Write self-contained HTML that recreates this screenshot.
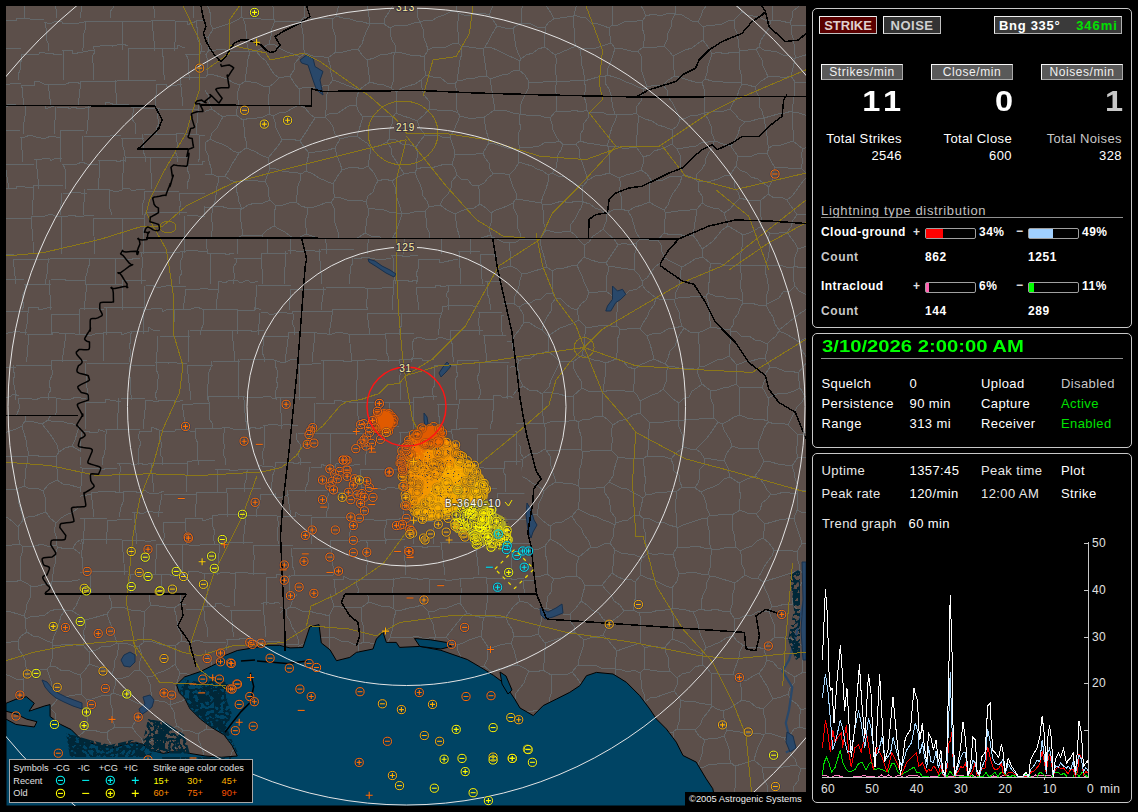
<!DOCTYPE html>
<html><head><meta charset="utf-8"><style>
html,body{margin:0;padding:0;background:#000;width:1138px;height:812px;overflow:hidden;position:relative;font-family:"Liberation Sans", sans-serif;}
.t{position:absolute;white-space:nowrap;line-height:1;font-family:"Liberation Sans", sans-serif;}
</style></head><body>
<div style="position:absolute;left:6px;top:6px;width:800px;height:800px;background:#5c4f4a;overflow:hidden"><svg width="800" height="800" viewBox="6 6 800 800" style="position:absolute;left:0;top:0"><rect x="6" y="6" width="800" height="800" fill="#5c4f4a"/><clipPath id="cRect"><polygon points="6.0,6.0 205.0,6.0 205.0,238.0 495.0,238.0 536.0,594.0 280.0,594.0 280.0,650.0 186.0,650.0 186.0,594.0 80.0,594.0 80.0,415.0 6.0,415.0"/></clipPath><clipPath id="cVor"><path d="M0 0H820V820H0Z M6.0,6.0 L205.0,6.0 L205.0,238.0 L495.0,238.0 L536.0,594.0 L280.0,594.0 L280.0,650.0 L186.0,650.0 L186.0,594.0 L80.0,594.0 L80.0,415.0 L6.0,415.0Z" clip-rule="evenodd"/></clipPath><g fill="none" stroke="#64686a" stroke-width="1" shape-rendering="crispEdges" clip-path="url(#cRect)"><path d="M-2 -4L3 -4L8 -6L14 -4L19 -4L24 -4M-4 -4L-4 1L-4 7L-5 12L-6 18M24 -9L29 -9L35 -10L40 -8L45 -8L50 -9L55 -9M23 -9L25 18M55 -8L67 -8L67 -12L85 -8M54 -8L57 18M85 -6L113 -6M84 -6L81 0L82 6L81 12L80 18M113 -8L118 -8L124 -7L130 -7L135 -8L141 -7L146 -8L152 -8M113 -8L113 -3L113 2L113 8L110 12L110 18M152 -5L157 -5L162 -5L168 -5L173 -4L178 -7L183 -4L189 -5L194 -5M151 -5L150 1L153 6L155 12L154 18M194 -3L224 -3M193 -3L193 18M224 -3L257 -3M226 -3L226 18M257 -11L263 -12L269 -11L275 -12L280 -11M257 -11L258 -5L258 1L258 6L259 12L261 18M280 -7L286 -6L292 -7L298 -7L305 -7M282 -7L281 -2L281 3L280 8L281 13L280 18M305 -4L337 -4M304 -4L302 1L302 7L301 12L300 18M337 -6L343 -6L348 -6L353 -6L353 -4L358 -6L364 -6M339 -6L340 -0L338 6L337 12L336 18M364 -8L400 -8M366 -8L365 18M400 -12L424 -12M398 -12L400 18M424 -11L436 -11L436 -13L447 -11M424 -11L426 -6L425 0L426 6L427 12L426 18M447 -11L473 -11M447 -11L447 -5L448 1L449 6L447 12L449 18M473 -11L492 -11L492 -14L511 -11M473 -11L476 18M511 -3L532 -3L532 -3L549 -3M509 -3L511 18M549 -7L554 -7L559 -8L564 -7L569 -8L574 -6L579 -7M551 -7L553 18M579 -4L584 -6L589 -4L595 -4L600 -3L605 -4L610 -4L615 -4M579 -4L580 1L580 7L581 12L580 18M615 -3L637 -3L637 -7L647 -3M615 -3L617 18M647 -3L660 -3L660 -2L672 -3M647 -3L648 2L646 7L648 12L648 18M672 -10L699 -10M673 -10L677 18M699 -6L717 -6L717 -6L733 -6M698 -6L695 18M733 -7L761 -7M735 -7L734 -2L736 3L737 8L736 13L738 18M761 -11L785 -11M761 -11L763 18M785 -9L791 -9L797 -9L803 -10L808 -8L814 -9L820 -9M783 -9L782 -4L784 2L786 7L786 12L785 18M3 20L16 20L16 18L44 20M2 20L-1 51M44 22L50 24L56 21L62 22L62 24L67 23L73 23L79 23L84 22M45 22L46 28L46 34L46 39L49 45L48 51M84 21L122 21M85 21L86 27L84 33L83 39L84 45L82 51M122 21L151 21M123 21L122 51M151 20L175 20M152 20L155 51M175 21L187 21L187 25L197 21M175 21L176 27L175 33L176 39L174 45L174 51M197 20L203 20L209 21L215 20L215 20L224 20M197 20L196 25L198 30L197 35L198 40L201 45L201 51M224 20L253 20M225 20L225 25L223 30L226 35L224 40L223 45L224 51M253 17L258 16L264 16L269 16L275 17L281 17M253 17L253 23L254 28L253 34L253 39L255 45L255 51M281 20L319 20M279 20L276 51M319 21L334 21L334 22L350 21M320 21L320 51M350 13L355 13L360 11L365 13L370 13L375 11L381 13L386 13M351 13L354 51M386 17L410 17M385 17L387 51M410 22L416 20L421 22L427 20L432 20L438 23L443 22L449 22M412 22L413 27L411 33L409 39L411 45L410 51M449 15L459 15L459 16L472 15M447 15L448 20L449 25L449 30L447 36L450 40L450 46L449 51M472 21L478 21L484 20L489 20L495 21M470 21L471 27L470 33L471 39L469 45L469 51M495 17L501 16L506 17L512 16L517 17L523 17M497 17L497 23L497 29L499 34L497 40L499 45L497 51M523 15L529 16L535 15L535 14L542 13L548 15M522 15L518 51M548 23L555 23L561 23L567 23L567 25L574 24L581 23M550 23L551 51M581 14L613 14M580 14L580 19L580 24L578 30L580 35L579 40L578 45L579 51M613 22L618 22L624 22L629 22L635 22L641 23L646 22M614 22L615 51M646 20L666 20L666 19L688 20M646 20L646 25L648 30L646 36L649 40L648 46L648 51M688 20L719 20M689 20L689 51M719 20L738 20L738 23L749 20M720 20L718 51M749 16L771 16L771 14L783 16M750 16L749 22L750 28L750 33L750 39L749 45L749 51M783 17L789 16L794 16L799 17L804 17L809 19L815 17L820 17M783 17L781 23L784 29L781 34L783 40L780 45L781 51M-8 48L21 48M-7 48L-6 53L-5 59L-4 64L-6 70L-5 75L-3 80M21 54L27 54L33 55L39 54L39 52L45 53L51 53L56 55L62 54M21 54L22 59L20 64L20 70L18 75L18 80M62 50L72 50L72 54L94 50M63 50L63 80M94 46L100 46L106 45L112 46L112 45L117 45L123 44L128 46M93 46L95 52L92 57L93 63L93 69L93 75L93 80M128 48L142 48L142 49L163 48M128 48L129 80M163 48L177 48L177 45L185 48M162 48L162 54L164 59L163 64L163 70L164 75L164 80M185 54L193 55L200 54L200 52L205 51L210 53L215 52L220 55L225 54M186 54L188 59L189 64L188 70L189 75L190 80M225 53L265 53M224 53L225 58L224 64L225 69L225 75L226 80M265 52L297 52M266 52L267 80M297 49L310 49L310 52L320 49M297 49L297 54L298 60L297 65L295 70L295 75L296 80M320 55L349 55M322 55L324 61L323 68L323 74L324 80M349 52L381 52M347 52L345 80M381 54L409 54M382 54L381 60L383 65L385 70L384 75L384 80M409 54L427 54L427 55L436 54M411 54L412 59L411 65L411 70L409 75L409 80M436 47L452 47L452 49L467 47M434 47L433 53L433 58L435 64L434 69L434 75L436 80M467 51L472 50L478 50L483 53L489 53L494 50L500 50L505 51M468 51L469 57L471 63L470 69L472 74L471 80M505 53L511 52L517 53L523 52L528 53M507 53L505 58L506 64L507 69L505 75L504 80M528 50L561 50M529 50L526 80M561 49L566 50L571 48L576 50L582 48L587 49L592 49L597 49L602 49M561 49L562 54L564 59L563 65L564 70L565 75L565 80M602 49L613 49L613 45L628 49M602 49L600 80M628 47L634 46L640 47L647 47L647 46L652 47L658 46L663 47M628 47L629 53L627 58L628 64L628 69L629 75L628 80M663 55L691 55L691 57L704 55M662 55L663 60L664 65L666 70L664 75L666 80M704 56L727 56L727 57L738 56M704 56L705 62L706 68L704 74L706 80M738 48L775 48M736 48L736 53L736 59L735 64L734 69L736 75L734 80M775 49L790 49L790 48L798 49M774 49L773 54L773 60L775 65L774 70L777 75L776 80M798 49L803 47L808 49L813 49L818 49L824 47L829 50L834 49L839 49M799 49L800 54L796 59L796 64L798 70L794 75L795 80M-1 84L5 84L10 84L16 83L21 84M1 84L-1 106M21 85L28 85L34 85L34 81L40 82L46 85M21 85L23 90L22 95L24 101L23 106M46 84L51 85L56 84L61 85L66 84L71 82L76 82L81 84M48 84L51 106M81 81L117 81M81 81L78 106M117 80L123 80L128 80L134 81L139 80L145 80L150 80L156 80M115 80L117 106M156 84L166 84L166 87L182 84M157 84L155 106M182 77L209 77M180 77L183 106M209 77L215 76L221 76L226 77L226 77L232 78L238 77M209 77L209 83L207 88L209 94L207 100L206 106M238 80L244 79L249 79L255 80L261 80M239 80L238 106M261 81L267 80L273 83L279 80L286 81M261 81L261 88L261 94L262 100L261 106M286 78L301 78L301 77L317 78M285 78L287 106M317 84L332 84L332 81L342 84M318 84L317 90L319 95L321 100L320 106M342 82L348 82L353 83L359 83L365 83L371 82M340 82L340 106M371 84L402 84M369 84L367 106M402 81L407 81L413 82L418 81L423 81L428 82L433 81M403 81L402 106M433 84L455 84M432 84L433 106M455 77L492 77M455 77L455 83L455 89L456 95L456 100L456 106M492 76L498 75L504 77L510 76L510 75L516 75L523 76L529 76M491 76L492 81L489 86L490 91L489 96L490 101L488 106M529 76L535 77L540 77L546 76L552 76L557 76L557 78L564 76L571 76M530 76L528 106M571 80L576 80L581 79L586 80L591 79L597 80L602 79L607 80M572 80L574 85L575 90L573 96L575 101L575 106M607 85L612 86L617 85L622 84L627 85L627 85L637 85M608 85L608 90L609 96L605 101L606 106M637 77L674 77M638 77L638 106M674 79L679 79L685 79L690 79L695 79L701 80L706 79L711 79M673 79L672 84L671 90L672 95L672 101L670 106M711 83L717 84L722 84L727 83L733 82L738 83L743 82L749 83M711 83L710 106M749 80L754 80L760 80L760 77L766 79L772 80M749 80L749 106M772 83L805 83M773 83L774 106M805 77L815 77L815 80L836 77M806 77L806 106M-7 106L7 106L7 104L24 106M-8 106L-9 112L-7 117L-9 123L-7 128L-7 134M24 105L29 105L34 106L40 105L45 105L45 109L51 107L57 105M25 105L26 111L25 116L24 122L23 128L24 134M57 107L63 107L68 107L68 109L74 107L79 109L85 108L90 107M56 107L54 134M90 106L97 106L105 106L105 102L110 103L115 105L120 104L126 104L131 106M89 106L88 111L89 117L87 123L88 128L86 134M131 108L137 107L143 108L149 108L154 109L160 108M133 108L133 113L132 119L135 123L136 129L135 134M160 109L198 109M159 109L157 114L158 119L159 124L156 129L156 134M198 102L203 103L209 102L214 102L220 103L225 101L231 102M199 102L196 134M231 103L272 103M229 103L228 108L229 114L227 119L225 124L226 129L225 134M272 110L277 110L283 110L289 110L294 110M271 110L271 116L273 122L274 128L273 134M294 110L301 109L307 110L307 107L313 108L318 110L323 109L329 110M293 110L290 134M329 106L354 106L354 106L366 106M329 106L327 134M366 107L381 107L381 108L397 107M368 107L368 112L368 118L368 123L366 129L365 134M397 111L408 111L408 113L432 111M398 111L397 117L398 122L399 128L399 134M432 104L437 103L443 103L449 104L455 104L461 104M430 104L432 134M461 101L470 101L470 105L489 101M463 101L463 134M489 103L494 104L499 104L504 103L510 104L515 102L520 102L526 103M490 103L493 134M526 106L531 107L536 106L541 105L546 106L552 105L557 106L562 107L567 106M525 106L523 111L525 117L524 123L522 128L522 134M567 104L573 106L579 104L585 104L590 104L590 103L597 103L603 104M567 104L567 110L568 116L569 122L569 128L569 134M603 103L627 103M605 103L601 134M627 105L658 105M626 105L625 134M658 111L664 111L669 111L669 111L675 112L680 112L686 111M659 111L660 117L658 122L658 128L657 134M686 102L693 103L701 102L701 106L706 105L711 102M687 102L687 134M711 103L716 103L722 104L728 103L733 103L739 103M713 103L715 134M739 105L771 105M741 105L740 110L738 116L740 122L740 128L738 134M771 109L803 109M773 109L774 134M803 104L808 104L813 104L818 103L823 104L829 104L834 104L839 104M802 104L802 110L800 116L799 122L800 128L800 134M-13 130L4 130L4 130L20 130M-11 130L-13 135L-12 141L-13 146L-13 151L-14 157L-14 162M20 137L25 137L30 135L36 137L36 137L41 138L46 138L51 136L56 137L61 137M21 137L23 162M61 130L84 130M60 130L61 162M84 136L90 136L95 137L100 136L105 137L110 136L116 135L121 136M83 136L82 162M121 138L144 138M123 138L122 144L124 150L125 156L126 162M144 134L176 134M142 134L143 140L143 145L143 151L145 156L145 162M176 134L181 133L187 135L193 134L199 134M177 134L176 139L178 145L175 151L177 156L177 162M199 135L214 135L214 131L229 135M200 135L199 140L199 146L199 151L200 157L198 162M229 139L258 139M227 139L228 162M258 129L264 128L270 129L275 129L281 129M258 129L258 162M281 136L299 136L299 139L323 136M282 136L280 141L280 146L281 152L282 157L280 162M323 137L328 137L334 136L340 138L345 137L351 137L357 137M323 137L324 142L322 147L322 152L321 157L321 162M357 136L372 136L372 135L390 136M355 136L357 141L355 146L355 152L355 157L355 162M390 139L423 139M392 139L390 145L390 150L393 156L391 162M423 131L449 131M425 131L423 162M449 136L455 137L461 136L461 139L466 139L470 137L475 136M449 136L451 141L448 146L450 152L448 157L450 162M475 138L480 138L485 138L490 138L490 140L498 138M476 138L475 144L476 150L475 156L475 162M498 135L505 135L511 135L518 135L518 135L525 134L532 135M497 135L497 140L497 146L497 151L498 157L497 162M532 138L537 139L542 139L547 139L552 138L557 138L562 138L567 138M532 138L533 144L535 150L534 156L534 162M567 129L572 129L578 130L583 129L588 129L593 130L598 129L603 130L608 129M567 129L568 135L568 140L570 145L568 151L570 156L570 162M608 132L614 132L619 132L624 133L630 133L635 132L641 132L646 132M609 132L610 162M646 132L677 132M648 132L648 138L647 144L649 150L648 156L648 162M677 132L693 132L693 132L708 132M676 132L677 137L674 142L675 147L676 152L673 157L674 162M708 135L744 135M707 135L710 162M744 139L749 138L754 139L759 139L764 139L769 138L775 139M744 139L743 145L743 150L743 156L743 162M775 130L792 130L792 127L808 130M775 130L774 136L775 141L773 146L774 152L774 157L772 162M808 135L841 135M806 135L804 162M4 164L34 164M5 164L9 189M34 159L39 160L45 158L50 159L50 161L56 158L62 159M36 159L39 189M62 164L67 165L72 164L77 164L82 162L87 164L93 164L98 164M63 164L65 169L65 174L66 179L65 184L65 189M98 160L116 160L116 162L125 160M99 160L99 166L99 172L99 178L98 184L98 189M125 157L131 157L137 157L143 157L149 157M124 157L122 189M149 157L188 157M150 157L152 189M188 164L195 164L202 164L202 161L209 161L215 164L222 164M187 164L187 169L189 174L189 179L187 184L187 189M222 166L227 168L232 165L237 165L243 166L248 168L253 165L258 166L263 166M223 166L222 172L223 178L224 184L223 189M263 163L304 163M262 163L260 189M304 166L339 166M305 166L302 189M339 163L374 163M340 163L341 168L340 174L339 179L340 184L341 189M374 157L379 157L384 156L389 157L395 157L400 156L405 157L410 158L415 157M375 157L374 162L374 168L373 173L373 179L376 184L374 189M415 165L420 166L426 165L431 166L436 166L441 164L446 165M413 165L414 171L414 177L417 183L416 189M446 159L461 159L461 157L474 159M448 159L449 164L449 169L449 174L447 179L446 184L447 189M474 164L479 164L485 164L490 164L495 164L500 164M475 164L475 169L475 174L475 179L475 184L475 189M500 161L507 160L514 161L514 165L520 163L526 161M498 161L498 189M526 160L559 160M527 160L528 166L528 172L528 178L529 183L529 189M559 163L571 163L571 165L586 163M561 163L560 189M586 160L622 160M588 160L589 189M622 161L627 161L632 161L637 159L642 159L647 162L652 161M622 161L625 189M652 157L673 157L673 160L684 157M650 157L649 163L649 168L647 173L648 179L647 184L646 189M684 164L718 164M682 164L680 189M718 161L757 161M719 161L718 167L716 172L717 178L717 184L716 189M757 165L775 165L775 169L787 165M758 165L754 189M787 162L793 161L798 162L803 161L808 162L814 163L819 162L824 162L829 162M786 162L785 167L786 173L783 178L782 184L783 189M6 188L16 188L16 186L34 188M6 188L5 215M34 185L63 185M34 185L32 215M63 193L69 193L75 192L81 193L87 193M62 193L60 215M87 189L110 189M85 189L83 215M110 190L116 192L122 190L122 189L128 188L133 191L139 189L145 190M109 190L110 197L109 203L110 209L112 215M145 191L179 191M144 191L145 197L143 203L142 209L143 215M179 193L208 193M179 193L179 198L181 204L179 209L180 215M208 187L213 186L218 186L224 187L229 189L234 187L239 187M207 187L204 215M239 189L268 189M239 189L241 194L240 199L240 205L242 210L242 215M268 187L293 187M269 187L270 193L268 198L270 204L269 209L269 215M293 187L315 187M293 187L294 215M315 192L345 192M314 192L310 215M345 194L365 194L365 191L375 194M344 194L342 215M375 189L407 189M374 189L377 215M407 191L445 191M408 191L406 215M445 190L471 190M445 190L446 195L445 200L444 205L443 210L443 215M471 189L477 189L483 189L483 187L489 188L495 188L502 189M470 189L468 215M502 189L537 189M501 189L500 215M537 189L543 189L548 189L554 189L554 191L560 191L566 189M536 189L534 215M566 190L602 190M566 190L565 195L565 200L565 205L562 210L563 215M602 188L627 188M601 188L598 215M627 194L665 194M628 194L629 199L627 205L627 210L627 215M665 192L676 192L676 190L698 192M666 192L668 198L667 204L667 209L667 215M698 190L726 190M699 190L702 215M726 189L731 189L736 190L742 189L747 187L752 189M725 189L728 215M752 186L791 186M753 186L755 191L754 197L754 203L754 209L755 215M791 192L830 192M792 192L790 198L789 204L789 209L789 215M-9 218L15 218L15 218L31 218M-10 218L-10 223L-10 229L-10 234L-11 239L-9 244L-8 249L-9 254M31 216L38 216L45 216L45 216L51 214L57 217L62 216M31 216L34 254M62 216L68 216L73 215L78 217L84 216L89 215L94 216M61 216L61 254M94 218L109 218L109 219L121 218M93 218L95 254M121 218L145 218M123 218L122 254M145 212L187 212M146 212L144 217L145 223L144 228L143 233L144 239L143 244L144 249L143 254M187 216L192 215L198 216L204 216L210 216M185 216L184 254M210 217L215 216L220 217L225 217L225 219L230 217L236 217M208 217L208 222L208 228L206 233L206 238L206 244L207 249L207 254M236 218L242 218L248 218L254 218L260 218L266 218M236 218L236 223L238 228L238 234L237 239L237 244L237 249L238 254M266 211L291 211M266 211L268 254M291 213L296 214L302 213L308 214L314 213L320 213L326 213M292 213L290 254M326 220L366 220M326 220L326 225L324 231L325 237L326 243L327 249L326 254M366 216L371 215L377 216L382 216L388 216L394 216L399 217L405 216M364 216L366 221L364 227L367 232L368 238L368 243L367 249L368 254M405 215L411 215L416 215L416 212L422 214L428 213L434 215L440 215M404 215L404 221L404 227L404 232L404 238L405 243L404 249L403 254M440 216L458 216L458 218L471 216M440 216L442 254M471 215L476 215L481 217L486 215L491 217L496 215L501 215L507 217L512 215M472 215L470 254M512 216L529 216L529 215L548 216M512 216L511 254M548 216L572 216M548 216L547 221L547 227L548 232L545 238L547 243L545 249L544 254M572 220L577 220L583 221L588 220L588 221L598 220M571 220L574 254M598 216L619 216L619 212L636 216M598 216L594 254M636 219L676 219M634 219L634 254M676 218L703 218M675 218L676 223L676 228L677 234L677 239L679 244L678 249L679 254M703 214L709 215L714 214L719 212L725 215L730 214M702 214L702 254M730 211L735 211L741 211L746 211L751 210L757 212L762 211M730 211L730 216L732 222L731 227L731 233L732 238L731 243L732 249L732 254M762 219L790 219M763 219L762 254M790 220L806 220L806 216L816 220M790 220L788 254M-17 254L14 254M-16 254L-16 259L-16 264L-18 269L-17 274L-17 279L-17 284M14 259L50 259M13 259L16 284M50 258L91 258M49 258L48 263L47 268L47 274L46 279L45 284M91 258L97 258L104 259L110 258L116 258M89 258L90 263L88 268L87 273L85 279L86 284M116 259L121 258L127 259L132 259L132 258L140 259M115 259L115 284M140 252L180 252M141 252L142 257L142 263L142 268L141 273L141 279L142 284M180 251L186 251L192 250L198 251L198 251L208 251M182 251L183 256L180 262L180 267L182 273L179 278L180 284M208 253L225 253L225 255L234 253M210 253L210 258L210 263L210 268L210 274L210 279L210 284M234 258L261 258M236 258L236 263L233 268L234 273L234 279L233 284M261 253L288 253M261 253L263 284M288 251L293 250L299 252L304 251L310 250L315 251L321 251M286 251L284 284M321 249L354 249M320 249L319 255L320 261L320 267L321 273L321 278L321 284M354 258L359 259L364 257L370 258L375 259L380 259L386 259L391 258M352 258L353 263L350 268L350 274L349 279L349 284M391 255L402 255L402 257L418 255M392 255L394 261L393 267L394 273L394 278L396 284M418 259L439 259L439 263L458 259M418 259L418 264L418 269L416 274L418 279L416 284M458 251L480 251M459 251L461 284M480 254L494 254L494 257L511 254M480 254L480 259L481 264L482 269L481 274L482 279L482 284M511 253L539 253M510 253L509 258L508 263L510 268L509 274L510 279L509 284M539 251L580 251M537 251L535 284M580 257L616 257M579 257L577 284M616 258L630 258L630 257L649 258M616 258L617 284M649 251L657 251L657 254L672 251M649 251L649 257L650 262L649 268L647 273L650 279L649 284M672 254L686 254L686 252L701 254M670 254L670 259L669 264L672 269L671 274L671 279L672 284M701 258L740 258M702 258L704 263L701 268L702 273L704 279L702 284M740 256L745 256L750 256L755 255L760 256L765 256L770 256L775 256L780 256M738 256L739 262L738 268L738 273L736 279L738 284M780 257L808 257M780 257L781 262L780 268L782 273L780 279L780 284M808 251L813 251L818 251L823 251L828 252L833 252L839 251M810 251L811 256L809 262L809 267L807 273L809 279L808 284M-12 279L24 279M-13 279L-14 285L-13 290L-14 295L-13 300L-13 305L-11 310M24 284L51 284M25 284L26 289L23 294L22 300L24 305L22 310M51 280L57 279L63 279L68 281L74 280L80 280L85 280M49 280L51 310M85 284L123 284M87 284L84 310M123 280L146 280M122 280L122 310M146 286L151 285L156 287L161 287L166 286L166 285L171 286L176 287L181 286L186 286M145 286L144 310M186 289L192 289L197 290L203 288L208 289L214 289L219 289M186 289L183 310M219 281L225 283L230 280L236 280L241 283L247 280L252 283L258 281M218 281L219 287L218 293L217 299L216 305L217 310M258 285L277 285L277 285L291 285M257 285L255 310M291 289L326 289M291 289L289 310M326 287L365 287M324 287L321 310M365 288L371 288L376 289L382 288L387 287L393 288M367 288L367 294L367 299L366 305L368 310M393 280L408 280L408 282L417 280M394 280L392 310M417 287L435 287L435 285L446 287M416 287L419 310M446 285L485 285M448 285L449 290L446 295L449 300L448 305L448 310M485 281L525 281M487 281L488 287L487 293L489 298L490 304L490 310M525 285L542 285L542 281L556 285M526 285L527 291L525 295L524 300L525 306L523 310M556 283L591 283M555 283L552 310M591 282L613 282M592 282L593 310M613 283L630 283L630 283L649 283M615 283L613 310M649 285L673 285L673 289L686 285M651 285L650 310M686 288L727 288M687 288L686 294L685 299L683 305L684 310M727 287L732 287L737 287L742 287L748 287L753 287L758 287L763 287M726 287L728 293L726 299L726 305L726 310M763 285L783 285L783 287L799 285M763 285L763 290L762 295L760 300L761 305L761 310M799 284L804 284L810 285L815 283L820 285L826 284L831 284L837 284M799 284L801 289L799 295L801 300L802 305L802 310M3 311L9 311L15 311L21 312L28 311M4 311L3 317L5 323L4 329L4 335M28 307L38 307L38 310L52 307M28 307L28 313L27 318L27 324L26 329L25 335M52 314L80 314M52 314L51 335M80 309L86 308L92 308L98 309L104 309M79 309L80 335M104 307L145 307M106 307L107 335M145 309L151 309L157 308L162 309L162 312L168 309L175 309M144 309L143 335M175 309L180 309L186 310L191 309L197 307L202 309M175 309L173 335M202 309L238 309M204 309L203 314L204 320L203 325L201 330L200 335M238 310L254 310L254 307L261 310M238 310L237 335M261 313L266 312L271 315L277 313L282 312L287 313L292 313M259 313L259 319L259 324L258 329L259 335M292 311L332 311M292 311L294 317L292 323L295 329L294 335M332 309L368 309M333 309L329 335M368 313L403 313M367 313L370 335M403 313L442 313M402 313L401 318L402 324L400 329L399 335M442 306L447 306L452 305L457 305L462 306L467 305L473 306L478 306M442 306L442 312L440 318L439 323L439 329L438 335M478 312L502 312M479 312L479 318L478 323L480 329L479 335M502 315L543 315M502 315L501 322L501 328L503 335M543 315L579 315M544 315L542 335M579 315L584 316L590 315L595 316L600 314L605 314L610 316L615 315M581 315L580 335M615 309L623 309L623 307L628 309L633 310L639 309M613 309L613 314L612 319L610 324L612 330L610 335M639 314L645 313L651 314L657 315L663 314M640 314L636 335M663 313L668 313L673 313L678 314L683 313L688 312L693 313M664 313L664 319L666 324L667 329L668 335M693 307L721 307M692 307L692 335M721 311L738 311L738 309L752 311M722 311L719 335M752 306L758 307L763 305L769 307L775 306L780 306M753 306L752 335M780 306L806 306M780 306L777 335M806 309L832 309M807 309L807 314L807 319L806 324L808 329L807 335M-13 332L-8 332L-3 331L3 333L8 333L13 332L13 331L20 332L27 332M-12 332L-9 362M27 334L52 334L52 332L65 334M29 334L28 340L28 345L27 351L27 357L26 362M65 334L70 333L75 334L80 334L85 334L85 335L92 335L98 333L104 334M66 334L62 362M104 332L121 332L121 335L130 332M104 332L103 362M130 331L136 331L142 331L148 331L148 327L153 330L160 331M132 331L130 336L131 341L129 346L131 352L130 357L129 362M160 336L190 336M158 336L157 341L158 347L157 352L156 357L157 362M190 330L231 330M188 330L188 362M231 330L251 330L251 332L264 330M232 330L235 362M264 336L273 336L273 337L289 336M262 336L264 341L263 346L262 352L264 357L264 362M289 332L295 333L300 332L306 332L311 332L317 332M289 332L285 362M317 333L322 333L327 334L332 334L338 332L343 333L348 333M315 333L312 362M348 334L385 334M349 334L352 362M385 333L414 333M385 333L386 339L387 345L386 351L388 356L388 362M414 339L419 337L425 339L430 339L435 340L440 337L446 339L451 339M414 339L412 344L413 350L413 357L411 362M451 330L483 330M450 330L450 336L451 341L453 346L452 352L453 357L453 362M483 335L516 335M484 335L487 362M516 332L531 332L531 333L553 332M517 332L517 337L517 342L516 347L517 352L515 357L516 362M553 332L592 332M554 332L554 337L552 342L555 347L553 352L554 357L553 362M592 338L621 338M592 338L592 362M621 330L646 330M620 330L620 336L619 341L621 346L618 352L619 357L619 362M646 334L658 334L658 337L678 334M645 334L645 362M678 330L713 330M677 330L677 335L675 341L676 346L675 352L676 357L674 362M713 334L747 334M712 334L712 340L710 345L711 351L709 357L709 362M747 336L765 336L765 333L787 336M747 336L747 341L748 346L749 352L751 357L750 362M787 336L827 336M788 336L788 341L788 346L788 352L784 357L785 362M-15 367L-10 368L-5 367L0 366L5 367L11 368L16 367M-15 367L-17 372L-14 378L-17 384L-16 389L-17 395L-17 400M16 365L52 365M14 365L13 370L15 375L13 380L14 385L15 390L16 395L15 400M52 360L87 360M51 360L51 365L52 370L52 375L50 380L49 385L51 390L48 395L49 400M87 363L129 363M85 363L88 400M129 365L155 365M129 365L129 370L129 375L131 380L130 385L130 390L131 395L131 400M155 363L162 362L168 363L168 362L174 362L180 364L187 363M156 363L156 369L158 374L158 379L157 385L157 390L155 395L157 400M187 365L192 365L197 365L202 366L207 365L213 365M187 365L191 400M213 361L240 361M211 361L211 367L209 372L208 378L208 384L207 389L208 395L207 400M240 359L274 359M239 359L238 400M274 360L280 362L286 362L292 359L298 360M276 360L275 365L277 370L278 375L276 380L278 385L276 390L275 395L277 400M298 364L303 364L309 365L315 363L321 364M299 364L300 400M321 360L343 360L343 362L360 360M323 360L323 400M360 360L365 360L371 359L377 360L382 360L388 360L394 361L400 360M358 360L356 400M400 359L405 359L411 359L417 358L422 359L422 360L428 361L434 359M400 359L399 364L401 369L400 375L399 380L401 385L400 390L400 395L400 400M434 365L457 365M434 365L434 370L435 375L434 380L435 385L432 390L433 395L433 400M457 360L479 360M457 360L457 365L456 370L458 375L455 380L455 385L456 390L457 395L456 400M479 362L510 362M479 362L479 367L479 373L477 378L479 384L480 389L480 395L478 400M510 365L536 365M508 365L507 400M536 364L575 364M536 364L535 369L536 374L535 379L534 385L534 390L534 395L534 400M575 362L614 362M575 362L573 368L573 373L574 379L575 384L574 390L573 395L574 400M614 367L635 367L635 368L653 367M615 367L616 373L616 378L614 384L615 389L613 395L614 400M653 367L658 368L664 366L669 366L674 367L679 367L684 367M652 367L650 400M684 360L712 360M684 360L687 400M712 367L746 367M710 367L711 373L711 378L711 384L713 389L712 395L712 400M746 367L770 367M747 367L747 372L746 378L747 384L747 389L748 395L747 400M770 360L775 360L780 360L785 360L785 357L791 360L798 360M771 360L770 400M798 363L805 363L811 362L818 363L818 367L823 364L829 366L834 365L840 363M798 363L796 400M-6 396L-1 396L4 397L9 397L14 394L19 396M-6 396L-5 429M19 398L24 398L29 398L35 400L40 398L45 397L51 397L56 398M18 398L19 404L19 409L17 414L15 419L16 424L16 429M56 398L61 399L66 399L71 399L76 397L81 398L86 398M57 398L55 429M86 402L105 402L105 399L121 402M85 402L85 429M121 398L127 398L133 398L139 398L145 398M119 398L117 429M145 400L150 400L156 402L161 400L167 400L172 400L177 402L183 400M146 400L143 429M183 404L188 404L193 404L198 403L203 403L209 404M182 404L186 429M209 396L245 396M208 396L209 402L209 407L210 413L209 419L213 424L212 429M245 397L251 397L257 397L263 397L269 396L274 399L280 397M243 397L245 403L244 408L245 413L245 419L247 424L246 429M280 397L316 397M280 397L282 429M316 403L334 403L334 400L357 403M314 403L314 429M357 402L379 402L379 404L390 402M357 402L359 429M390 402L413 402M390 402L389 408L392 413L389 419L391 424L391 429M413 397L423 397L423 396L437 397M414 397L413 429M437 404L459 404M438 404L439 409L438 414L440 419L439 424L439 429M459 399L493 399M459 399L459 404L458 409L457 414L457 419L456 424L456 429M493 396L499 395L504 398L509 396L514 398L520 396L525 396M494 396L493 402L494 408L492 413L493 419L491 424L490 429M525 403L531 403L537 404L542 403L548 403L554 403M526 403L523 429M554 396L562 396L569 396L569 394L575 394L581 396L587 396M555 396L557 402L555 407L556 413L556 418L557 424L556 429M587 402L619 402M588 402L588 408L588 413L592 418L592 424L592 429M619 399L639 399L639 398L657 399M620 399L619 429M657 395L674 395L674 392L698 395M659 395L658 401L656 407L657 412L655 418L655 424L655 429M698 400L708 400L708 403L722 400M697 400L697 406L697 412L695 418L697 424L696 429M722 404L748 404M724 404L725 429M748 401L760 401L760 403L784 401M749 401L749 407L749 412L750 418L748 424L748 429M784 396L812 396M784 396L782 429M-6 430L25 430M-7 430L-7 465M25 430L36 430L36 427L49 430M26 430L23 465M49 429L82 429M49 429L51 465M82 432L87 431L92 433L98 432L98 429L105 432M81 432L81 438L80 443L81 449L79 454L81 460L80 465M105 429L140 429M106 429L106 434L105 439L105 444L105 450L104 455L102 460L103 465M140 431L151 431L151 427L162 431M140 431L138 437L141 443L139 448L138 454L139 460L138 465M162 431L168 432L175 431L175 429L180 430L185 429L190 431L196 431M160 431L159 437L161 442L161 448L160 454L163 459L162 465M196 428L222 428M195 428L195 433L196 439L198 444L197 449L197 455L198 460L198 465M222 427L227 427L233 429L238 429L243 429L248 429L253 427L258 429L263 427M224 427L224 433L223 438L224 444L224 449L223 454L226 460L225 465M263 425L268 425L273 424L278 425L283 425L288 424L293 426L298 425M265 425L264 431L264 437L264 442L264 448L262 454L263 459L263 465M298 433L303 433L308 435L313 433L318 433L324 433L329 433M297 433L296 439L300 444L300 449L298 455L301 460L300 465M329 433L334 433L339 433L344 433L350 433L355 433L360 433L366 433M330 433L331 465M366 427L372 425L378 427L385 427L385 426L392 425L399 427M366 427L368 432L367 438L366 443L366 449L366 454L365 460L365 465M399 432L408 432L408 431L415 432L422 432M400 432L401 438L400 443L397 448L399 454L397 460L396 465M422 432L427 433L432 431L437 432L442 432L447 431L452 432M421 432L422 438L424 443L423 449L425 454L424 460L424 465M452 429L457 430L462 428L468 429L473 428L478 429M451 429L452 434L453 439L454 444L453 450L454 455L454 460L455 465M478 434L515 434M478 434L477 465M515 431L521 431L526 431L532 431L532 429L538 430L543 431L549 431M516 431L517 465M549 432L554 432L560 430L565 430L570 432L575 432L580 433L585 432M549 432L551 465M585 426L625 426M585 426L587 465M625 426L638 426L638 427L659 426M625 426L625 431L627 437L626 442L626 448L628 454L628 459L627 465M659 425L689 425M659 425L660 431L660 437L660 442L660 448L660 454L659 459L660 465M689 433L695 434L701 434L707 433L712 433M688 433L687 465M712 430L748 430M713 430L711 465M748 434L762 434L762 433L781 434M746 434L745 439L747 444L746 449L746 455L744 460L745 465M781 428L792 428L792 425L810 428M783 428L783 465M810 430L815 429L820 432L825 432L831 432L836 430L841 429L846 430M810 430L811 465M-12 470L-1 470L-1 471L24 470M-11 470L-9 475L-10 481L-10 487L-8 492M24 468L40 468L40 470L53 468M22 468L22 474L21 480L20 486L21 492M53 467L82 467M52 467L50 492M82 469L87 468L92 469L97 468L102 470L107 468L112 468L117 469M83 469L81 475L82 481L81 486L80 492M117 463L123 463L128 463L134 465L140 463L145 465L151 463M119 463L121 469L119 475L120 481L119 486L120 492M151 463L168 463L168 463L187 463M151 463L154 492M187 461L192 461L198 460L204 461L209 460L215 461M188 461L186 492M215 469L229 469L229 471L247 469M217 469L217 475L217 480L218 486L217 492M247 469L253 469L259 469L259 465L265 467L271 466L276 469M248 469L246 474L246 480L244 486L245 492M276 462L283 462L291 462L291 462L296 464L301 462L306 462L311 462M275 462L275 467L274 472L272 477L272 482L271 487L271 492M311 467L321 467L321 464L326 466L331 465L336 467M309 467L309 472L308 477L308 482L306 487L305 492M336 464L342 463L348 465L354 465L360 464M335 464L335 470L336 475L334 481L333 486L333 492M360 469L398 469M360 469L362 492M398 462L403 464L409 461L414 462L419 464L425 462M399 462L402 492M425 465L447 465M423 465L424 470L424 476L426 481L425 487L425 492M447 467L476 467M447 467L447 472L448 477L448 482L446 487L446 492M476 468L481 467L487 469L493 468L499 468L504 468M476 468L477 474L475 480L475 486L473 492M504 461L533 461M504 461L505 466L503 471L506 476L505 482L505 487L505 492M533 461L538 461L543 461L549 461L554 460L559 461M533 461L533 467L533 472L531 477L531 482L531 487L532 492M559 469L564 469L569 469L574 468L579 469L585 471L590 469L595 471L600 469M561 469L565 492M600 470L613 470L613 466L633 470M600 470L602 475L602 481L602 486L601 492M633 467L666 467M632 467L633 472L632 477L634 482L635 487L636 492M666 467L673 467L680 467L680 468L688 467M664 467L665 492M688 468L719 468M687 468L688 474L688 480L685 486L687 492M719 464L726 466L732 464L732 466L739 464L746 464M721 464L721 492M746 465L768 465M747 465L746 470L747 476L745 481L745 487L744 492M768 466L774 468L779 466L785 468L790 466L795 466M768 466L768 492M795 464L801 465L806 464L811 464L816 465L821 465L827 464L832 464M796 464L795 470L796 475L795 481L798 486L796 492M-9 490L7 490L7 493L30 490M-11 490L-11 495L-10 501L-14 506L-13 512L-13 517M30 494L35 494L41 495L46 494L52 494L57 494M30 494L32 500L33 505L32 511L33 517M57 494L76 494L76 497L92 494M56 494L59 517M92 492L98 492L103 491L108 491L113 491L118 493L124 492M91 492L94 517M124 491L129 491L134 491L139 493L144 490L149 493L154 493L159 493L164 491M123 491L123 497L123 502L121 507L120 512L119 517M164 494L197 494M162 494L158 517M197 492L227 492M197 492L195 517M227 488L232 488L238 488L244 488L250 488L255 488L261 488M226 488L227 493L227 499L228 505L227 511L228 517M261 494L268 495L275 494L275 498L282 497L289 494M260 494L260 500L259 506L256 511L256 517M289 490L331 490M287 490L291 517M331 493L336 493L341 492L346 493L346 493L354 494L361 493M329 493L327 499L329 506L327 511L326 517M361 488L367 487L372 490L378 488L384 490L389 487L395 488L401 488M361 488L364 517M401 495L406 495L411 495L416 494L421 494L426 495L431 495M401 495L404 517M431 491L437 491L442 492L447 492L452 491L457 490L462 492L467 491M432 491L429 517M467 489L473 490L479 488L485 489L491 488L497 489M468 489L465 517M497 493L533 493M497 493L498 499L496 505L496 511L495 517M533 490L562 490M532 490L532 496L533 501L533 506L533 512L533 517M562 492L586 492L586 493L599 492M563 492L560 497L561 502L562 507L559 512L559 517M599 488L637 488M599 488L600 517M637 490L643 489L648 492L653 490L658 490L663 490M637 490L640 517M663 489L673 489L673 491L686 489M663 489L660 517M686 488L692 487L698 488L703 488L709 487L714 488L720 488M684 488L682 517M720 496L725 495L730 496L735 496L740 496L745 497L750 495L755 496M720 496L720 501L721 507L724 512L723 517M755 488L789 488M755 488L755 517M789 497L794 497L800 496L805 497L810 498L815 497L821 497L826 497L831 497M790 497L792 502L792 507L792 512L792 517M-22 516L-12 516L-12 517L-6 515L1 516M-24 516L-23 521L-23 527L-22 533L-21 538L-22 544M1 513L17 513L17 514L34 513M2 513L6 544M34 515L39 515L45 515L45 512L52 512L58 515M34 515L30 544M58 518L70 518L70 518L84 518M57 518L55 544M84 518L92 518L92 518L107 518M85 518L83 544M107 520L112 520L117 520L122 519L127 519L132 520M108 520L106 544M132 512L137 512L142 514L148 511L153 512L158 512L163 512M134 512L137 544M163 522L186 522M163 522L163 528L164 533L164 538L162 544M186 518L202 518L202 521L213 518M185 518L187 544M213 515L218 515L223 514L229 514L234 515L239 514L245 515M212 515L212 521L213 527L215 532L213 538L215 544M245 515L250 515L255 515L261 516L266 515L272 516L277 515M246 515L243 544M277 516L283 516L289 516L295 516L295 512L300 515L306 515L312 516M277 516L278 521L278 527L277 533L277 538L279 544M312 517L352 517M311 517L311 523L312 528L310 533L312 539L311 544M352 520L357 520L363 520L369 519L374 520L380 520L386 520M351 520L350 526L350 532L349 538L349 544M386 519L391 519L397 520L402 518L408 519L413 519M386 519L386 525L384 531L385 538L385 544M413 521L429 521L429 522L437 521M413 521L414 544M437 519L471 519M436 519L435 525L433 531L434 538L433 544M471 522L502 522M470 522L470 544M502 519L508 519L513 519L519 519L525 519L530 519L530 522L536 521L543 519M504 519L505 544M543 514L549 516L554 514L560 516L566 513L572 514M543 514L540 544M572 516L613 516M572 516L571 544M613 522L634 522L634 522L649 522M614 522L615 527L618 533L616 539L618 544M649 520L685 520M650 520L648 544M685 517L698 517L698 518L724 517M684 517L687 544M724 518L730 518L735 516L741 518L746 518M724 518L724 523L723 528L726 533L725 539L725 544M746 517L783 517M746 517L744 544M783 514L788 513L794 513L799 516L805 514L810 513L816 514M784 514L783 520L783 526L783 532L782 538L783 544M-20 539L-15 539L-10 539L-4 538L1 541L6 538L11 539L16 538L22 539M-19 539L-17 575M22 543L47 543M23 543L26 575M47 543L57 543L57 542L63 541L69 543L75 544L81 543M47 543L47 549L47 554L47 559L46 565L48 570L47 575M81 539L122 539M81 539L83 545L82 550L81 555L83 560L82 565L83 570L84 575M122 540L128 541L134 540L139 540L145 541L151 541L156 540M122 540L125 575M156 544L184 544M157 544L155 575M184 544L189 545L195 545L200 545L205 544L210 545L216 544L221 544M182 544L182 575M221 542L253 542M220 542L217 575M253 545L293 545M253 545L253 550L254 555L254 560L253 565L253 570L253 575M293 548L331 548M292 548L291 554L293 559L292 565L294 570L295 575M331 540L352 540L352 542L368 540M330 540L334 575M368 540L386 540L386 539L405 540M366 540L368 545L366 550L365 555L367 560L367 565L366 570L367 575M405 546L410 546L415 546L420 546L425 548L430 546L435 546L440 546M404 546L406 575M440 542L446 542L452 542L457 542L463 542L468 542L474 542M441 542L445 575M474 539L479 538L485 540L490 539L495 538L501 539L506 539L511 539M475 539L479 575M511 543L543 543M511 543L511 575M543 542L573 542M543 542L543 575M573 546L609 546M572 546L576 575M609 548L615 549L621 548L626 548L632 547L637 548L643 547L649 548M609 548L610 575M649 543L673 543M650 543L654 575M673 542L679 542L684 542L689 541L694 541L699 543L705 543L710 541L715 542M673 542L674 548L672 553L674 559L675 564L674 570L674 575M715 544L720 544L726 543L731 544L731 540L739 544M716 544L719 575M739 540L775 540M738 540L739 545L738 550L737 555L740 560L740 565L738 570L740 575M775 547L808 547M776 547L777 553L779 558L780 564L778 570L780 575M808 543L815 543L822 543L822 545L828 543L834 543L841 544L847 543M807 543L808 549L808 554L808 559L806 565L806 570L806 575M-9 577L-4 578L2 577L7 577L12 577L17 577L22 578L27 578L33 577M-8 577L-9 582L-6 588L-7 594L-6 600L-7 606M33 574L38 574L44 574L50 575L56 574L61 574M34 574L31 606M61 571L75 571L75 574L90 571M63 571L63 576L61 581L64 586L63 591L60 596L61 601L61 606M90 571L128 571M90 571L92 606M128 574L163 574M130 574L130 579L129 585L130 590L131 595L130 600L132 606M163 574L168 574L173 576L178 576L183 574L188 574L188 571L194 571L199 572L205 574M162 574L161 580L161 585L164 590L162 595L164 600L164 606M205 573L210 573L215 573L220 573L225 572L230 573L235 573M205 573L204 578L207 584L207 589L207 595L206 600L208 606M235 573L240 572L245 572L251 574L256 573L261 573L266 573M236 573L234 606M266 577L276 577L276 574L291 577M267 577L266 606M291 575L333 575M290 575L289 580L289 585L289 590L289 595L287 601L287 606M333 579L343 579L343 576L349 579L356 579M334 579L337 606M356 579L377 579L377 579L395 579M357 579L356 584L359 590L357 595L357 600L358 606M395 578L400 578L406 577L411 578L417 578L417 580L423 579L429 578M394 578L391 606M429 579L445 579L445 581L459 579M429 579L429 606M459 578L473 578L473 577L487 578M460 578L463 606M487 578L511 578L511 580L524 578M486 578L487 584L487 589L488 595L489 600L487 606M524 580L529 581L535 580L540 580L546 580M523 580L526 606M546 574L551 574L556 575L561 574L566 572L571 572L577 574M547 574L550 606M577 580L588 580L588 578L607 580M576 580L575 585L578 590L577 595L578 600L578 606M607 572L613 572L619 571L624 572L630 573L636 573L642 572M607 572L604 606M642 578L678 578M642 578L643 584L643 589L642 595L640 600L641 606M678 576L689 576L689 573L704 576M678 576L677 582L677 588L677 594L677 600L677 606M704 580L727 580L727 578L744 580M703 580L701 606M744 580L749 579L755 579L761 580L761 579L767 580L773 580M743 580L741 585L740 590L742 595L742 601L740 606M773 579L779 580L785 579L792 578L798 579M772 579L774 606M798 573L839 573M798 573L799 606M-20 605L-1 605L-1 604L21 605M-22 605L-21 637M21 605L26 605L32 605L37 607L42 604L47 607L52 604L57 607L62 605M20 605L23 637M62 602L88 602M62 602L63 608L61 614L59 620L60 626L58 631L59 637M88 602L93 603L99 601L105 603L110 602M89 602L88 607L87 612L90 617L88 622L87 627L89 632L87 637M110 602L116 601L121 602L126 602L132 602L137 602L142 602L148 602M109 602L109 637M148 602L179 602M147 602L149 607L150 612L149 617L150 622L150 627L150 632L151 637M179 609L188 609L188 609L203 609M181 609L181 615L181 620L182 626L181 632L181 637M203 606L209 606L215 606L215 604L220 603L225 606L230 606M203 606L204 611L204 616L205 621L207 627L208 632L207 637M230 610L261 610M232 610L231 616L232 621L232 626L233 632L233 637M261 604L266 602L272 604L277 602L283 605L288 604L294 604L299 604M263 604L266 637M299 602L338 602M300 602L301 637M338 605L370 605M339 605L337 610L338 616L339 621L338 627L338 632L336 637M370 606L375 608L380 606L386 605L391 605L396 606L401 606M368 606L367 637M401 608L415 608L415 609L428 608M401 608L402 613L399 619L400 625L400 631L400 637M428 604L445 604L445 604L464 604M430 604L431 609L430 615L431 620L428 626L428 632L430 637M464 601L491 601M464 601L462 637M491 602L520 602M491 602L490 607L490 612L491 617L491 622L491 627L491 632L491 637M520 607L557 607M521 607L517 637M557 605L563 604L568 607L573 607L578 604L583 605M559 605L555 637M583 609L609 609M581 609L581 637M609 609L636 609M607 609L609 637M636 602L641 601L646 601L651 601L656 602L661 601L666 602M636 602L637 607L635 612L634 617L634 622L634 627L635 632L633 637M666 609L708 609M666 609L664 637M708 607L713 605L718 607L723 607L729 607L734 605L739 607M708 607L708 637M739 610L758 610L758 611L774 610M739 610L740 615L737 620L739 626L737 632L736 637M774 607L780 605L785 607L790 608L796 605L801 605L806 607M776 607L777 612L776 617L776 622L775 627L777 632L777 637M806 602L826 602L826 599L842 602M808 602L807 637M5 636L30 636L30 639L45 636M4 636L4 641L3 646L5 651L2 657L3 662M45 640L50 641L56 640L61 640L66 640L71 639L76 639L82 640L87 640M47 640L48 646L48 651L49 656L49 662M87 633L93 632L98 633L98 635L105 634L112 633M86 633L85 639L85 645L86 651L86 656L84 662M112 632L150 632M111 632L109 662M150 636L186 636M151 636L151 641L152 647L152 652L152 657L151 662M186 642L192 642L197 640L203 642L209 642L215 642L220 642L226 642M185 642L186 647L185 652L186 657L185 662M226 639L231 639L237 640L242 638L247 638L252 640L258 640L263 639M228 639L224 662M263 641L296 641M262 641L263 646L261 652L264 657L262 662M296 641L302 641L309 642L315 641L315 640L321 640L327 641L333 641M296 641L294 662M333 632L368 632M332 632L335 662M368 637L373 638L378 638L383 637L388 637L393 637L398 637M368 637L368 662M398 635L427 635M399 635L400 640L399 646L400 651L401 657L403 662M427 640L462 640M427 640L429 662M462 634L495 634M461 634L460 662M495 636L504 636L504 633L509 633L514 634L519 636M496 636L498 641L498 647L498 652L497 657L497 662M519 633L544 633M519 633L522 662M544 637L549 638L554 637L559 636L565 637L570 637M542 637L543 662M570 636L595 636M570 636L572 662M595 633L600 633L606 633L612 631L617 633L623 633L629 633M595 633L592 662M629 635L660 635M628 635L629 641L629 646L631 651L632 656L631 662M660 634L696 634M661 634L662 662M696 636L718 636L718 635L736 636M694 636L691 662M736 640L755 640L755 641L770 640M737 640L738 645L739 651L738 656L738 662M770 642L778 642L778 644L795 642M771 642L774 662M795 638L833 638M796 638L792 662M-20 660L-10 660L-10 657L9 660M-21 660L-24 693M9 659L39 659M7 659L3 693M39 661L51 661L51 664L67 661M38 661L39 666L39 671L39 677L38 682L39 687L40 693M67 662L76 662L76 664L82 663L89 664L95 662M67 662L68 693M95 663L102 663L109 663L115 663L115 663L121 664L127 663L133 663M97 663L97 693M133 661L152 661L152 664L173 661M135 661L135 667L132 672L131 677L133 682L130 687L131 693M173 659L212 659M172 659L172 693M212 664L218 665L224 663L230 664L236 664M212 664L216 693M236 660L257 660L257 660L271 660M238 660L236 693M271 657L277 657L283 656L288 657L294 657L300 657L305 657M271 657L273 662L272 667L272 672L273 677L274 682L274 688L274 693M305 665L334 665M304 665L304 671L305 676L307 681L304 687L306 693M334 661L341 663L347 661L347 660L352 660L358 660L364 662L369 661L375 661M333 661L333 693M375 666L403 666M374 666L376 693M403 663L442 663M403 663L403 669L403 675L404 681L404 687L404 693M442 666L448 667L454 666L460 666L467 666M444 666L443 672L446 677L445 682L447 687L446 693M467 666L472 668L478 666L484 665L490 666L490 666L496 665L501 666M466 666L466 672L467 677L466 682L469 687L468 693M501 660L534 660M503 660L503 666L505 671L504 676L505 682L505 687L505 693M534 660L559 660M534 660L533 666L533 671L535 676L536 682L537 687L536 693M559 660L565 659L571 660L571 663L576 662L581 660L586 660M560 660L556 693M586 660L609 660M585 660L588 693M609 663L625 663L625 664L637 663M608 663L608 669L607 675L608 681L607 687L605 693M637 661L668 661M637 661L639 693M668 663L678 663L678 665L700 663M669 663L673 693M700 660L706 660L711 660L717 660L722 660L727 660L733 660M699 660L698 666L698 671L699 677L699 682L701 687L700 693M733 660L761 660M733 660L734 693M761 665L793 665M760 665L759 671L757 676L758 682L759 687L757 693M793 667L829 667M793 667L795 672L793 677L795 682L796 687L797 693M-18 690L-9 690L-9 688L-2 689L5 690M-18 690L-16 695L-17 701L-15 707L-16 712L-16 718L-16 724M5 688L15 688L15 687L34 688M6 688L8 724M34 690L49 690L49 691L57 690M35 690L32 724M57 697L63 697L68 698L74 697L79 697L79 696L85 697L90 695L96 697M56 697L58 702L57 708L57 713L58 718L58 724M96 689L116 689L116 690L136 689M96 689L96 695L95 701L96 706L95 712L97 718L97 724M136 696L141 694L147 696L153 696L159 696M137 696L137 701L139 707L137 713L140 718L139 724M159 689L191 689M159 689L162 724M191 694L197 694L202 694L208 694L213 693L219 694L225 694M191 694L190 700L189 706L188 712L189 718L189 724M225 688L249 688M225 688L226 693L226 699L226 704L226 709L226 714L223 719L225 724M249 691L287 691M248 691L249 724M287 696L293 697L299 696L305 696L311 696M286 696L284 702L285 707L284 713L284 718L285 724M311 696L339 696M312 696L311 702L313 707L313 713L314 718L316 724M339 695L378 695M339 695L341 724M378 695L385 694L392 695L392 693L398 694L404 693L410 695M378 695L377 701L378 707L380 712L379 718L378 724M410 692L436 692M410 692L410 697L410 703L407 708L407 713L408 719L407 724M436 694L441 696L446 696L451 694L456 694L461 694L466 694M435 694L438 724M466 694L472 692L478 694L484 692L489 694L495 692L501 694M465 694L466 699L463 704L464 709L463 714L462 719L462 724M501 689L506 689L511 689L516 689L521 689L526 688L531 691L536 689M500 689L501 695L499 701L498 707L499 712L498 718L498 724M536 697L542 697L548 695L554 695L559 697L565 697M536 697L539 724M565 691L571 691L576 692L582 691L587 689L593 692L599 691L604 691M563 691L560 724M604 696L610 694L616 694L622 694L628 696L634 696M605 696L606 701L603 707L603 712L605 718L604 724M634 696L641 694L648 696L648 699L653 697L658 697L663 696L669 696M634 696L638 724M669 690L708 690M670 690L671 696L672 701L672 707L671 713L670 718L672 724M708 689L732 689M708 689L709 694L707 699L707 704L708 709L708 714L705 719L706 724M732 696L768 696M730 696L733 724M768 692L775 692L781 691L788 692L788 690L793 692L800 692L805 692M767 692L763 724M805 693L833 693M807 693L808 724M-1 726L6 726L13 726L13 728L22 726M-1 726L-2 754M22 727L28 728L33 727L39 727L44 727M21 727L19 732L20 737L20 743L20 748L20 754M44 720L49 720L55 720L60 719L65 720L70 721L75 721L80 720L85 720M45 720L48 754M85 721L92 721L99 721L99 717L105 717L110 720L116 721M85 721L83 726L84 732L84 737L83 743L84 748L82 754M116 725L144 725M116 725L117 731L116 736L119 742L118 748L120 754M144 726L149 726L154 727L160 726L165 727L170 725L175 726L180 727L186 726M142 726L145 754M186 726L191 726L196 726L202 726L207 726L213 727L218 726M185 726L184 754M218 720L241 720M217 720L219 754M241 729L247 729L252 730L257 730L262 729L268 728L273 730L278 729M242 729L241 735L241 741L241 747L240 754M278 728L311 728M279 728L280 733L278 738L280 743L281 748L280 754M311 719L317 719L322 719L328 719L334 719L340 719L345 719M309 719L310 725L310 731L310 737L311 742L311 748L310 754M345 726L356 726L356 724L374 726M345 726L346 754M374 720L411 720M372 720L373 725L372 731L373 737L372 742L373 748L372 754M411 720L442 720M411 720L412 754M442 722L457 722L457 722L471 722M443 722L442 727L442 732L440 738L442 743L442 748L440 754M471 728L512 728M471 728L473 733L472 738L472 743L474 748L472 754M512 720L517 722L522 719L527 722L532 720L537 719L542 719L547 720L553 720M511 720L510 726L510 731L508 737L510 743L508 748L507 754M553 725L558 725L563 725L569 725L574 724L580 725M552 725L552 731L554 736L553 742L554 748L553 754M580 722L585 721L590 723L596 721L601 722L607 722M578 722L578 727L577 732L578 738L580 743L577 748L579 754M607 721L629 721M608 721L607 754M629 723L639 723L639 720L657 723M629 723L628 728L628 733L627 738L627 743L626 748L626 754M657 721L662 720L667 721L673 721L678 721L684 722L689 721L695 721M656 721L654 754M695 724L728 724M693 724L695 754M728 729L734 730L740 728L746 729L746 725L751 725L756 729L762 729M729 729L727 735L727 741L728 747L728 754M762 725L803 725M762 725L760 754M803 726L808 726L813 726L819 726L824 727L829 726L834 726M802 726L804 731L804 737L803 742L803 748L803 754M-23 749L16 749M-21 749L-23 793M16 753L50 753M15 753L16 758L17 763L15 768L17 773L17 778L18 783L18 788L19 793M50 749L55 748L60 749L66 748L71 749L76 748L82 749M50 749L48 793M82 755L99 755L99 757L119 755M83 755L84 761L83 766L86 771L85 777L86 782L87 788L87 793M119 755L125 755L131 757L137 754L142 755M120 755L122 761L121 766L121 772L120 777L122 783L121 788L122 793M142 749L148 749L154 751L160 749L166 749M144 749L144 755L144 761L145 766L146 771L147 777L148 782L146 788L148 793M166 757L204 757M167 757L168 793M204 757L218 757L218 755L226 757M204 757L202 793M226 757L263 757M225 757L224 762L226 767L225 773L226 778L224 783L226 788L225 793M263 757L270 757L276 757L276 759L286 757M264 757L263 762L264 767L263 773L260 778L261 783L261 788L260 793M286 752L291 751L297 751L302 752L308 753L313 753L319 752M287 752L288 757L286 762L286 767L284 773L285 778L284 783L286 788L284 793M319 754L354 754M321 754L320 760L320 765L318 771L319 777L319 782L320 788L318 793M354 753L359 753L364 754L369 752L375 753L380 753L385 753L390 754L395 753M354 753L356 758L355 763L356 768L356 773L357 778L359 783L359 788L358 793M395 755L401 755L406 753L412 755L412 757L417 754L423 755M394 755L395 793M423 749L429 749L435 749L441 748L447 749M422 749L422 755L424 760L424 766L424 771L422 777L424 782L424 788L424 793M447 756L476 756M447 756L449 793M476 756L514 756M477 756L477 762L477 767L477 772L478 778L478 783L478 788L478 793M514 757L526 757L526 754L547 757M515 757L517 793M547 754L589 754M547 754L551 793M589 758L595 757L600 758L606 757L611 759L617 758M589 758L593 793M617 751L638 751L638 749L650 751M616 751L617 756L616 761L616 767L618 772L619 777L618 783L617 788L619 793M650 755L656 755L663 755L663 759L670 757L677 755M648 755L648 761L647 766L649 771L650 777L649 782L648 788L650 793M677 753L700 753L700 750L719 753M675 753L676 793M719 752L733 752L733 755L754 752M717 752L718 757L717 762L717 768L716 773L715 778L717 783L716 788L716 793M754 756L786 756M754 756L757 793M786 752L811 752L811 756L827 752M787 752L789 793M6 790L20 790L20 792L38 790M7 790L7 796L9 802L10 807L10 813L10 819M38 792L69 792M40 792L40 797L39 803L40 808L39 814L40 819M69 791L79 791L79 793L84 793L89 792L94 792L99 791M70 791L70 819M99 798L138 798M100 798L100 803L101 809L100 814L100 819M138 797L144 799L150 797L156 797L161 796L167 797L173 797M139 797L140 803L141 808L141 814L142 819M173 790L202 790M173 790L171 796L172 802L171 808L169 813L170 819M202 791L219 791L219 792L230 791M201 791L202 797L204 802L205 808L204 814L205 819M230 795L236 795L243 795L243 791L249 791L253 794L259 795M228 795L228 819M259 797L265 797L270 797L275 799L281 797L286 796L292 797M259 797L257 819M292 796L304 796L304 799L317 796M291 796L291 819M317 790L324 790L330 790L330 789L335 790L341 790L346 789L351 791L357 790M316 790L316 819M357 790L362 788L367 788L372 790L377 790L382 790L387 790L392 790M355 790L354 819M392 789L428 789M393 789L389 819M428 789L434 789L439 789L445 790L450 789L456 789M430 789L434 819M456 790L461 790L467 790L472 790L478 790L483 790L489 790L494 790M455 790L454 819M494 789L510 789L510 788L519 789M495 789L499 819M519 789L550 789M518 789L519 794L517 799L516 804L517 809L517 814L516 819M550 789L572 789M549 789L553 819M572 798L598 798M571 798L570 803L568 808L567 814L567 819M598 792L635 792M598 792L599 819M635 797L653 797L653 794L665 797M637 797L638 819M665 798L671 798L677 798L683 798L683 796L689 797L695 797L701 798M663 798L664 819M701 797L706 798L712 796L718 797L723 796L729 797L735 796L740 797M700 797L701 803L702 808L702 814L704 819M740 790L747 788L753 788L759 790L759 792L765 791L771 790L776 790M740 790L741 796L741 802L739 807L740 813L740 819M776 790L784 789L791 790L791 793L797 793L802 790M775 790L775 796L775 802L774 808L774 813L773 819M802 791L807 792L813 791L818 792L824 791L829 791L835 791M804 791L802 819"/></g><g fill="none" stroke="#64686a" stroke-width="1" shape-rendering="crispEdges" clip-path="url(#cVor)"><path d="M833 702L827 703L820 705L814 707L807 708L801 710M800 727L799 718L801 710M800 727L806 729L812 730L817 734L822 736M814 765L820 769L827 771M814 765L814 759L817 754L819 748L821 742L822 736M458 341L457 347L460 354L460 360M458 341L452 339L445 340L439 339L433 339L427 338M427 338L424 346L421 355M421 355L427 357L433 361L439 363L445 366L450 370M450 370L456 366L460 360M609 482L615 485L621 488L627 489L632 492L638 495L643 498M609 482L613 476L614 470L616 463L618 457M618 457L625 458L631 458L637 458L643 459M643 498L646 495M643 459L644 466L644 473L646 480L644 488L646 495M111 427L104 427L97 426L91 423L84 422M111 427L113 420L115 413L116 406L117 399M117 399L115 396M115 396L108 398L101 397L94 398L86 398L79 398M84 422L81 415L81 407L78 400M78 400L79 398M105 362L110 367M105 362L97 363L89 364L82 365M110 367L110 374L111 382L115 389L115 396M79 398L80 391L80 385L80 378L81 372L82 365M823 835L817 832L811 828L806 823L802 818L795 815M795 815L790 825M795 803L795 815M795 803L801 803L807 802L813 802L819 803L825 803M805 396L802 402L797 407L794 413L791 419L788 425M805 396L800 388M800 388L794 391L788 393L780 393L774 395L768 398M788 425L782 423L775 424L768 422M768 398L768 406L767 413L768 421M768 422L768 421M762 387L765 392L768 398M762 387L765 380L766 373L770 367M798 373L791 371L784 371L777 368L770 367M798 373L799 381L800 388M762 387L755 387L747 387L740 388M740 388L739 394L739 401L739 408L740 415M740 415L747 418L753 419L761 419L768 421M770 367L765 358M740 388L736 384M736 384L737 378L736 371L737 365M765 358L758 359L751 361L744 362L737 365M649 422L656 422L664 422L670 421L678 420M649 422L649 429L648 436L649 443L648 450L647 456M647 456L653 457L659 456L665 457L671 459M684 447L677 452L671 459M684 447L682 441L682 434L679 427L678 420M678 420L678 420M718 422L722 424M718 422L714 428L710 434L706 439L701 444L696 449M722 424L724 430L727 435L730 440L732 446M732 446L727 453L724 460M724 460L717 460L711 459L704 458M696 449L701 453L704 458M736 384L729 387L723 388L717 390L710 390M740 415L734 417L728 421L722 424M710 390L710 397L713 404L713 411L714 418M714 418L718 422M684 447L690 449L696 449M714 418L708 419L702 418L696 420L690 419L684 420L678 420M758 448L751 448L745 448L738 448L732 446M758 448L759 441L762 434L764 428L768 422M758 448L761 455L764 461M764 461L760 469L755 476M755 476L747 479L739 483M724 460L728 468L730 477M739 483L730 477M755 476L760 479L764 484L767 490L771 494M739 483L739 489L741 496L739 503L740 510M740 510L747 513L756 514M771 494L767 499L762 503L760 510L756 514M797 493L790 493L784 492L777 494L771 494M797 493L797 502L797 510M756 514L760 519L765 524M765 524L772 522L779 520L786 519L794 518M797 510L794 518M78 400L69 400L60 400M51 364L52 370L54 377L55 384L54 390L57 397M51 364L58 363L64 364L71 361L77 362M82 365L77 362M60 400L57 397M59 452L57 445L54 440L50 434L46 429L42 424M59 452L65 448L72 446M72 446L75 440L77 433L79 427M79 427L73 424L67 423L61 421L54 422L48 420M48 420L42 424M22 426L24 433L26 440L27 447L29 455M22 426L25 421M56 457L49 456L42 457L35 455L29 455M56 457L59 452M25 421L34 422L42 424M84 422L79 427M60 400L56 407L52 413L48 420M22 426L16 429L10 431L4 433L-2 435M-2 435L-5 442L-4 449L-6 456M27 457L29 455M27 457L21 456L14 456L8 456L2 459L-5 458M-5 458L-6 456M-3 364L-3 370L-4 377L-4 384L-6 390M-3 364L3 360L9 359L16 358L21 354M35 366L34 372L32 377L29 382L27 388L25 394M35 366L28 361L21 354M-6 390L0 392L7 394L14 396L20 398M20 398L25 394M-13 355L-8 359L-3 364M-14 394L-6 390M20 339L19 347L21 354M20 339L12 337L5 333L-1 328M-1 328L-7 331L-12 335M50 363L51 364M50 363L43 364L35 366M57 397L50 395L44 394L38 394L31 395L25 394M-2 435L-11 428M25 421L25 413L22 406L20 398M367 60L368 67L369 75L370 82M367 60L374 58L380 55L388 54L395 52M370 82L377 84L384 85L391 88M391 88L393 82L394 76L393 70L393 64L393 58L395 52M395 52L395 52M549 -22L545 -16L542 -11L540 -4M540 -4L532 -3L523 -2M523 -2L517 -7L511 -12M523 -2L523 5L521 11L522 17L521 23M521 23L513 28M513 28L505 28L497 26M489 15L493 20L497 26M489 15L492 8L493 1L496 -5M511 -12L504 -9L496 -5M479 -21L473 -16L470 -10L466 -4L459 0L456 6M456 6L452 1L449 -4L445 -9L442 -15M496 -5L491 -12L485 -16L479 -21M763 538L769 543L774 550M763 538L764 531L765 524M774 550L782 551L789 550L797 552M794 518L796 525L798 531L800 537L802 543M797 552L802 543M762 767L763 773L764 779L767 785L767 791L770 797M762 767L769 768L776 767L783 767L790 766L797 765M770 797L777 797L784 797L791 798M791 798L793 793L794 786L798 781L799 775L801 769M797 765L801 769M795 803L791 798M759 833L758 827L760 821L759 814L761 808L760 802M760 802L770 797M814 765L808 768L801 769M784 738L790 735L794 729L800 727M784 738L787 743L790 748L791 755L795 759L797 765M523 386L529 390L536 390L542 394M523 386L520 380L519 373L517 366M517 366L519 361M560 362L554 356L548 351M560 362L557 368L554 374L551 380L549 387L544 392M544 392L542 394M548 351L542 353L536 354L531 358L524 358L519 361M488 337L487 343L485 349L486 356L484 362L484 368M488 337L493 340L500 340L506 341L512 342M517 366L511 367L504 369L498 367L492 369L485 370M485 370L484 368M512 342L513 349L515 355L519 361M424 329L417 329L411 331L404 332L397 332L390 334M424 329L425 322L425 314L424 307M390 334L392 329L393 322L395 317L398 311L400 305L402 299M402 299L409 302L417 304L424 307M451 302L455 299L460 295M451 302L452 309L457 315L459 322L461 329L463 335M460 295L467 297L474 296L480 298L487 298M463 335L470 334L477 333L484 332M484 332L486 326L486 320L488 314L490 308L491 302M491 302L487 298M455 264L448 266L442 268L437 271L430 272M455 264L457 270L456 276L459 282L460 288L460 295M430 272L431 279L429 285L427 292L428 299L426 305M426 305L432 306L438 303L445 304L451 302M458 341L463 335M427 338L424 329M426 305L424 307M488 337L484 332M484 368L478 365L472 365L466 362L460 360M825 208L823 202L823 196L822 190L819 185L818 179M818 179L825 174L831 170M693 235L685 236L678 234L671 235L664 233M693 235L694 229L695 222L696 216L697 209M697 209L690 210L684 210L678 211L671 212L665 212M664 233L664 226L665 219L665 212M821 213L813 215L805 214L797 215M797 215L794 210L790 205L787 200M818 179L809 176M787 200L792 196L796 191L800 185L804 180L809 176M787 200L781 197L774 198L768 194M775 168L782 167L788 168L795 169L801 168M775 168L772 174L772 181L769 187M809 176L801 168M769 187L768 194M724 213L730 209L735 203L740 198M724 213L719 209L713 208L707 206L702 203M702 203L702 196L698 190L698 182M740 198L738 192L734 187L734 180L730 175M698 182L705 181L711 181L718 179L724 176L730 175M760 201L768 194M760 201L754 200L747 200L740 198M769 187L763 183L758 179L751 177L747 173L740 170L736 166M730 175L736 166M797 215L793 220L791 227L787 232M822 241L815 242L810 245L804 247L798 249M787 232L791 238L795 243L798 249M831 268L825 269L819 269L813 267L807 267L801 268L794 266M798 249L795 257L794 266M658 240L664 233M658 240L661 245L662 252L665 258M682 267L676 264L670 261L665 258M682 267L689 263L695 259L703 257M693 235L698 242L702 249M703 257L702 249M724 213L726 219L728 226M702 203L697 209M702 249L708 245L713 241L718 235L722 230L728 226M649 202L656 206L664 210M649 202L649 194L649 187L651 180M664 210L668 205L670 199L673 193L677 188L680 183L682 176M651 180L657 180L663 180L669 177L676 176L682 176M684 175L682 176M684 175L691 177L696 180M665 212L664 210M696 180L698 182M484 117L489 114L494 110M484 117L485 124L486 130L488 137L489 143M494 110L501 110L507 111L513 113L519 114M519 114L519 121L521 128L518 134L518 141L520 148M489 143L495 144L501 146L507 148L513 149L519 149M520 148L519 149M404 174L400 167L396 161L392 155L391 148L387 142M404 174L415 172M415 172L417 169M417 169L416 162L418 154L416 147M416 147L410 145L402 144L396 140L389 139M389 139L387 142M368 166L374 173L378 181M368 166L369 160L370 154L371 148M404 174L398 177L392 181M387 142L379 146L371 148M392 181L385 179L378 181M429 207L427 201L423 196L422 190L420 184L417 178L415 172M429 207L425 211M392 181L395 187L396 194L398 201L400 207L402 214M425 211L418 211L410 213L402 214M523 386L517 390L513 395L507 400M485 370L483 377L482 384L481 392M481 392L487 395L494 396L501 398L507 400M799 342L804 339L809 336L813 331L818 327L822 323L828 320M799 342L801 349L805 355L808 361M819 360L822 355L827 351L830 346L833 340L836 335M819 360L808 361M798 373L803 367L808 361M765 358L767 351L767 344M767 344L771 340L776 336L779 331M779 331L786 334L793 338L799 342M833 371L826 366L819 360M820 400L826 395L833 390M820 400L812 398L805 396M821 304L814 303M779 331L779 330M814 303L809 307L804 311L799 314L794 318L789 322L784 326L779 330M679 403L683 399L689 397L692 391L697 388L702 384M679 403L673 399L668 394L663 389M663 389L666 382L666 374L668 366M668 366L675 367L682 369L690 368L697 370M697 370L699 377L702 384M710 390L702 384M678 420L678 412L679 403M640 413L641 407L640 401M640 413L645 418L649 422M640 401L646 398L652 395L658 393L663 389M695 488L701 492M695 488L688 487L682 487M701 492L704 497L706 503L707 509L710 515M676 492L682 487M676 492L676 499L675 506L676 513L676 520L676 527M676 527L677 528M677 528L683 525L689 523L695 521L701 519L707 518M707 518L710 515M704 458L704 465L699 470L700 477L698 483L695 488M730 477L724 479L719 484L713 487L707 489L701 492M671 459L673 464L674 471L679 475L680 482L682 487M740 510L732 515M732 515L725 514L718 515L710 515M643 459L647 456M646 495L652 494L658 492L664 493L670 491L676 492M711 548L709 541L710 533L708 526L707 518M711 548L704 548L697 546L690 547L684 547L677 547M677 547L678 541L677 534L677 528M825 587L817 579M817 579L811 576L804 575M792 604L793 598L797 592L799 587L803 581L804 575M792 604L797 609L803 613M823 614L816 613L809 613L803 613M792 604L785 604L778 606L772 607M800 570L804 575M800 570L794 572L788 574L782 576L776 578L769 580L763 582M772 607L770 601L768 595L765 589L763 582M774 550L772 556L768 561L764 567L761 573L758 578M797 552L797 558L799 564L800 570M758 578L763 582M711 548L712 549M732 515L733 522L732 528L734 534L735 541L736 547M712 549L720 549L728 547L736 547M763 538L757 541L752 546L746 548L740 551M758 578L751 578L745 575M745 575L744 569L741 563L742 557L740 551M736 547L740 551M817 579L821 573L825 568L829 562L834 557L838 552M802 543L809 543L816 543L822 540L829 540M797 510L803 513L810 512L817 514L823 518L829 519L836 520M820 400L822 406L823 413L825 419L828 425M31 586L38 586L45 584L51 583M31 586L30 592L30 598L27 604L26 610L24 616M24 616L26 619M26 619L32 616L39 616L45 615L50 611L57 609L63 609M63 609L60 602L57 596L53 590L51 583M27 632L33 636L39 637L45 640L52 643M27 632L25 625L26 619M52 643L54 636L57 630L59 623L61 616L65 610M65 610L63 609M20 580L20 573L21 566L20 559L22 553L22 546M20 580L15 582L8 581L3 584L-4 584M-4 584L-9 581L-13 576M-13 576L-11 569L-10 563L-11 555L-10 549M-10 549L-3 547L5 545L12 545L20 544M22 546L20 544M-3 608L3 611L11 612L18 614L24 616M-3 608L-3 600L-2 592L-4 584M31 586L26 583L20 580M-10 549L-15 543M-9 637L-10 631L-7 625L-9 619L-8 613M-9 637L-16 637L-22 640L-29 638L-35 640L-42 640M-8 613L-14 612L-20 611L-26 611L-33 612L-39 610M-2 644L-9 637M-2 644L4 643L11 642L18 641M-3 608L-8 613M18 641L21 636L27 632M-8 670L-12 672M-8 670L-7 664L-5 657L-4 650L-2 644M-6 456L-12 457L-19 457L-25 459L-32 459L-38 462M23 520L22 514L20 507L18 501L19 495L17 489M23 520L18 527M18 527L13 522L8 518L1 517L-4 513L-9 508M17 489L10 489L4 489M4 489L-0 493L-6 496M-9 508L-6 503L-6 496M20 544L18 536L18 527M-12 512L-9 508M27 457L27 464L25 472L25 479L24 486M24 486L17 489M-5 458L-2 464L-1 470L1 476L1 483L4 489M-39 480L-34 483L-28 486L-23 489L-17 491L-11 494L-6 496M110 367L117 366L124 368L131 368L138 368L145 367M117 399L124 397L132 399L139 397L146 396M145 367L147 370M147 370L151 376L151 384L154 391M146 396L154 391M105 362L107 355L109 348L112 340M112 340L106 337L100 333L94 330L89 325L83 323M77 362L77 355L77 349L77 342L77 335L76 329M76 329L83 323M112 340L112 340M145 367L144 360L144 353L143 346L143 340L143 333M143 333L137 335L130 335L124 336L118 340L112 340M83 323L85 317L87 311L89 305L91 299M91 299L98 299L104 299L111 301M112 340L112 334L112 327L111 321L111 314L111 308L111 301M208 677L209 684L210 691M208 677L212 669M212 669L219 666L226 666L233 664L240 664M240 664L243 671M232 699L234 691L239 685L239 677L243 671M232 699L226 697L219 696L213 695M213 695L210 691M237 731L236 723L237 716L236 709L235 701M237 731L231 729L225 729L219 729L213 729L206 729M232 699L235 701M213 695L212 701L210 708L208 715L208 722L206 729M180 673L178 679L176 686L175 693L171 698L170 705M180 673L187 674L194 674L201 675L208 677M210 691L204 693L199 695L193 696L187 698L182 701L176 703L170 705M24 486L30 489L37 488L43 491M23 520L28 517L35 516L40 514L46 512M46 512L45 505L45 497L43 491M56 457L56 465L58 472L57 480M57 480L49 484L43 491M111 427L115 432M146 396L145 402L144 409L142 415L140 422L138 428M115 432L123 431L130 428L138 428M417 121L424 115L429 109M417 121L410 118L403 116L396 113M429 109L429 101L424 95L422 88L421 80M396 113L396 106L396 99L396 92M396 92L402 88L408 86L415 84L421 80M460 116L458 113M460 116L457 123L454 130L450 137M450 137L444 138L438 135L431 135L425 135M425 135L420 128L417 121M458 113L451 110L444 111L437 110L429 109M425 135L420 141L416 147M393 117L392 124L389 131L389 139M393 117L396 113M487 76L486 70L485 63L484 56L483 49M487 76L490 79M490 79L496 77L502 75L508 74L513 71L519 70M483 49L485 47M485 47L492 48L497 50L503 53L509 56L514 58L520 61M519 70L520 61M494 110L494 104L493 98L492 91L491 85L490 79M529 82L525 75L519 70M529 82L528 89L525 95L522 101L520 107L520 114M520 114L519 114M513 28L514 34L515 41L516 47L518 53L521 59M521 59L520 61M497 26L494 31L491 36L488 42L485 47M489 15L483 13L477 13L471 15L464 15L458 13M456 6L456 11M456 11L458 13M393 117L386 116L378 116L371 116L363 117M371 148L367 143L362 140L357 136M357 136L359 130L361 123L363 117M803 672L802 666L802 659L802 653L802 646M803 672L795 677M795 677L790 674L784 670L778 668L773 662L767 660M802 646L798 642L792 639M792 639L784 638L775 637M775 637L769 642L764 649M764 649L767 660M825 677L818 675L811 674L803 672M829 633L824 637L818 638L813 642L807 644L802 646M801 710L797 704L791 700L788 694M788 694L790 688L794 683L795 677M803 613L800 619L798 626L796 633L792 639M769 611L772 607M769 611L771 617L774 624L774 630L775 637M319 362L309 358M319 362L324 357L329 352L334 347L338 341L344 337M309 358L307 356M307 356L306 349L303 343L303 336L300 330M300 330L307 328L315 326L321 322M321 322L327 326L332 330L338 334L344 337M319 362L325 368L330 376M360 360L354 363L348 366L341 368L336 373L330 376M360 360L358 354L356 348L353 342L353 335M353 335L344 337M387 338L380 334L375 329L369 326L362 323M387 338L390 334M402 299L398 296M362 323L361 317L362 311L362 305M398 296L391 297L386 298L380 301L374 302L368 304L362 305M321 322L325 315L328 309L332 302L335 296M335 296L342 297L349 300L355 302L362 304M362 323L357 329L353 335M362 305L362 304M334 294L335 296M334 294L333 286L332 279M358 261L354 266L349 269L343 272L338 276L332 279M358 261L365 267M362 304L364 298L364 292L365 286L364 280L363 273L365 267M682 267L680 273L680 280L679 286L676 292L675 299M665 258L660 263L655 267L651 272L647 278L642 281M656 298L662 300L668 299L674 299M656 298L651 294L646 290L642 285M642 285L642 281M675 299L674 299M699 367L700 360L699 353L700 347L698 340L698 333M699 367L705 366L711 363L717 360L723 359L729 356M729 356L729 350L730 344L730 337L731 331M698 333L705 330L711 327M711 327L717 328L724 329L730 330M731 331L730 330M737 365L729 356M697 370L699 367M767 344L761 341L755 340L749 336L742 337L737 332L731 331M743 303L740 308L738 314L734 319L733 325L730 330M743 303L751 303L758 305L766 305M766 305L769 311L773 317L775 324L779 330M668 366L665 364M698 333L690 332L684 328M665 364L668 358L670 351L675 346L677 340L680 334L684 328M706 296L708 302L709 308L709 315L710 321L711 327M706 296L700 296L693 296L687 298L681 297L675 299M674 299L676 306L679 312L680 319L682 326M684 328L682 326M606 291L611 295L617 298M606 291L606 285L606 278L608 272L608 266M617 298L624 296L629 291L637 289L642 285M642 281L639 275L634 270M634 270L628 269L621 268L615 267L608 266M455 248L449 245L442 244L435 242L429 240M455 248L460 242M429 207L440 205M440 205L447 210L455 214M429 240L429 232L426 226L426 218L425 211M455 214L456 221L457 228L459 235L460 242M491 235L489 228L492 221L491 213M491 235L484 237L479 239L472 239L467 242L460 242M455 214L461 211L467 209L474 208L480 204M480 204L486 208L491 213M775 168L771 161L767 153M736 166L738 156M767 153L759 153L752 156L745 156L738 156M760 201L760 208L760 214L762 220L760 227M787 232L779 233L770 233M760 227L770 233M728 226L735 230L743 235M760 227L755 230L749 233L743 235M742 301L736 298L728 299L722 296L715 296L708 293M742 301L743 294L740 287L741 280L741 273L740 265M740 265L740 265M740 265L733 265L726 266L718 263L711 264M708 293L708 286L710 279L709 271L711 264M743 303L742 301M706 296L708 293M703 257L711 264M743 235L742 241L742 247L741 253L740 259L740 265M821 24L813 23L806 25L798 25L791 25M828 -5L823 -8L816 -8L810 -10L804 -11M791 25L790 23M804 -11L802 -5L800 1L798 7L793 11L792 18L790 23M583 186L582 193L583 201M583 186L577 185L571 181L565 177L558 176L552 173M583 201L576 201L569 203L562 201L555 203L549 205L542 204M548 175L552 173M548 175L548 182L546 189L543 196L541 203M541 203L542 204M570 231L562 232L554 232L546 230M570 231L571 224L575 219L578 213L581 208L583 202M583 202L583 201M546 230L544 224L543 217L543 210L542 204M519 162L525 164L532 166L537 169L543 171L548 175M519 162L515 169L509 175M509 175L511 181L513 187L516 193L516 199M516 199L523 200L529 201L535 202L541 203M546 230L540 239M540 239L533 239L527 239L521 239M521 239L520 233L517 227L517 221L517 215L514 209L513 203M516 199L513 203M455 155L452 164M455 155L462 154L469 154L476 154L483 153M452 164L455 169L457 175M457 175L461 179L468 180L472 185L478 186M483 153L485 158L489 163L490 169L493 174M478 186L484 183L488 178L493 174M450 137L452 143L454 149L455 155M417 169L424 167L431 168L438 166L445 164L452 164M484 117L476 118L468 118L460 116M489 143L483 153M440 205L443 199L448 194L451 188L452 181L457 175M480 204L479 198L480 192L478 186M519 162L518 155L519 149M509 175L501 173L493 174M491 213L496 210L502 208L507 206L513 203M378 181L375 186L373 192L368 196L366 202M402 214L402 214M402 214L396 213L389 212L382 209L375 209L368 208M366 202L368 208M418 262L411 265L404 268L397 271M418 262L420 257L421 251L422 245M422 245L415 244L408 240L401 239L393 237M391 264L397 271M391 264L392 258L392 252L390 246L390 240M390 240L393 237M430 272L424 267L418 262M398 296L396 290L397 283L397 277L397 271M455 248L456 255L456 261M455 264L456 261M429 240L422 245M402 214L400 220L398 226L396 232L393 237M365 267L371 265L378 266L384 264L391 264M358 261L356 254L353 248L353 241M365 233L359 237L353 241M365 233L371 236L378 236L383 239L390 240M365 233L366 226L366 220L369 214L368 208M83 645L85 639L83 632L86 626L85 620M83 645L76 645L68 644L61 645L53 646M53 646L52 643M65 610L72 611M72 611L79 615L85 620M51 583L52 581M52 581L59 581L65 581L72 581L78 580L85 579L91 580M72 611L76 606L78 601L81 595L86 591L87 585L91 580M212 669L211 661L207 655L204 648L202 641M248 643L242 642L235 641L228 639L221 638L215 635L208 635M248 643L245 650L243 657L240 664M202 641L208 635M609 482L604 487M643 498L641 507L639 515M604 487L605 493L609 499L610 505L611 512L615 517L616 523M616 523L622 521L628 520L633 516L639 515M676 527L669 525L663 522L656 522L650 519L643 518M639 515L643 518M644 669L640 673M644 669L650 670L657 671L663 672L670 671M640 673L641 680L641 687L644 694L644 701M674 691L668 693L662 695L657 697L650 698L645 702M674 691L677 685L677 678M644 701L645 702M677 678L670 671M665 647L666 653L669 659L668 665L670 671M665 647L658 647L651 646L645 648M645 648L644 655L644 662L644 669M742 700L750 702L756 707L763 709M742 700L741 694L741 687L740 681M740 681L747 680L753 676L759 673M759 673L763 680L767 686L770 693L773 699M773 699L768 704L763 709M788 694L781 697L773 699M767 660L764 667L759 673M784 738L778 736L772 734L766 733M766 733L765 727L766 721L764 715L763 709M762 767L754 760M766 733L764 735M754 760L756 753L758 747L761 741L764 735M545 643L551 641L557 639L563 637L568 633L575 632M545 643L538 634M538 634L539 628L541 622L541 616L542 610M570 614L570 621L574 626L575 632M570 614L563 614L558 611L552 610L546 608M546 608L542 610M455 542L461 541L467 542L474 541L480 542M455 542L455 549L456 556L457 563L456 570L456 577M482 575L485 570L488 564L490 558L492 552M482 575L475 577L468 579L460 579M492 552L486 547L480 542M460 579L456 577M427 579L424 585L423 592L423 599L422 605M427 579L434 578L442 579L449 577L456 577M460 603L454 605L447 608L441 608L435 611L428 611M460 603L461 597L459 591L460 585L460 579M428 611L422 605M356 673L359 676M356 673L350 672L343 674L337 673L330 673M330 673L330 673M330 673L331 680L330 686L328 692L329 699L329 705M359 676L359 683L360 690L359 698M329 705L335 705L341 702L347 699L353 699L359 698M390 702L384 703L378 703L371 701L365 703M390 702L389 694L389 687L391 680L391 673M391 673L385 672L378 673L372 675L366 676L359 676M365 703L359 698M394 609L393 603L393 597L394 591L392 585L392 579L393 573M394 609L388 606L381 606L375 604L369 602M369 602L368 596L367 590L368 583L366 577M393 573L386 575L379 575L372 575L366 577M361 608L354 607L347 607L341 607L334 606M361 608L361 615L362 622L364 628L363 635L364 642M329 616L329 623L329 630L329 637M329 616L334 606M329 637L329 637M329 637L335 638L341 641L347 641L353 644L359 644M359 644L364 642M330 586L337 584L343 581L351 581L357 577L364 576M330 586L330 593L332 600L334 606M364 576L366 577M369 602L361 608M290 607L293 600L297 594L297 587L301 581M290 607L296 608L302 611L309 611L316 613L322 614L329 616M302 581L301 581M302 581L309 582L317 579L325 580M325 580L330 586M299 646L298 652L300 659L298 666M299 646L305 643L311 643L316 639L322 637L329 637M330 673L329 667L331 661L328 655L329 649L330 643L329 637M330 673L324 673L317 672L311 673L305 673M305 673L298 666M356 673L357 666L358 658L358 651L359 644M644 739L641 745L640 753L639 760M644 739L637 736L631 732L624 730L617 729L611 725M639 760L633 760L626 760L619 760L613 759L606 759M606 759L606 752L606 744L605 737L606 729M611 725L606 729M651 732L644 739M651 732L649 726L649 719L647 714L647 707L645 702M613 702L611 709L611 717L611 725M613 702L619 702L625 703L631 701L638 701L644 701M615 669L615 677L613 684L612 692L610 699M615 669L609 668L603 669L597 666L591 665L585 666L578 665M610 699L603 697L596 697L589 696M589 696L586 690L581 684L577 678L572 672M572 672L578 665M613 702L610 699M616 669L622 670L628 672L634 670L640 673M616 669L615 669M575 715L577 722L579 729M575 715L579 709L584 703L589 696M579 729L586 729L592 729L599 729L606 729M551 675L558 674L566 675L572 672M551 675L551 682L551 688L551 694L549 700L549 706M549 706L556 707L562 709L568 713L575 715M551 675L543 670M543 670L544 663L544 657L545 650L545 643M584 640L575 632M584 640L583 647L581 653L579 659L578 665M599 765L591 765L583 763M599 765L606 759M579 729L574 739M583 763L580 758L578 751L575 745L574 739M795 286L790 291L783 292L779 298L773 301L767 304M795 286L793 277L793 268M767 304L766 297L768 291L768 284L767 278L765 271L766 265M793 268L786 267L780 265L773 266L766 265M766 265L766 265M814 303L810 299L805 294L799 291L795 286M766 305L767 304M794 266L793 268M740 265L747 265L753 265L759 265L766 265M770 233L768 239L770 246L769 252L768 258L766 265M710 576L716 577L722 579L729 581L735 583M710 576L707 582L706 589L703 595L701 602L701 609M735 583L734 590L732 597L732 605L730 612M701 609L708 611L715 609L722 611L730 612M712 549L711 555L710 561L710 568L708 574M745 575L740 579L735 583M708 574L710 576M734 618L730 612M734 618L740 618L746 615L752 615L757 612L763 611L769 611M788 425L793 430L797 434M797 434L803 434L809 430L815 429L821 430L827 427M-12 824L-10 818L-7 812L-7 806L-5 800M-16 789L-10 793L-5 800M154 391L164 395M138 428L144 431M164 395L167 401L169 407L173 413L176 418M176 418L169 421L163 422L157 426L151 429L144 431M246 327L252 325L258 324L264 322M246 327L245 333L245 339L245 345L243 351L241 356L242 363M264 322L269 325L274 329M274 329L272 336L270 343L267 349L266 356L265 363M242 363L249 362L257 364L265 363M307 356L301 358L295 359L289 361L284 366L278 367L272 369M274 329L280 331L286 329L292 330L298 329M298 329L300 330M265 363L272 369M309 358L307 363L305 370L302 375L298 380L296 386L293 392L292 398M292 398L283 395L276 391M272 369L274 376L276 383L276 391M242 363L241 363M241 363L241 370L243 376L244 382L245 389L246 395M276 391L271 396L265 399M265 399L258 397L252 396L246 395M50 363L49 356L50 348L51 341L50 334M76 329L68 327L61 325M50 334L55 330L61 325M20 339L25 334L30 328M50 334L43 332L36 331L30 328M120 266L120 273L117 279L117 286L115 293L115 300M120 266L115 261M91 299L83 290M83 290L83 283L85 275L85 267M111 301L115 300M85 267L91 266L97 265L103 264L109 263L115 261M142 269L134 268L127 266L120 266M142 269L145 266M145 266L144 259L145 253L147 247L146 241M146 241L139 240L132 242L125 241L118 243M115 261L116 255L119 250L118 243M171 834L171 827L169 820L171 813L168 807L169 800M134 829L139 824L141 818L144 813L147 807L151 802L155 797M155 797L162 797L169 800M83 645L89 652M85 620L93 618L100 616L107 614M107 614L109 620L111 625L113 631L115 637L117 643M89 652L96 650L103 646L111 646L117 643M18 764L25 765L32 768L38 769L45 768L52 770M18 764L18 757L21 750L21 743M21 743L28 738M28 738L34 740L39 742L46 743M52 770L50 763L49 757L47 750L46 743M-8 670L-2 673L4 674L10 676L16 679L23 679M-12 700L-8 706L-3 710M-3 710L4 707L10 705L16 702L22 701M23 679L23 687L24 694L22 701M18 641L18 648L22 654L25 660L26 667L28 674M23 679L28 674M175 664L180 673M175 664L170 668L164 671L158 673L153 676L147 677M170 705L170 705M147 677L150 684L151 692L152 700M170 705L165 702L159 701L152 700M22 546L29 546L35 546L42 544L49 547L56 545M46 512L50 518L56 523M56 523L54 531L57 538L56 545M52 581L53 574L54 567L56 561L55 554L58 547M56 545L58 547M72 446L80 451L87 456M115 432L114 439L114 447M87 456L93 453L100 451L107 449L114 447M178 420L176 418M178 420L178 427L180 433L180 440L181 447M152 451L148 445L147 438L144 431M152 451L158 452L165 450L171 451L177 452M181 447L177 452M145 330L144 323L141 317L138 311L136 304M145 330L151 329L158 330L165 330M165 330L168 325L170 319L173 313L175 307L178 301M145 295L142 300L136 304M145 295L152 296L158 294L165 293L171 293M171 293L178 301M143 333L145 330M115 300L122 301L129 304L136 304M176 353L170 356L164 360L159 363L153 366L147 370M176 353L174 346L175 338M175 338L170 334L165 330M142 269L142 276L145 282L143 289L145 295M334 294L327 293L320 294L312 294L305 295L298 295M298 329L298 322L298 316L298 309L297 303L297 296M298 295L297 296M332 279L326 272L322 265M322 265L315 267L308 267L301 268M298 295L299 288L300 281L300 274L301 268M146 241L151 235M151 235L150 229L150 222L146 216L146 210M112 215L113 224L112 233M112 215L117 211M146 210L145 208M118 243L115 238L112 233M117 211L123 209L131 209L137 208L145 208M424 57L428 50M424 57L424 66L426 75M428 50L434 47L440 47L446 47L452 44L458 43M426 75L433 77L441 78L447 83L455 84M457 81L458 74L459 67L460 60L462 53L461 46M457 81L455 84M461 46L458 43M391 88L396 92M395 52L402 53L410 55L417 55L424 57M421 80L426 75M420 22L423 29L423 36L426 43L428 50M420 22L426 20L433 20L438 17L444 15L450 12L456 11M458 13L458 21L457 28L459 36L458 43M458 113L456 106L456 98L457 91L455 84M487 76L481 76L475 78L469 78L463 80L457 81M483 49L476 48L469 47L461 46M390 28L396 25L402 25L408 25L414 23L420 22M390 28L384 24M384 24L385 18L389 12L392 7L394 0L396 -6M420 22L417 16L417 9L416 3L415 -3M415 -3L409 -4L402 -5L396 -6M395 52L395 45L392 40L390 34L390 28M420 22L420 22M364 -13L365 -7L366 -1L367 5L368 11L369 17L370 23M370 23L377 23L384 24M387 -15L391 -9L396 -6M423 -14L419 -9L415 -3M367 60L362 55L358 49M370 23L370 24M358 49L362 44L364 37L367 30L370 24M368 166L362 169L355 167L348 168L342 170M342 170L340 163L337 156L335 148M357 136L348 137L340 139M335 148L340 139M112 215L105 214L98 213L91 212L84 210M84 210L84 203L88 197L89 190L89 183L90 176M117 211L115 205L114 198L111 192L112 185L110 179M110 179L103 179L97 177L90 176M82 126L83 119L84 113L83 106L84 100L87 93L88 87M82 126L76 124L70 122L64 119L58 118M58 118L54 110M54 110L55 102L59 95L62 88M62 88L70 86L78 85L85 84M88 87L85 84M-9 51L-17 51L-25 50L-33 49M-9 51L-11 45L-11 39L-9 33L-11 27L-11 21L-12 15M23 89L27 84M23 89L24 97L28 105M28 105L34 106L41 106L47 108L54 110M62 88L58 83M27 84L33 83L39 84L45 83L51 82L58 83M733 674L735 668L737 663L739 657L740 651L743 645M733 674L726 675L718 674L711 673M733 636L726 638L720 642L713 645L706 648M733 636L737 641L743 645M702 665L702 654M702 665L707 668L711 673M702 654L706 648M764 649L757 647L749 648L743 645M740 681L733 674M693 612L696 618L698 624L699 630L701 636L704 642L706 648M693 612L701 609M734 618L735 627L733 636M672 639L678 641L685 644L690 649L696 651L702 654M672 639L665 647M677 678L682 674L690 672L695 667L702 665M681 700L687 702L693 701L699 703L705 704L711 705M681 700L674 691M711 705L711 699L711 692L712 686L711 680L711 673M672 639L673 631L673 624L673 616L671 609M693 612L686 610L679 609L672 608M671 609L672 608M578 422L584 419L590 419L596 416L603 416M578 422L579 429L581 436L582 443L581 450M611 450L612 443L612 437L611 431L613 425M611 450L604 450L597 450L590 451L583 452M613 425L608 420L603 416M583 452L581 450M618 457L611 450M640 413L633 415L627 419L619 421L613 425M548 351L548 343L548 336M512 342L515 335L520 329L524 322M524 322L530 323L536 327L542 330M548 336L542 330M491 302L499 303L506 303L514 304M524 322L523 314L519 307M514 304L519 307M573 362L582 355M573 362L574 369L577 375L581 381L582 388M582 355L588 358L594 360L600 361L606 363M606 363L605 370L605 377L604 384L603 392M582 388L588 391L595 391L602 392M603 392L602 392M560 362L567 361L573 362M586 327L585 334L584 341L584 348L582 355M586 327L579 320M548 336L554 332L560 328L566 326L573 323L579 320M544 392L552 393L559 394L566 396L573 396M573 396L582 388M575 420L573 412L574 404L573 396M575 420L578 422M603 416L602 408L602 400L602 392M633 391L637 395L640 401M633 391L625 391L618 390L610 390L603 392M387 338L387 345L390 352M360 360L364 362M390 352L383 354L377 357L371 361L364 362M450 370L451 378L448 385L449 393M481 392L477 395M477 395L471 396L465 396L459 396L453 397M449 393L453 397M330 376L331 384M364 362L366 369L369 375L371 381L371 388L374 394M374 394L368 399M331 384L337 386L344 388L349 393L356 393L362 396L368 399M392 391L386 392L380 393L374 394M392 391L394 398L396 405L401 411L403 418M403 418L396 422L390 427L384 432M384 432L379 428L374 425L368 422L364 418M364 418L364 411L367 406L368 399M635 369L640 365L647 362L654 359M635 369L628 367L623 361L616 359M654 359L652 351L650 344L647 336M616 359L617 353L618 347L617 340L619 335L620 329M620 329L627 329L633 328L640 329M640 329L647 336M633 391L634 384L634 376L635 369M665 364L654 359M606 363L616 359M682 326L675 328L668 329L661 333L654 333L647 336M586 327L592 327L598 326L604 325L611 326L617 326M617 326L620 329M617 298L617 305L617 312L616 319L617 326M656 298L654 305L650 310L647 317L643 323L640 329M618 245L624 243L630 245L636 243M618 245L614 239L608 234L603 229M640 239L636 232L634 225L632 218L628 211M640 239L636 243M628 211L621 209M621 209L613 210L606 214M603 229L606 222L606 214M634 270L635 263L634 256L636 250L636 243M608 266L606 263M606 263L610 257L614 251L618 245M584 257L584 245M584 257L591 260L598 262L606 263M584 245L589 242L593 236L598 233L603 229M658 240L649 240L640 239M649 202L642 205L635 207L628 211M584 245L579 240L575 235L570 231M583 202L590 204L595 208L601 210L606 214M492 237L497 239L503 242L509 243M492 237L490 243L489 249L488 255L486 261L485 268M509 243L510 251L510 258L511 266M511 266L503 268L497 271L491 276M491 276L485 268M491 235L492 237M521 239L516 242L509 243M456 261L463 261L471 263L478 266L485 268M540 239L541 246L543 253L545 260L547 267M547 267L541 269L534 271L528 273L522 274M522 274L517 269L511 266M487 298L488 290L491 283L491 276M522 274L520 280L519 286L517 292L514 298L514 304M801 168L803 161L801 155L803 149M828 145L820 139M803 149L808 146L814 142L820 139M520 148L526 147L533 147L539 146L546 142L553 143L559 141M552 173L556 168L557 162L558 155L561 150L563 144M559 141L563 144M520 114L526 115L532 116L538 115L544 117L550 118M559 141L556 136L553 130L552 124L550 118M583 186L588 180M563 144L569 144L576 144M588 180L586 174L584 168L582 162L579 156L579 149L576 144M696 180L697 174L702 169L705 164L706 158L709 152L713 147L714 141M738 156L734 151L731 146M731 146L723 144L715 141M714 141L715 141M684 175L681 169L680 162L680 155L677 149M714 141L708 142L701 143L696 146L689 147L683 148L677 149M265 181L268 187L268 194L270 200M265 181L258 181L251 180L243 181L236 182M270 200L263 203L255 203L248 205L242 209M236 182L236 189L238 196L239 202L242 209M265 181L268 174L270 168M270 168L276 169L282 171L289 172L295 172L301 174M270 200L276 206M276 206L283 205L289 203L296 202M296 202L297 195L297 188L300 181L301 174M342 170L337 177L333 184M335 148L328 150L322 151L315 152L309 153M309 153L307 162L306 171M333 184L326 181L319 178L313 174L306 171M366 202L360 200L353 201L347 200L341 198L335 197M333 184L333 191L335 197M508 423L508 424M508 423L516 424L523 423L530 423L537 423L544 424M508 424L512 429L512 436L516 441L520 446L520 453L524 458M544 424L544 424M544 424L546 430L545 436L545 443L545 449M545 449L538 453L530 454L524 458M507 400L508 407L507 415L508 423M477 395L479 401L480 408L482 415L483 422M483 422L487 427L492 432M492 432L500 429L508 424M542 394L542 401L542 409L543 416L544 424M575 420L569 421L563 422L556 421L550 422L544 424M546 450L553 450L560 450L567 449L574 449L581 450M546 450L545 449M492 432L490 438L489 444L485 450M485 450L487 453M524 458L523 459M487 453L493 454L499 455L505 456L511 458L517 459L523 459M482 514L481 506L484 499L484 491L484 484M482 514L476 515L469 513L463 515L457 515L451 516M450 484L457 484L464 485L470 484L477 483L484 483M450 484L447 486M484 484L484 483M447 486L448 494L450 501L450 508L451 516M396 611L394 609M396 611L402 610L409 608L415 607L422 605M427 579L421 572M393 573L393 572M421 572L414 572L407 572L400 573L393 572M182 553L180 547L177 542L176 535L174 530L171 524L169 518M182 553L180 555M154 521L162 519L169 518M154 521L152 523M152 523L149 529L149 536L147 543M180 555L173 554L167 549L160 547L153 546L147 543M89 559L91 566L92 572L96 578M89 559L94 556L100 553L104 548L110 546L114 541M96 578L102 581L109 584M114 541L123 549M123 549L123 555L123 562L122 568L123 575M109 584L116 580L123 575M91 580L96 578M73 548L65 549L58 547M73 548L78 552L84 556L89 559M107 614L112 607M112 607L111 601L109 596L109 590L109 584M175 664L175 658L176 652L175 646M202 641L195 641L188 641L181 641M175 646L181 641M-3 710L-5 716L-7 722L-7 729M-32 733L-26 733L-19 732L-13 731L-7 729M-10 773L-4 771L3 770L9 769L15 768M15 768L18 764M21 743L15 740L8 739L2 736L-4 733M-12 769L-11 763L-11 757L-9 751L-7 745L-5 739L-4 733M28 738L30 731L31 724L30 716L31 709M22 701L31 709M-4 733L-7 729M641 575L647 578L654 580L660 583L666 586L672 588M641 575L640 566L642 558M642 558L649 553M649 553L655 555L661 553L667 555L673 554M673 554L675 561L676 567L679 573M679 573L677 581L672 588M635 582L641 575M635 582L630 579L623 579L618 577L612 573M612 573L613 566L613 558L615 550M615 550L621 553L628 554L635 555L642 558M677 547L673 554M643 518L643 526L645 532L645 540L647 547L649 553M708 574L701 574L693 572L686 573L679 573M672 608L673 601L672 595L672 588M671 609L665 610L659 610L652 612L646 612L639 613M635 582L635 589L636 596L634 603L633 610M639 613L633 610M645 648L640 643M639 613L641 619L640 625L641 631L640 637L640 643M616 669L615 663L616 657L617 651M640 643L634 645L628 647L622 649L617 651M584 640L590 638L597 637L603 635M603 635L608 640L612 645L617 651M602 585L593 585L585 586M602 585L606 590L611 595L614 601L620 605L624 611M624 611L620 615L615 619L609 623M609 623L603 619L599 613L592 610L587 605L581 601M581 601L583 593L585 586M612 573L607 579L602 585M633 610L624 611M603 635L606 629L609 623M570 614L576 608L581 601M742 700L736 704L730 708L723 711M764 735L758 733L752 733L746 734L740 732L733 731L727 730M723 711L724 718L725 724L727 730M711 705L712 706M723 711L717 709L712 706M760 802L752 800L744 799L736 797M736 797L733 803L731 810L728 816L726 822M302 581L300 575L299 569L299 563L297 557L297 551M301 581L296 578L289 577L283 575L277 575L271 570L265 570M297 551L290 550L283 552L276 553L268 553M265 570L268 562L268 553M297 551L302 546L306 540M277 515L276 515M277 515L284 516L291 517L298 518M306 540L303 533L302 525L298 518M276 515L274 521L272 527L269 532L265 537L264 543M268 553L264 543M286 610L284 609M286 610L287 616L290 621L292 627L296 633L298 639L299 645M284 609L279 614L276 619L272 624L268 628L266 634L260 638L257 643M299 645L292 644L286 645L280 646L274 645L268 644L262 645M262 645L257 643M299 646L299 645M290 607L286 610M275 677L281 674L286 671L292 667L298 666M275 677L272 671L271 664L267 658L263 652L262 645M248 643L249 642M243 671L248 674L254 677L259 680L265 683L269 687M269 687L275 677M249 642L257 643M484 666L487 660L487 654L488 647M484 666L492 672M492 672L498 669L505 668L511 666L518 665M518 665L516 658L514 650L511 643M488 647L494 647L500 645L505 644L511 643M488 582L495 585L503 585L510 588L517 589M488 582L489 589L487 596L487 603L486 610L485 617M520 601L518 595L517 589M520 601L514 606L510 611L506 617M485 617L492 616L499 618L506 617M538 634L532 636L526 636L520 636L514 636M542 610L534 608L528 603L520 601M506 617L508 623L512 629L514 636M543 670L536 672L529 671M529 671L524 668L518 665M514 636L511 643M546 608L547 602L548 596L552 591L551 585L554 579M585 586L582 580L577 576M577 576L569 576L561 578L554 579M455 704L457 712L458 719L460 727M455 704L448 706L441 707L434 708L427 710L421 711M456 733L460 727M456 733L448 732L441 733L433 731L426 731M426 731L423 724L421 718L421 711M458 696L455 704M458 696L457 689L454 682M426 672L433 676L440 676L447 679L454 682M426 672L423 679L422 686L420 693L417 700L415 706M415 706L421 711M549 706L544 711M574 739L567 738L560 739L553 741L546 741M544 711L546 717L544 723L545 729L545 735L546 741M446 637L451 642L457 645M446 637L450 632L454 627L458 622L462 617L467 613M457 645L463 643L469 640L475 638L481 636M481 636L482 630L482 624L484 618M467 613L475 616L484 618M460 603L467 613M428 611L430 618L433 624L434 630L436 637M436 637L446 637M484 666L478 666L471 667L465 670M465 670L464 663L461 657L458 651L457 645M488 647L484 641L481 636M485 617L484 618M488 582L482 575M425 671L427 664L430 658L431 651L434 645L435 637M425 671L418 669L411 667L404 666L397 665M435 637L429 638L422 638L416 636L410 638L403 637L397 637L390 638M397 665L394 660L393 653L390 647L388 641M390 638L388 641M436 637L435 637M426 672L425 671M454 682L459 675L465 670M390 702L398 708M391 673L397 665M398 708L406 707L415 706M396 611L394 618L393 625L392 631L390 638M364 642L370 643L376 643L382 641L388 641M599 765L602 772L603 779L606 786L607 793M602 801L596 803L589 802L582 803L576 803M602 801L607 793M583 763L576 769M576 769L575 776L576 783L576 790L577 796L576 803M614 828L612 821L608 814L605 808L602 801M571 825L574 818L574 811L575 804M576 803L575 804M826 457L819 456L812 457L805 458L798 457M829 487L823 487L817 488L811 488L805 491L798 490M798 490L797 484L795 478L794 472L792 466M792 466L798 457M797 434L798 442L796 450L798 457M797 493L798 490M764 461L771 462L778 464L785 465L792 466M-5 800L1 802L8 803L13 808L20 809M15 768L17 774L22 780L22 787L25 793L28 799M28 799L25 805L20 809M52 770L53 772M53 772L52 779L51 786L52 793M28 799L34 797L40 795L46 794L52 793M20 809L20 816L21 824M197 795L204 801M197 795L188 794L179 795M204 801L202 808L204 815M169 800L179 795M204 815L200 820L196 825L194 831M212 367L213 373L213 379L211 385L212 391M212 367L204 367L197 366L189 367M189 367L185 371L182 377L179 382L174 386L170 391M170 391L177 392L184 392L190 393L197 395L204 394L210 395M212 391L210 395M216 363L222 365L228 363L235 364L241 363M216 363L212 367M246 395L239 401M239 401L232 399L225 397L219 394L212 391M176 353L180 358L185 363L189 367M164 395L170 391M178 420L185 418L192 416L199 415L206 412M206 412L209 404L210 395M83 290L77 291L71 292L65 294L59 296L53 296M61 325L59 318L55 312L52 305L49 299M53 296L49 299M85 267L81 263M81 263L75 263L69 264L63 263L58 266L51 266M53 296L52 290L51 284L51 278L50 272L51 266M79 213L73 211L67 211L61 208L55 206M79 213L81 219L81 226L81 232L80 239L80 245M80 245L80 246M80 246L72 245L66 242L59 240L52 237L45 236M45 236L48 229L48 221L50 213M50 213L55 206M112 233L106 237L99 237L92 239L87 244L80 245M84 210L79 213M81 263L80 254L80 246M139 646L133 646L126 643L119 644M139 646L141 652L141 658L139 664L140 670M119 644L118 650L117 656L114 662L114 668L112 674M140 670L134 671L129 676L123 678L116 679M116 679L112 674M112 607L118 607L125 608L131 610L138 610L144 612M117 643L119 644M144 612L145 620L144 627L143 634L144 642M144 642L139 646M147 677L140 670M144 642L150 641L156 643L163 645L169 645L175 646M89 652L89 664M89 664L95 666L101 668L107 670L112 674M53 646L52 652L52 659L50 666M28 674L34 671L40 670L47 669M50 666L47 669M89 664L85 670L80 675M50 666L56 667L62 671L68 670L74 673L80 675M237 731L241 734M241 734L237 739L236 746L232 752L230 758L227 764M206 729L198 734M227 764L220 763L213 762L206 762M198 734L199 741L202 748L204 755L206 762M197 795L198 788L198 781L200 775L201 768M204 801L210 800L216 799L223 798L229 795L236 794M227 764L230 769L235 773L239 777M236 794L239 789M239 789L239 777M206 762L201 768M144 745L149 742L155 739L161 736L166 733L172 729L177 726M144 745L142 753L142 762M142 762L145 765M145 765L151 763L157 763L164 765L170 765M170 765L172 764M172 764L173 757L175 750L177 743L180 737L183 730M177 726L183 730M155 797L150 791M179 795L178 788L177 782L174 777L172 771L170 765M150 791L149 784L148 778L145 771L145 765M201 768L195 767L190 766L184 765L177 766L172 764M198 734L190 731L183 730M170 705L174 712L175 719L177 726M115 727L123 727L132 727M115 727L113 721L112 714L112 708L110 702L110 695M132 727L135 722L137 716L140 710L143 705M143 705L137 703L131 700L126 697L119 695L113 693M110 695L113 693M107 732L107 738L111 744L111 750L113 756L115 762L116 768M107 732L115 727M116 768L122 765L129 765L135 763L142 762M144 745L141 738L136 733L132 727M152 700L143 705M116 679L115 686L113 693M56 523L61 518L66 515L73 512L78 508L84 505M73 548L76 543L81 539L85 534L89 529L93 525L98 520M98 520L94 514L88 510L84 505M114 541L113 535L113 529L110 523M98 520L104 522L110 523M152 523L146 522L140 521L135 519L129 519L122 520L117 518M147 543L147 543M147 543L140 543L135 546L129 547L123 549M110 523L117 518M57 480L63 484L70 485L77 487L83 489M84 505L85 497L83 489M87 456L87 463L88 470L88 477L89 484M83 489L89 484M142 482L139 487M142 482L138 474L136 465M139 487L134 491L127 493L121 496M136 465L128 461L120 457M120 457L116 462L114 468L109 472L105 477L102 482M121 496L114 492L108 487L102 482M152 451L146 456L141 459L136 465M177 452L179 458L178 464L178 470L179 476L180 482M180 482L174 482L167 481L161 482L154 482L148 483L142 482M154 521L152 515L149 510L146 504L144 498L143 492L139 487M117 518L117 510L121 504L121 496M114 447L117 452L120 457M89 484L96 483L102 482M169 518L177 512M180 482L182 485M177 512L179 505L180 498L181 492L182 485M181 447L187 448L194 447L201 447L207 447M198 484L190 485L182 485M198 484L204 481L209 478M207 447L209 453L207 460L208 466L209 472L209 478M338 238L338 232L336 226L334 220L335 214L334 208L331 202M338 238L330 243M330 243L324 240L318 238L312 236L306 234M306 234L306 228L305 221L307 215L308 208M308 208L314 207L320 205L325 203L331 202M353 241L346 238L338 238M335 197L331 202M322 265L323 257L326 250L330 243M296 239L295 246L293 253L292 260M296 239L306 234M301 268L292 260M296 239L290 236L285 232L279 229L274 226M274 226L275 219L274 213L276 206M296 202L301 206L308 208M306 171L301 174M185 234L192 235L198 238L204 240M185 234L178 238L170 241M204 240L201 247L202 254L200 261L198 267M170 241L169 248L170 254L169 260L170 266M198 267L191 270L183 271L175 273M175 273L170 266M151 235L158 236L163 240L170 241M146 210L153 209L159 209L166 210L173 209L179 209M179 209L180 215L181 222L183 228L185 234M145 266L151 266L158 265L164 266L170 266M171 293L174 286L174 280L175 273M325 580L325 574L327 568L330 562L330 555L332 549M364 576L361 569L360 563L360 555L357 549M332 549L338 549L344 549L351 550L357 549M306 540L312 542L318 542L324 545L330 547M332 549L330 547M364 -13L358 -11L351 -11L345 -8L339 -7M370 24L363 22L356 21L350 19L343 18L336 16M339 -7L338 1L338 8L336 16M358 49L351 50L343 52L336 52M336 52L335 45L336 38L334 32L332 26L333 19M336 16L333 19M88 87L93 90L99 91L105 93M85 84L87 77L90 70L90 62M117 60L110 62L104 61L97 63L90 62M117 60L117 67L117 73L118 79L118 86M118 86L111 89L105 93M240 -4L233 -6L226 -6L220 -3L213 -4L206 -4M240 -4L242 3L241 10L242 17M242 17L237 20L231 23L225 25L219 27L213 29M206 -4L206 3L209 9L211 16L210 23L213 29M42 143L35 146L27 145M42 143L48 149L55 153M55 153L57 160L57 166L57 173L59 179M27 145L24 148M24 148L24 154L25 160L26 166L25 172L25 178M25 178L32 182L39 183L46 184L52 188M52 188L59 179M28 105L23 111M23 111L25 118L26 125L25 132L26 139L27 145M58 118L54 124L49 130L46 137L42 143M86 145L88 152L86 159L88 166L88 174M86 145L80 145L74 147L68 150L61 152L55 153M88 174L80 174L73 177L66 178L59 179M23 111L16 112L9 112L2 114L-5 113L-12 115M-10 143L-4 144L3 145L10 146L17 147L24 148M9 208L8 207M9 208L16 208L22 210L29 212L36 211L43 213L50 213M8 207L10 201L15 197L17 191L21 186L22 180M22 180L25 178M55 206L54 200L53 194L52 188M90 176L88 174M82 126L84 128M105 93L106 101L109 108M84 128L88 123L94 120L100 117L105 113L109 108M86 145L89 140M84 128L85 135L89 140M-9 -13L-10 -8M-12 15L-6 8M-10 -8L-8 0L-6 8M-39 86L-32 84L-25 83L-19 79L-12 77L-5 76M-12 115L-10 109L-7 103L-5 97L-1 92L-0 85M-0 85L-5 76M-9 51L-3 54M-3 54L-4 61L-3 69L-5 76M23 89L15 89L8 87L-0 85M22 180L17 178L10 178L5 174L-2 175L-7 171L-13 170M8 207L2 207L-4 208L-10 208M19 22L26 15M19 22L19 30L19 38L19 45M26 15L32 16L38 16L44 16L50 16M19 45L27 50M27 50L35 52L43 50L50 51M50 16L54 24L60 31M60 31L56 37L55 45L50 51M50 51L50 51M-3 54L2 52L8 50L14 48L19 45M-6 8L0 12L7 15L13 19L19 22M27 84L27 77L26 70L28 64L27 57L27 50M58 83L56 76L55 70L53 64L50 58L50 51M88 59L88 51L91 44L90 36L91 29M88 59L82 57L75 57L69 55L63 54L57 51L50 51M85 22L91 29M85 22L79 25L72 26L66 28L60 31M90 62L88 59M589 293L586 300L581 304L577 310M589 293L587 288L584 282L582 276L579 270L577 265M577 310L571 308L566 304L561 299L556 298M577 265L571 266L564 268L558 268L552 271M552 271L552 278L553 286L552 293M556 298L552 293M606 291L598 292L589 293M579 320L577 310M584 257L577 265M542 330L544 323L547 317L551 311L552 303L556 298M547 267L552 271M519 307L524 304L530 303L535 300L541 299L546 294L552 293M396 388L396 381L400 375L400 368L402 362M396 388L401 390L408 389L414 390L419 394L425 394M429 392L425 394M429 392L427 386L425 380L426 373L422 368L421 361L421 355M421 355L414 356L408 360L402 362M390 352L396 356L402 362M392 391L396 388M403 418L411 420L419 424M419 424L421 418L420 412L423 406L425 400L425 394M421 355L421 355M449 393L442 394L436 393L429 392M421 445L423 438L424 432M421 445L427 447L433 449L440 452L446 454L452 457M424 432L431 429L437 427L444 424L450 422M462 447L457 452L452 457M462 447L461 441L459 435L455 430L453 424M453 424L450 422M453 397L452 403L452 409L452 416L450 422M419 424L424 432M450 484L452 477L452 470L450 463L452 457M485 450L478 449L470 449L462 447M487 453L486 459L484 465L486 471L484 477L484 483M483 422L477 424L471 424L465 423L459 425L453 424M292 398L295 401M331 384L327 390L324 396M324 396L316 396L310 400L302 400L295 401M265 432L271 429L277 428L282 424L289 424L294 421M265 432L263 430M263 430L263 424L264 417L264 411L264 405L265 399M295 401L295 408L295 414L294 421M265 432L267 440L269 449M269 449L273 454L277 459M289 461L283 460L277 459M289 461L294 456L296 449L298 442L302 437L305 431M294 421L300 426L305 431M767 153L769 148M731 146L735 140L738 134L740 127L745 122M745 122L751 121L758 119L764 118M769 148L767 142L767 136L766 130L765 124L764 118M803 149L798 145L793 141M769 148L774 145L781 145L787 143L793 141M621 209L622 202L621 196L619 190L621 184L619 178M588 180L595 176L602 175L609 173M619 178L609 173M651 180L647 174L641 170M619 178L626 175L634 173L641 170M745 122L739 119L735 114L730 109M755 87L748 85L742 84M755 87L757 93L760 99L759 106L762 111L764 118M764 118L764 118M742 84L739 90L737 97L733 103L730 109M704 113L708 119L711 126L712 134L715 141M704 113L705 112M705 112L711 112L718 111L724 111L730 109M790 23L781 21L772 20M772 20L772 13L772 6L771 -1L771 -8L772 -15M740 51L738 45L738 39L737 33L734 27L734 20M740 51L748 50L756 49M756 49L759 47M759 47L761 40L765 34L769 28L771 20M771 20L765 20L759 17L753 16L747 15L742 12M742 12L734 20M677 149L672 144M641 170L643 164L643 157M672 144L666 147L661 149L654 151L650 155L643 157M632 -10L635 -4L639 3L643 9L646 16M646 16L653 14L661 16L668 13L675 14M675 14L676 14M676 14L675 7L675 1L675 -5M675 -5L669 -12M236 182L230 180L225 176M218 177L225 176M218 177L218 183L216 189L216 195L215 201L213 207M242 209L241 209M241 209L234 208L227 208L220 206L213 207M179 209L184 202M184 202L191 205L198 203L205 207L213 207M204 240L211 237M211 237L212 231L213 225L211 219L212 213L213 207M239 153L236 158L232 164L229 170L225 176M239 153L233 151L228 147L222 144L216 142L210 139M218 177L212 174M210 139L205 143M205 143L205 149L208 155L209 161L211 168L212 174M184 202L184 196L183 190L183 184L182 178M213 207L213 207M212 174L206 175L200 174L194 175L188 176L182 178M145 208L147 201L145 193L149 187L149 179M149 179L154 176L160 174L166 173L172 170M172 170L177 174L182 178M205 143L199 140L192 141L185 139L178 138M172 170L174 164L173 157L174 150L174 143M174 143L178 138M450 538L450 531L450 525L450 518M450 538L444 541L437 543L430 545L423 547M450 518L443 516L435 518L428 515L421 516M421 516L420 523L420 531L421 538L421 545M423 547L421 545M482 514L483 515M483 515L481 521L482 528L482 535L480 542M455 542L450 538M451 516L450 518M421 572L423 566L423 559L422 553L423 547M147 543L146 550L149 556L151 562L151 568L152 574M123 575L129 576L135 577L141 578L147 580M147 580L152 574M144 612L151 605M147 580L148 586L149 592L149 599L151 605M180 555L178 562L175 569M152 574L158 574L164 572L170 571L175 569M181 641L181 634L178 628L177 621L176 615L174 608M151 605L159 606L166 607L174 608M52 793L60 799M60 821L60 814L60 807L60 799M712 706L708 712L703 718L700 725L695 730M724 736L727 730M724 736L718 738L711 738L705 740M705 740L699 736L695 730M681 700L680 708L679 715L679 722L677 729M695 730L689 729L683 729L677 729M651 732L658 731L666 732L673 732M673 732L677 729M607 793L613 791L620 792L627 791L633 787L640 787M639 760L644 769M644 769L643 775L643 781L640 787M683 766L681 759L679 753L676 746L674 740L673 732M683 766L677 769M644 769L651 770L657 769L664 770L670 768L677 769M699 790L697 783L697 776L694 769M699 790L701 792M701 792L708 794L714 793L721 794L728 793L734 795M697 767L694 769M697 767L704 767L710 764L717 764L724 763L731 763M734 795L735 788L736 781L735 773L735 766M735 766L731 763M736 797L734 795M703 824L702 817L702 811L700 805L700 799L701 792M683 766L694 769M705 740L703 746L702 754L700 760L697 767M724 736L727 743L729 749L729 756L731 763M754 760L748 762L742 764L735 766M277 515L276 507L272 500M240 484L239 490L237 496L236 502L233 507M240 484L247 485L253 485L260 486M276 515L270 514L263 514L257 514L250 516L244 515L238 515M260 486L264 491L268 495L272 500M233 507L238 515M240 484L235 477M198 484L202 489L207 494L210 500L212 505L217 510M209 478L216 478L222 478L229 479L235 477M233 507L225 507L217 510M264 543L257 542L251 542L244 540L238 538M238 515L238 523L238 530L238 538M177 512L184 515L190 518L197 521L204 524M217 510L213 514L208 519L204 524M182 553L189 551L195 548L203 548L209 546M204 524L206 532L208 539L209 546M265 570L257 578M284 609L276 605L268 601M257 578L260 584L262 590L265 595L268 601M249 642L248 636L248 630L246 624L245 618M268 601L263 606L257 611L251 614L245 618M212 613L210 620L208 628L208 635M212 613L219 611L227 613L234 610M234 610L239 615L245 618M616 523L615 525M615 550L610 543M615 525L613 531L613 537L610 543M604 487L596 488L588 488L580 488M615 525L609 522L603 520L597 517L590 515L584 512L578 509M578 509L579 502L579 495L580 488M546 450L550 456L550 463L552 469L554 476L556 482M583 452L582 459L581 465L579 472L579 479L578 486M556 482L563 483L571 483L578 486M580 488L578 486M517 589L521 584L522 578M554 579L547 574M522 578L529 577L535 576L541 576L547 574M360 772L366 773L372 773L378 772L384 772L390 772M360 772L357 778L355 785L353 792M390 772L390 780L394 787L394 795M353 792L358 797L364 800L370 804M394 795L388 796L382 798L376 802L370 804M420 741L414 742L408 740L402 738L395 740L389 738M420 741L423 747L423 754L425 760M425 760L419 762L413 763L407 765L402 768L396 769L390 770M390 770L390 764L388 758L387 753L387 747L386 741M386 741L389 738M426 731L423 736L420 741M398 708L396 714L394 720L393 726L390 731L389 738M456 756L450 761M456 756L457 748L456 740L456 733M450 761L443 760L436 762L429 763M429 763L425 760M366 736L366 743L363 750L361 756L360 763L358 769M366 736L373 738L379 738L386 741M358 769L360 772M390 772L390 770M366 736L362 734M362 734L364 728L363 721L364 715L363 709L365 703M494 701L492 706L490 712L486 717L484 722L481 728M494 701L495 700M495 700L503 702L510 704M510 704L516 711M516 711L515 717L514 724L514 730L512 736M481 728L488 733L492 740M492 740L499 738L505 737L512 737M512 737L512 736M458 696L464 697L470 699L476 698L482 699L488 700L494 701M460 727L467 727L474 727L481 728M492 672L491 679L493 686L495 693L495 700M529 671L526 677L524 683L520 688L516 693L515 699L510 704M544 711L537 710L530 712L523 711L516 711M545 742L546 741M545 742L539 740L532 738L525 739L519 739L512 736M456 756L463 757L469 760L476 762L483 765M483 765L484 758L487 752L490 746L492 740M483 765L483 766M518 769L511 769L504 768L497 767L490 767L483 766M518 769L518 763L515 756L513 750L513 743L512 737M518 769L519 771M483 766L484 773L481 779L481 786L480 792M480 792L483 795M483 795L491 794L498 795L505 796L512 797M512 797L514 791L514 784L517 777L519 771M545 742L546 749L544 755L542 762L543 768M519 771L527 770L535 769L543 768M576 769L570 771L564 770L558 770L552 771L545 771M543 768L545 771M51 266L44 260M45 236L44 238M44 238L45 245L42 252L44 260M9 208L11 214L14 219L17 225L18 231L20 237M44 238L36 238L28 239L20 237M-13 233L-7 237L1 237L7 240L14 244M20 237L14 244M86 699L81 694M86 699L87 705L86 711L87 717L87 724L86 730M81 694L75 695L69 696L63 697L57 700M65 732L72 735L79 736M65 732L61 726L56 721L55 713L50 708M50 708L57 700M86 730L79 736M80 675L82 681L81 688L81 694M110 695L104 695L98 697L92 699L86 699M107 732L100 732L93 730L86 730M47 669L49 675L51 681L52 688L55 694L57 700M46 743L52 739L59 736L65 732M53 772L60 768L67 767L72 761L80 759M80 759L79 751L78 744L79 736M31 709L37 710L44 710L50 708M235 701L242 700L249 699L257 698L264 698M269 687L269 690M264 698L269 690M300 823L300 817L302 811L302 805L303 799L304 793M300 823L306 823L313 823L319 821L326 822L332 820M304 793L310 794L316 793L322 795L329 796L335 797M332 820L333 812L335 805L335 797M335 797L335 797M353 792L347 795L341 795L335 797M338 827L332 820M370 804L368 811L365 817L365 824L362 831M239 462L239 455L240 448L240 441L242 435L241 427M239 462L236 465M236 465L232 461L226 458L224 452L217 449L214 444M214 444L218 436L221 428M221 428L229 428L236 425M241 427L236 425M269 449L263 453L256 453L250 456L245 461L239 462M263 430L255 429L248 427L241 427M277 459L273 464L270 470L267 475L263 480L260 486M235 477L236 471L236 465M207 447L214 444M206 412L210 418L216 423L221 428M239 401L239 407L239 413L237 419L236 425M199 305L201 311L204 317L206 323L208 328M199 305L206 296M206 296L213 298L221 297L228 299L235 299M209 329L215 327L222 325L228 322L235 321M209 329L208 328M235 321L235 314L235 306L235 299M175 338L182 338L188 334L195 332L202 330L208 328M178 301L185 303L192 304L199 305M208 279L208 288L206 296M208 279L202 274L198 267M216 363L214 356L213 350L212 343L209 336L209 329M246 327L241 324L235 321M264 322L264 316L265 309L265 302M235 299L239 294L243 289M243 289L248 293L254 296L259 300L265 302M297 296L290 295L283 295L277 293M265 302L270 297L277 293M393 572L393 565L390 558L389 551M357 549L358 548M358 548L364 550L370 548L377 549L383 550L389 551M421 545L415 543L409 543L403 540L397 538M389 551L392 544L397 538M298 518L306 510M272 500L276 495L281 490L286 486L291 482L296 478L300 473M306 510L307 503L306 496L309 490L308 483M308 483L303 479L300 473M289 461L294 466L299 471M299 471L300 473M330 547L330 539L332 532L333 525L335 518M358 548L361 542L362 536L365 530L366 524M335 518L341 519L347 520L353 523L359 523L366 524M306 510L313 510L319 510L325 511L331 511M335 518L331 511M336 52L328 58M333 19L326 18L318 18L311 18L304 17M328 58L320 56L313 56L305 53M305 53L303 47L304 40L303 34L302 28L301 21M301 21L304 17M242 17L243 18M213 29L208 38M243 18L245 24L246 31L246 38L247 44L249 51M249 51L242 52L235 51L229 51L222 49L216 50L209 50M209 50L208 38M145 26L138 26L131 27L125 31L118 31M145 26L145 32L147 38L147 44L147 50L149 56M118 31L118 38L119 45L118 51L120 58M120 58L128 59L135 60L143 61M143 61L149 56M117 60L120 58M116 30L118 31M116 30L109 31L103 31L97 30L91 29M136 91L130 89L123 89L118 86M136 91L140 85L144 79M144 79L143 70L143 61M182 -1L183 7L182 14L182 22M182 -1L175 -3L168 -1L162 -3L155 -3M146 25L145 18L147 11L147 4M146 25L153 25L159 28L165 28L172 29M172 29L176 25L182 22M155 -3L147 4M116 30L117 23L115 15L116 8L116 1L118 -6M146 25L145 26M147 4L141 2L135 -1L129 -1L123 -4L118 -6M85 -6L85 1L84 8L84 15L85 22M85 -6L91 -9L98 -10L104 -11L111 -13M111 -13L118 -6M239 153L246 148M270 168L268 158M246 148L254 151L261 155L268 158M309 153L304 147L300 141M300 141L291 139L282 140M282 140L278 146L273 152L268 158M210 139L212 133L217 128L220 122L223 117M177 120L178 129L178 138M177 120L183 119L188 115L195 116L200 113L206 111L212 109M223 117L217 113L212 109M243 120L244 127L244 134L246 141L246 148M243 120L236 115M223 117L229 115L236 115M370 82L364 86L359 90M328 58L330 65L331 73L333 80M333 80L339 82L346 85L352 87L359 90M363 117L359 112L356 105M359 90L357 97L356 105M245 81L251 82L257 83L263 86L269 87M245 81L240 85M243 120L250 118L257 118L263 117L269 114M236 115L237 109L239 103L237 97L238 91L240 85M269 87L269 94L268 101L270 108L269 114M282 140L279 134L276 128L275 122L273 116M273 116L269 114M110 179L116 174M89 140L95 140L102 142L109 141L115 141M115 141L117 148L115 154L115 161L117 167L116 174M149 179L142 175M142 175L136 175L129 174L123 174L116 174M214 -39L210 -33L208 -27L206 -21L204 -15L200 -9M174 -40L178 -34L181 -27L184 -21L189 -15L192 -9M192 -9L200 -9M246 -14L240 -4M206 -4L200 -9M182 -1L188 -4L192 -9M152 -30L153 -23L155 -17L155 -10L155 -3M208 38L203 35L198 31L192 29L186 26L182 22M-9 -13L-2 -14L5 -10L12 -11L19 -11L26 -9M26 15L27 8L28 1L29 -7M26 -9L29 -7M26 -9L23 -16L21 -23L19 -29L17 -36L15 -43M820 139L820 132L818 125L817 119M833 109L827 111L823 115L817 119M793 141L794 133L792 126L792 119L793 112M817 119L811 118L805 115L799 113L793 112M764 118L771 116L778 114L785 113L792 111M792 111L793 112M576 144L580 141M580 141L587 143L594 144L600 145L607 146M609 173L609 166L610 160L609 154L608 147M607 146L608 147M580 141L580 135L583 130L584 123L588 118L588 112M588 112L595 113L602 112L608 115L615 114M615 114L617 115M607 146L609 140L610 134L612 127L615 121L617 115M643 157L640 152L636 147M608 147L615 146L622 148L629 148L636 147M712 54L718 52L725 54L732 52L739 52M712 54L710 60L708 66L707 73L705 79M705 79L712 81L720 81L726 83L734 82L741 83M739 52L740 58L739 64L740 70L742 77L741 83M703 40L703 34L703 27M703 40L708 47L712 54M703 27L709 25L715 25L722 24L728 21L734 20M740 51L739 52M702 82L704 89L705 97L704 104L705 112M702 82L705 79M742 84L741 83M768 77L761 81L755 87M768 77L766 72L763 66L762 60L759 55L756 49M703 40L697 44L692 48L685 50L679 53L673 56M702 82L695 82L688 80L682 78L675 76M675 76L674 70L673 63L673 56M703 27L698 22M675 14L672 20L671 27L668 33L667 40L664 46M676 14L682 15L687 18L692 21L698 22M673 56L669 51L664 46M675 -5L680 -9L686 -13L692 -15L698 -19M698 22L701 16L703 10L707 5L710 -1L713 -7M698 -19L702 -14L708 -11L713 -7M704 113L698 115L692 115L686 118L680 120M672 144L672 137L672 130M680 120L677 126L672 130M675 76L668 80L663 85M680 120L678 114L675 108L672 102L668 97L667 90L663 85M636 147L636 141L637 135L637 129L638 123L639 116M672 130L665 127L658 125L652 121L645 119L639 116M617 115L623 114L630 115L636 113M636 113L639 116M549 -22L555 -19L560 -13L567 -10L572 -6L578 -2M578 -39L579 -33L581 -27L583 -21L584 -16L586 -10M578 -2L586 -10M586 -10L593 -10L600 -13L608 -13L615 -13M529 82L536 82L543 82L550 81L557 81M550 118L556 111M557 81L555 89L557 96L556 104L556 111M588 112L587 110M556 111L562 111L568 112L574 110L581 112L587 110M140 109L132 113L124 118M140 109L144 110M144 110L145 116L146 123L145 129L146 135L148 141M124 118L124 125L122 132L120 139M120 139L126 141L132 144L138 146M148 141L138 146M136 91L137 97L137 103L140 109M109 108L113 112L119 115L124 118M171 110L164 111L157 109L151 110L144 110M171 110L174 115L177 120M174 143L168 142L161 143L155 141L148 141M115 141L120 139M142 175L140 168L140 160L139 153L138 146M447 486L439 485L431 485M421 516L415 510M431 485L427 491L423 497L419 504L415 510M421 445L415 452M415 452L419 457L420 464L422 469L425 475L427 481M431 485L427 481M175 569L179 574M174 608L180 604M179 574L178 582L179 589L181 596L180 604M212 613L210 608L205 603M180 604L186 604L192 603L199 603L205 603M80 759L83 763M60 799L66 798L73 796L79 797M79 797L79 790L79 783L80 776L81 769L83 763M116 768L113 771M83 763L89 764L95 766L100 769L106 771L113 771M671 806L667 804M671 806L673 812L676 818M667 804L661 802L654 802L647 801M676 818L671 823L668 830M647 801L644 808L640 814L638 821L635 828M677 769L674 774L675 781L673 787L672 793L668 798L667 804M699 790L693 794L688 798L682 800L676 803L671 806M699 827L694 824L688 822L682 820L676 818M640 787L643 795L647 801M239 585L244 582L249 578M239 585L232 586L224 585L217 583L210 582M249 578L245 573L240 569L236 564L232 559L229 553L225 548M210 581L210 582M210 581L211 575L212 568L214 562L212 556L214 550M214 550L225 548M257 578L249 578M234 610L235 604L237 598L239 592L239 585M205 603L207 596L209 589L210 582M238 538L230 542L225 548M179 574L186 574L191 577L197 580L204 581L210 581M209 546L214 550M610 543L604 544L598 547L591 547M578 509L572 516M572 516L576 523L581 528L584 535L588 540L591 547M577 576L576 569L577 563L579 557M579 557L585 552L591 547M492 552L499 550L506 549M522 578L520 570L518 563L516 555M506 549L516 555M483 515L489 516L495 516L501 517L508 519L514 520M506 549L508 542L510 534L512 527L514 520M547 574L548 567L547 560L545 553L545 546M516 555L522 554L528 553L533 550L539 549L545 546M572 516L567 519L562 522L555 523L550 526M579 557L573 554L567 551L562 546L556 542L550 539M550 526L550 532L550 539M545 546L550 539M480 792L473 794L466 795L459 796M483 795L482 802L484 808L485 815L485 822L484 828M459 796L460 803L457 809L457 815L457 822L457 829M450 761L449 767L452 774L453 780L455 787L454 794M459 796L454 794M555 797L552 792L547 787M555 797L552 803L548 808L546 815L541 819L539 825M547 787L542 793L536 795L531 800L525 804L520 808M522 821L521 815L520 808M575 804L569 800L562 799L555 797M545 771L546 779L547 787M512 797L516 803L520 808M273 804L278 800L284 797L287 791L293 788L297 783M273 804L273 810L273 816M297 783L304 793M273 816L279 820L286 820L292 821L298 824M204 815L209 819L214 823L220 825L226 829L232 832L237 835M236 794L238 801L240 807L244 813L246 819L247 826M239 789L245 790L252 791L259 792L266 793M266 793L268 799L273 804M273 816L268 819L263 823L258 826M-6 269L1 265L9 262M-6 269L-5 276L-4 282L-2 289L-1 296L0 302M9 262L15 265L20 268L25 271M25 271L28 276L29 282L30 288L30 294L31 300M0 302L0 302M0 302L8 303L15 303L23 301L30 301M30 301L31 300M-12 267L-6 269M14 244L12 250L11 256L9 262M-38 305L-31 305L-25 305L-19 304L-12 303L-6 301L0 302M44 260L37 262L32 267L25 271M49 299L40 299L31 300M-1 328L-1 322L-2 315L-1 309L0 302M30 328L30 321L30 314L30 308L30 301M239 777L245 774L251 770L257 766L262 762L269 759M266 793L268 787L270 782L273 776L275 771L277 765M269 759L277 765M241 734L248 735L255 735L262 736M269 759L266 753L266 747L265 741L262 736M264 698L265 704L263 711L265 718L267 725L266 731M262 736L266 731M238 271L242 274M238 271L237 264L235 257L235 249L232 243M242 274L249 272L256 271L263 270L270 268M262 235L255 235L249 235L242 235M262 235L263 242L266 247L268 253L270 258L272 264M272 264L270 268M242 235L237 239L232 243M208 279L214 277L220 275L226 274L232 271L238 271M243 289L242 281L242 274M211 237L218 240L226 240L232 243M277 293L274 287L274 280L270 274L270 268M274 226L267 230L262 235M241 209L240 216L241 222L242 229L242 235M292 260L286 263L279 264L272 264M305 431L312 431L319 432L326 433M299 471L304 466L311 463L317 460L322 455L328 451M328 451L328 445L326 439L326 433M364 418L354 425M324 396L324 402L327 408L329 414L331 420L332 427M354 425L347 424L339 426L332 427M326 433L332 427M308 483L314 483L321 482L327 482L333 484L339 482M328 451L334 458M339 482L338 476L337 470L335 464L334 458M331 511L336 506L338 499L342 494L346 488M339 482L346 488M354 425L356 432L357 439L360 445L360 452M334 458L341 456L347 455L353 454L360 452M243 18L249 19L255 18L261 19L268 19L274 19M274 19L273 13L273 7L271 1L271 -6L271 -12M269 44L262 48L256 51M269 44L275 45L281 49L287 52L293 54L300 57M256 51L261 57L266 61L270 68L274 74L279 78M300 57L295 63L294 70L290 76M279 78L290 76M275 21L274 19M275 21L272 28L271 36L269 44M250 52L256 51M250 52L249 51M305 53L300 57M301 21L295 21L288 21L282 21L275 21M245 81L246 74L247 67L248 59L250 52M269 87L274 83L279 78M206 55L200 54L194 53L187 53L181 54L174 54M206 55L208 61L207 67L208 74M208 74L203 81M203 81L196 83L189 85L183 90L175 91M175 91L173 89M173 89L171 83L173 76L172 70L171 63L169 57M169 57L174 54M209 50L206 55M172 29L171 36L173 41L172 48L174 54M240 85L234 83L227 79L221 77L214 75L208 74M212 109L209 102L208 95L204 89L203 81M171 110L172 104L175 98L175 91M144 79L150 81L156 82L162 85L168 86L173 89M149 56L156 56L162 56L169 57M299 105L299 97L299 89M299 105L305 108L310 114L315 118M299 89L305 87L311 87L317 88L323 86L329 85M329 85L328 91L326 97L326 104L326 110L325 116M315 118L325 117M325 117L325 116M273 116L279 113L286 112L293 108L299 105M290 76L294 83L299 89M300 141L304 135L308 129L311 124L315 118M333 80L329 85M356 105L349 106L344 109L338 113L331 113L325 116M340 139L335 134L333 127L330 122L325 117M50 16L53 10L57 3L58 -5L62 -11M29 -7L35 -10L40 -13L46 -17L52 -19M85 -6L83 -7M83 -7L76 -8L70 -11L62 -11M83 -7L83 -13L85 -19L82 -26L82 -32L85 -38L83 -45M828 52L822 53L815 54L809 54L802 56L796 58M827 84L820 85L814 83L808 82L801 83L795 82M795 59L796 58M795 59L793 68L791 76M791 76L795 82M791 25L791 32L793 38L794 44L794 51L796 58M792 111L793 104L794 96L794 89L795 82M772 20L771 20M759 47L764 50L771 51L777 52L783 55L789 56L795 59M768 77L776 76L784 78L791 76M615 114L613 108L612 102L611 95L609 89L605 83L605 76M605 76L607 75M636 113L637 106L641 101L642 95L644 89M607 75L614 77L620 79L626 82L632 84L638 87L644 89M663 85L655 85L647 87M644 89L647 87M742 12L738 5L738 -3L736 -10M713 -7L720 -8L727 -8L734 -11M540 -4L544 2L547 7L551 13L554 19M521 23L529 23L537 27L545 27M545 27L549 22L554 19M521 59L526 55L533 53L538 49L545 47M545 27L545 34L544 40L545 47M578 -2L576 7L574 15M554 19L560 18L567 17L573 16M574 15L573 16M584 81L584 81M584 81L584 75L583 69L581 63L581 56L580 50M584 81L577 80L570 81L563 81L557 81M557 81L556 75L555 68L557 61L555 55M555 55L562 52L569 49L576 46M580 50L576 46M605 76L598 77L591 79L584 81M587 110L586 103L584 96L586 88L584 81M557 81L557 81M545 47L550 51L555 55M573 16L573 22L574 28L574 34L574 40L576 46M366 524L369 520M346 488L355 488M369 520L366 514L364 507L362 500L359 494L355 488M397 538L396 531L391 526L389 519M369 520L376 520L383 519L389 519M415 510L409 510L403 510L396 510M389 519L396 510M84 799L90 798L97 799L103 797L110 796M84 799L84 805L86 811L85 817L85 823L86 830M112 799L110 796M112 799L115 805L115 812L116 818L119 824M79 797L84 799M113 771L112 778L111 784L112 790L110 796M150 791L144 792L137 794L131 794L124 795L118 798L112 799M519 516L525 515L531 514L537 515M519 516L515 511L512 505L511 499L508 493L505 488M537 515L538 509L539 503L542 497L544 491M544 491L538 486L532 483L527 479L521 476M521 476L516 480L511 484L505 488M514 520L519 516M550 526L543 521L537 515M484 484L491 485L498 486L505 488M556 482L549 486L544 491M523 459L522 467L521 476M431 821L430 813L428 805L429 798M400 833L399 827L399 821L398 815L397 809L396 803L396 796M396 796L404 796L411 795L418 796L426 795M426 795L429 798M454 794L448 796L442 796L435 798L429 798M394 795L396 796M429 763L428 769L426 776L426 782L426 789L426 795M297 783L298 777L296 770M335 797L334 790L333 784L330 778L328 771L327 765M296 770L302 768L308 767L314 767L321 767L327 765M277 765L286 766L295 769M296 770L295 769M358 769L352 766L345 764L339 761L332 759M332 759L327 765M339 -7L334 -11L329 -14M304 17L304 11L304 4L304 -2L304 -9L304 -15M643 47L638 51M643 47L644 41L644 34L642 27L643 20M638 51L631 51L623 49L615 48M643 20L637 21L630 21L624 22L618 25L612 25M612 25L609 28M609 28L610 36L611 43M615 48L611 43M664 46L657 47L650 48L643 47M647 87L645 81L643 75L641 69L641 63L641 56L638 51M646 16L643 20M607 75L608 68L611 61L613 55L615 48M618 -11L617 -5L616 1L613 6L612 12L613 19L612 25M574 15L580 17L586 18L591 23L598 24L604 26L609 28M580 50L586 48L593 49L599 47L605 45L611 43M395 487L393 490M395 487L394 480L395 474L394 468L394 462L394 455M393 490L387 489L380 486L374 487L367 485L361 484M361 484L364 478L365 472L366 466L369 461M369 461L377 460L383 457L390 454M390 454L394 455M427 481L421 483L414 483L408 484L402 487L395 487M396 510L396 504L393 497L393 490M415 452L408 452L401 455L394 455M355 488L361 484M360 452L365 456L369 461M384 432L387 439L388 446L390 454M293 725L297 732L303 737M293 725L297 719L298 712L301 705M303 737L309 736L315 736L321 739L328 739L334 737M305 703L301 705M305 703L312 706L320 705L328 706M328 706L329 712L331 718L331 725L332 730L335 736M335 736L334 737M266 731L273 731L279 728L286 727L293 725M295 769L296 763L299 757L299 750L300 743L303 737M269 690L275 694L283 695L288 699L294 703L301 705M332 759L333 751L334 745L334 737M305 673L303 679L306 685L306 691L304 697L305 703M329 705L328 706M362 734L355 734L348 735L342 736L335 736"/></g><polygon points="6.0,703.3 15.8,699.3 26.4,696.7 34.3,703.3 29.0,711.2 44.8,705.9 50.1,704.6 50.1,716.5 60.6,724.4 71.2,729.6 79.1,737.5 89.6,742.8 100.2,745.5 110.7,748.1 121.3,745.5 131.8,742.8 142.4,744.1 152.9,750.7 163.5,753.4 179.3,750.7 189.8,753.4 205.6,756.0 221.5,757.3 237.3,756.0 232.0,745.5 224.1,734.9 210.9,727.0 200.4,719.1 189.8,708.5 184.6,698.0 179.3,692.7 176.6,684.8 184.6,676.9 200.4,671.6 216.2,663.7 224.1,655.8 237.3,650.5 253.1,647.9 266.3,645.3 279.5,645.3 290.0,647.9 303.0,647.5 309.8,626.9 319.0,624.6 321.3,642.9 330.0,649.8 336.5,660.7 349.8,657.4 356.4,652.4 373.0,649.0 376.4,639.0 383.0,632.4 386.4,642.4 396.3,642.4 399.6,647.4 419.8,646.4 440.9,650.3 467.3,659.5 483.1,668.8 493.6,675.4 504.2,683.3 514.7,699.1 520.0,708.0 533.3,715.6 543.2,705.6 556.5,699.0 569.8,692.3 579.8,685.7 586.5,675.7 596.4,672.4 613.0,674.0 626.4,682.3 639.7,695.6 649.7,708.9 656.3,718.9 666.3,728.9 676.3,742.2 683.0,755.5 696.2,762.1 706.2,778.8 712.8,788.7 716.2,806.0 6.0,806.0" fill="#004464" stroke="#000" stroke-width="1"/><polygon points="6.0,711.2 15.8,713.8 26.4,719.1 36.9,721.7 34.3,727.0 15.8,724.4 6.0,719.1" fill="#5c4f4a" stroke="#000" stroke-width="1"/><polygon points="414.5,638.5 430.4,639.8 446.2,642.4 451.5,646.4 440.9,649.0 419.8,646.4" fill="#004464" stroke="#000" stroke-width="1"/><polygon points="500.0,672.0 506.0,676.0 512.0,690.0 508.0,694.0 502.0,684.0" fill="#004464" stroke="#000" stroke-width="1"/><pattern id="marsh" width="9" height="9" patternUnits="userSpaceOnUse"><rect width="9" height="9" fill="#06121a"/><rect x="1" y="1" width="2" height="1" fill="#004464"/><rect x="5" y="3" width="1" height="2" fill="#004464"/><rect x="2" y="6" width="1" height="1" fill="#004464"/><rect x="7" y="7" width="1" height="1" fill="#5c4f4a"/><rect x="6" y="0" width="2" height="1" fill="#5c4f4a"/><rect x="0" y="4" width="1" height="1" fill="#004464"/></pattern><polyline points="804.0,600.0 795.0,640.0 789.0,660.0 782.5,671.0 792.3,687.2 789.0,710.0 785.8,723.0 792.3,749.4 785.8,752.6" fill="none" stroke="#29486a" stroke-width="2.2"/><polygon points="787,732 793,736 796,748 790,752 786,742" fill="#29486a" stroke="#18304c" stroke-width="1"/><filter id="mn" x="0" y="0" width="100%" height="100%" filterUnits="userSpaceOnUse"><feTurbulence type="turbulence" baseFrequency="0.2" numOctaves="2" seed="7" result="t"/><feColorMatrix in="t" type="matrix" values="0 0 0 0 0  0 0 0 0 0.02  0 0 0 0 0.04  -16 0 0 0 5.6"/></filter><clipPath id="mclip"><polygon points="184.6,679.5 200.4,682.2 221.5,679.5 232.0,687.5 226.7,700.6 232.0,713.8 226.7,727.0 232.0,740.2 240.0,757.0 232.0,745.5 224.1,734.9 210.9,727.0 200.4,719.1 189.8,708.5 184.6,698.0 179.3,692.7"/><polygon points="148.0,719.0 165.0,722.0 184.6,735.0 189.8,753.4 163.5,753.4 152.9,750.7 142.4,744.1"/><polygon points="66.0,733.0 90.0,740.0 110.0,745.0 131.8,740.0 142.4,744.1 152.9,750.7 150.0,757.0 70.0,757.0"/><polygon points="160.0,757.0 230.0,757.0 238.0,760.0 160.0,760.0"/><polygon points="790.0,575.0 798.0,570.0 804.0,575.0 804.0,655.0 796.0,660.0 788.0,640.0 794.0,610.0"/></clipPath><g clip-path="url(#mclip)"><rect x="6" y="560" width="800" height="246" fill="#000" filter="url(#mn)"/></g><polyline points="250.3,672.7 253.7,686.4 250.3,702.4 241.1,711.6 232.0,723.0 225.1,732.2" fill="none" stroke="#000" stroke-width="1.5"/><polyline points="241.0,661.0 255.0,660.0" fill="none" stroke="#000" stroke-width="1.5"/><polyline points="257.0,661.0 287.0,663.5 307.5,661.0" fill="none" stroke="#000" stroke-width="1.5"/><polygon points="300.0,60.0 306.6,55.0 313.0,58.0 315.0,66.5 323.0,71.5 320.0,80.0 323.0,95.0 316.6,90.0 313.0,80.0 308.0,65.0 301.6,63.0" fill="#29486a" stroke="#18304c" stroke-width="1"/><polygon points="368.0,259.0 375.0,261.0 382.0,266.0 390.0,270.0 396.0,274.0 394.0,277.0 386.0,273.0 377.0,267.0 369.0,262.0" fill="#29486a" stroke="#18304c" stroke-width="1"/><polygon points="447.0,362.0 451.0,366.0 446.0,372.0 441.0,377.0 439.0,373.0 443.0,367.0" fill="#29486a" stroke="#18304c" stroke-width="1"/><polygon points="424.0,413.0 427.0,417.0 428.0,424.0 425.0,426.0 424.0,420.0" fill="#29486a" stroke="#18304c" stroke-width="1"/><polygon points="612.5,286.0 617.5,291.0 622.5,289.3 625.8,294.3 620.8,299.3 615.8,302.6 610.8,311.0 605.8,311.0 607.5,306.0 612.5,299.3" fill="#29486a" stroke="#18304c" stroke-width="1"/><polygon points="527.0,503.0 531.0,510.0 534.0,520.0 537.0,525.0 533.0,532.0 531.0,538.0 528.0,530.0 526.0,515.0" fill="#29486a" stroke="#18304c" stroke-width="1"/><polygon points="540.0,608.0 548.0,612.0 556.0,608.0 562.0,604.0 563.0,613.0 553.0,617.0 545.0,619.0 541.0,615.0" fill="#29486a" stroke="#18304c" stroke-width="1"/><polygon points="124.0,655.0 130.0,652.0 135.0,655.0 135.0,662.0 130.0,667.0 124.0,666.0 121.0,660.0" fill="#29486a" stroke="#18304c" stroke-width="1"/><polygon points="42.0,680.0 47.0,682.0 52.0,688.0 58.0,693.0 66.0,697.0 74.0,700.0 82.0,703.0 82.0,709.0 73.0,706.0 64.0,702.0 56.0,698.0 50.0,693.0 45.0,687.0" fill="#29486a" stroke="#18304c" stroke-width="1"/><polygon points="143.0,697.0 150.0,695.0 154.0,700.0 152.0,707.0 147.0,711.0 141.0,715.0 139.0,709.0 145.0,704.0" fill="#29486a" stroke="#18304c" stroke-width="1"/><polygon points="802.0,562.0 806.0,562.0 806.0,660.0 803.0,660.0 801.0,630.0 803.0,600.0" fill="#29486a" stroke="#18304c" stroke-width="1"/><g fill="none" stroke="#8c7818" stroke-width="1" shape-rendering="crispEdges"><polyline points="6.0,256.0 43.0,252.7 100.0,239.4 143.0,226.0 163.0,226.0 186.0,206.0 232.8,183.0 270.0,173.0 336.5,156.3 376.4,146.3 406.4,139.7"/><polyline points="183.0,6.0 199.5,40.0 199.5,89.8 193.0,109.7 186.2,133.0 176.3,149.7 163.0,173.0 149.7,199.5 146.3,212.8 153.0,226.0 166.3,249.4 169.6,270.0 173.0,292.6 173.0,332.5 183.0,365.8 179.6,392.4 163.0,429.0 153.0,465.5 146.3,482.2 139.7,498.8 133.0,536.0 129.7,569.3 126.4,602.5 133.0,635.8 136.3,655.7"/><polyline points="239.4,6.0 229.5,20.0 229.5,53.2 206.2,69.8"/><polyline points="229.5,45.0 266.0,53.0 270.0,60.0 303.0,53.2 320.0,61.5 369.8,96.4 396.4,119.7 406.4,133.0"/><polyline points="423.0,96.4 433.0,59.9 456.2,56.5 469.5,33.3 472.9,6.0"/><polyline points="406.4,133.0 443.0,133.0 486.2,139.7 540.0,156.3 586.0,159.6 622.5,146.3 659.0,146.3 709.0,113.0 735.5,99.8 806.0,69.8"/><polyline points="406.4,139.7 396.4,179.6 396.4,270.0 399.0,316.0 402.4,355.8 405.7,379.0 412.3,419.0 432.3,458.9 446.0,480.0 460.0,510.0"/><polyline points="406.4,136.3 446.3,186.2 476.2,219.5 502.8,236.0 540.0,239.4 552.6,212.8 579.2,186.2 615.8,146.3 589.2,113.0 602.5,99.8 599.2,83.0 602.5,50.0 586.0,6.0"/><polyline points="662.4,146.3 685.7,176.3 735.5,189.6 806.0,173.0"/><polyline points="715.6,189.6 748.8,216.2 768.8,270.0"/><polyline points="728.9,270.0 768.8,242.8 806.0,222.8"/><polyline points="6.0,462.2 50.0,465.5 96.4,475.5 149.7,473.8 199.5,475.5 262.2,471.9 281.4,467.5 296.1,455.7 309.4,436.5 322.7,426.1 340.4,405.5 346.4,401.8 361.1,399.5 378.8,393.6 387.7,384.8 399.5,383.3 405.7,375.7 432.3,359.1 465.5,325.9 498.8,266.0 540.0,239.4"/><polyline points="256.8,476.4 242.6,515.6 228.3,544.2 214.0,572.7 206.9,594.1 192.7,636.9 189.0,650.0 200.0,670.0 226.0,689.0"/><polyline points="405.7,375.7 439.0,365.8 482.2,362.4 536.0,354.1 584.2,347.5 635.8,365.8 685.7,369.1 752.2,372.4 806.0,339.2"/><polyline points="478.0,465.0 517.0,433.0 549.0,405.0 556.0,380.0 570.0,362.0 584.2,347.5 602.5,329.2 682.3,282.6 722.2,266.0 806.0,200.0"/><polyline points="584.2,347.5 576.0,325.9 556.0,299.3 542.6,266.0 536.0,232.8"/><polyline points="584.2,347.5 602.5,392.4 625.8,419.0 635.8,432.3 632.5,482.2 635.8,536.0 643.0,536.0 656.3,585.9 682.9,629.1 712.8,662.4 732.8,702.3 746.0,735.5 752.8,806.0"/><polyline points="635.8,432.3 685.7,458.9 735.5,472.2 806.0,492.1"/><polyline points="6.0,660.7 33.3,652.4 66.5,645.7 99.8,642.4 126.4,640.8 149.7,639.0 183.0,652.4 199.5,655.7 232.8,645.7 250.0,645.7 283.3,642.4 309.9,625.8 349.8,629.1 376.4,635.8 399.6,622.5 449.5,615.8 482.8,615.8 500.0,615.8 566.5,632.4 633.0,642.4 699.5,655.7 732.8,659.0 782.7,654.0 806.0,652.4"/><polyline points="133.0,642.4 159.6,682.3 226.0,685.7"/><polyline points="446.0,480.0 430.0,505.0 408.6,529.0 383.4,563.5 360.6,579.3 335.5,594.7 310.9,606.2 306.5,625.8"/><polyline points="792.6,562.6 786.0,635.8 782.7,685.7"/><circle cx="584.2" cy="347.5" r="10"/><ellipse cx="403" cy="133" rx="35" ry="32"/><ellipse cx="168" cy="227" rx="8" ry="6"/></g><g fill="none" stroke="#000" stroke-width="1.5" stroke-linejoin="round" shape-rendering="crispEdges"><polyline points="6.0,105.7 154.6,105.8 159.6,114.7 162.0,119.7 159.0,128.0 151.3,136.3 138.0,149.0 188.0,149.0"/><polyline points="201.0,6.0 203.0,16.6 206.0,26.6 203.5,33.0 205.5,40.0 209.0,46.6 214.5,55.0 219.0,60.0 221.0,61.5"/><polyline points="221.0,61.5 226.0,56.5 229.5,50.0 234.5,43.0 241.0,40.0 247.7,40.0 252.7,41.6 261.0,45.0 266.0,50.0 270.0,52.5 275.0,51.5 280.0,45.0 275.0,36.6 283.0,31.6 300.0,23.0 310.0,16.6 306.6,6.0"/><polyline points="201.0,105.0 311.6,105.8 311.6,89.0 323.0,91.4 419.6,90.5 476.0,93.0 540.0,94.8 635.8,97.0 806.0,96.4"/><polyline points="6.0,415.7 78.2,415.7"/><polyline points="45.0,594.2 186.2,594.2"/><polyline points="186.2,594.2 181.2,602.5 183.0,615.8 178.0,625.8 189.6,642.4 193.7,658.0 195.8,666.5"/><polyline points="146.0,238.0 679.0,238.8"/><polyline points="301.6,238.0 306.6,259.0 305.2,266.0 297.6,365.8 289.3,449.0 282.6,505.4 280.5,536.0 285.0,636.0 285.0,650.7"/><polyline points="492.8,239.0 497.8,270.0 512.0,332.5 520.3,400.0 526.5,434.5 536.3,471.4 541.2,478.8 533.8,488.7 532.6,503.4 527.7,533.0 531.4,547.8 533.8,572.4 536.6,594.2 546.6,619.1"/><polyline points="344.8,594.2 536.6,594.2"/><polyline points="344.8,594.2 341.5,602.5 349.8,615.8 358.0,622.5 359.7,635.8 356.4,645.7"/><polyline points="546.6,619.1 744.4,632.4 746.1,649.0 756.0,650.7 759.4,635.8 756.0,615.8 766.0,609.2 781.0,614.5"/><polyline points="787.0,94.8 783.7,99.8 782.0,116.4 768.8,126.4 758.8,136.3 742.2,136.3 732.2,143.0 717.2,149.7 712.3,144.7 702.3,149.7 694.0,156.3 682.3,168.0 669.0,173.0 655.7,179.6 642.4,186.2 629.0,188.0 615.8,193.0 609.0,199.5 607.5,212.8 596.0,214.5 589.0,219.5 588.5,238.8"/><polyline points="635.8,97.0 649.0,89.8 675.7,81.5 682.3,74.8 695.6,68.2 699.0,60.0 709.0,50.0 722.0,41.6 742.0,33.3 752.0,21.6 762.0,15.0 765.5,11.6 769.0,26.6 785.4,41.6 798.7,40.0 806.0,33.3"/><polyline points="765.5,11.6 762.0,6.0"/><polyline points="679.0,238.8 709.0,226.0 735.5,220.0 768.8,221.0 806.0,223.5"/><polyline points="679.0,238.8 669.0,249.4 660.7,262.7 660.7,266.0 682.3,281.0 694.0,284.3 705.6,302.6 715.6,322.5 735.5,342.5 748.8,362.4 765.5,375.7 768.8,389.0 778.8,402.4 795.4,412.3 802.0,429.0 806.0,439.0"/></g><polyline points="220.7,63.8 221.2,65.9 221.6,66.4 222.9,66.1 225.7,65.5 229.2,64.9 232.7,67.0 233.7,67.8 233.4,68.5 232.0,70.4 230.1,73.4 228.4,76.2 227.4,75.0 227.1,75.5 227.5,77.0 228.0,79.9 228.5,83.3 229.1,85.9 228.8,87.7 227.8,87.7 225.0,87.8 221.2,87.8 216.8,88.6 215.8,89.4 217.2,91.6 219.8,95.2 222.1,98.3 219.0,103.0 217.3,101.6 214.5,98.7 211.6,95.8 210.0,94.5 211.3,96.2 208.2,98.6 204.7,101.3 206.1,102.8 204.7,102.4 201.7,100.1 197.0,101.0 195.3,103.1 196.1,104.0 199.6,103.6 201.4,107.3 202.8,110.2 202.9,111.4 200.8,111.6 197.0,111.7 193.1,113.0 191.6,113.7 191.4,114.3 191.8,115.9 192.1,118.7 192.9,121.6 193.7,124.2 194.3,126.0 194.6,126.9 194.2,127.3 193.0,128.0 190.6,128.6 189.8,131.5 189.0,134.2 188.3,136.0 188.0,136.9 188.4,137.4 189.5,138.1 192.2,138.5 192.6,141.6 193.0,144.5 193.4,146.4 193.6,147.2 192.9,147.6 191.3,148.3 188.3,149.3 187.7,152.8 187.1,155.3 186.8,156.4 189.0,153.3 188.9,154.8 188.5,157.3 188.0,160.4 187.6,163.1 187.5,164.9 186.5,166.3 185.7,166.3 183.7,165.9 180.6,165.7 177.3,165.4 174.9,165.1 173.7,164.9 173.2,165.3 171.0,167.3 171.4,169.6 171.8,172.6 172.2,175.4 172.6,177.4 173.3,175.3 173.2,176.0 172.5,177.8 171.6,180.8 170.7,184.2 169.9,186.6 170.5,183.4 170.1,183.6 169.8,184.7 169.1,186.8 168.0,189.5 166.9,192.2 166.2,194.3 165.9,195.5 166.0,195.2 164.8,195.3 162.5,195.6 159.5,196.2 156.5,196.7 154.4,196.9 152.7,198.2 152.8,199.0 153.4,201.1 154.1,204.3 155.6,206.4 157.7,207.6 158.5,208.1 158.4,209.0 158.5,212.7 155.4,214.5 152.3,216.2 150.3,217.1 149.9,221.8 150.7,222.0 152.7,222.5 155.6,223.4 158.7,224.5 159.6,228.6 159.0,230.2 157.8,230.8 155.8,230.6 153.2,229.9 150.9,228.4 149.0,227.3 147.4,227.1 146.3,227.9 145.3,229.7 144.4,232.2 145.2,231.9 147.4,232.8 149.4,231.9 147.8,234.1 147.1,239.5 142.2,239.9 138.8,239.6 137.8,238.7 138.5,238.3 139.3,240.0 140.0,243.9 138.1,248.4 136.8,252.2 136.9,254.3 137.7,254.4 138.5,251.8 135.5,251.3 130.7,251.6 126.0,251.9 123.1,251.4 122.6,250.4 120.6,253.8 122.9,255.3 126.1,259.2 129.3,263.2 131.8,265.0 132.7,264.6 132.0,265.0 129.1,266.3 125.0,269.5 121.0,272.4 118.5,273.4 118.0,272.7 119.3,272.8 121.6,275.5 124.4,280.1 127.1,284.0 126.9,287.6 127.7,287.4 126.9,286.6 124.0,286.5 119.5,287.5 114.9,288.4 111.8,288.5 111.0,287.7 111.7,287.3 112.7,289.0 113.3,293.0 113.4,298.1 113.5,302.1 113.4,301.2 112.8,302.1 111.2,302.3 108.8,302.3 105.9,302.3 103.2,302.3 101.2,302.4 100.2,302.9 99.8,304.2 99.8,306.4 99.8,309.2 101.0,311.7 102.0,313.6 102.3,314.9 101.7,315.8 100.1,316.7 97.8,317.9 95.4,318.6 92.8,318.6 91.1,318.8 90.4,319.5 90.2,321.1 90.2,323.6 90.2,326.5 90.2,329.2 90.1,331.1 90.5,328.1 90.1,329.4 89.0,331.3 87.5,333.7 86.1,336.0 85.0,337.9 84.6,339.1 85.3,340.1 86.8,341.2 89.5,342.0 89.5,344.9 89.5,347.3 89.2,348.9 88.4,349.6 86.6,349.7 84.0,349.7 81.3,349.6 79.0,349.6 76.3,352.1 76.4,353.7 77.6,355.6 79.4,357.5 81.2,359.5 82.1,361.3 82.0,362.8 80.6,364.3 78.5,365.6 77.5,368.0 76.9,370.2 77.2,371.8 78.6,372.9 80.4,373.6 83.6,374.3 86.4,375.0 88.3,375.7 89.5,380.0 88.3,381.0 86.1,382.1 83.4,383.4 80.8,384.7 78.8,385.8 77.8,386.8 78.0,388.0 79.1,389.8 81.3,392.5 84.7,393.3 87.3,394.0 88.2,395.1 88.5,400.0 86.0,400.9 83.0,401.9 80.1,402.9 78.1,403.7 77.3,404.7 77.7,406.3 78.9,408.6 80.5,411.4 81.9,414.1 82.8,416.1 82.8,414.1 82.2,415.7 80.7,418.3 78.9,421.2 77.3,423.8 76.5,425.6 76.8,424.8 77.7,426.2 79.4,428.1 81.5,430.2 83.4,432.3 84.8,434.0 85.2,435.2 84.6,436.2 82.9,437.5 80.3,438.5 79.3,441.5 78.6,443.9 78.3,445.6 79.0,446.6 80.7,447.1 83.3,447.5 86.4,447.9 89.2,448.3 91.2,448.8 92.3,449.9 92.1,451.5 91.1,453.8 89.9,456.7 88.7,459.5 87.9,461.6 87.9,462.9 89.0,463.5 91.2,464.3 94.1,465.1 97.0,466.0 99.4,466.8 100.6,467.6 100.7,468.8 100.0,470.8 98.5,474.2 95.2,473.9 92.5,473.7 90.9,474.1 90.4,475.3 90.5,477.6 90.8,480.7 92.0,482.9 93.6,484.8 94.2,486.2 93.4,487.4 91.4,488.8 88.7,490.5 85.9,492.2 83.9,493.6 84.2,492.4 84.0,493.7 84.3,496.1 84.9,499.1 85.4,502.2 85.8,504.6 85.6,506.1 84.4,506.7 82.4,506.8 79.5,506.9 76.5,507.1 74.0,507.2 72.3,507.6 71.5,508.4 71.6,510.0 72.1,512.5 72.8,515.4 73.5,518.2 73.9,520.3 73.9,521.4 72.5,522.1 69.9,522.4 66.6,522.8 63.4,523.2 61.1,523.6 60.2,524.5 59.8,527.5 61.8,530.1 64.0,533.1 65.8,535.5 65.2,539.2 64.1,539.8 61.9,540.0 58.8,540.0 55.6,540.0 53.0,540.1 51.5,540.5 51.0,541.6 50.7,544.7 52.4,547.5 54.3,550.4 55.6,552.7 55.7,554.1 54.5,555.2 52.1,557.0 49.1,557.2 46.2,557.5 43.9,557.8 42.5,558.4 42.1,559.4 42.4,561.3 43.2,563.9 44.4,565.6 47.2,566.3 48.9,567.0 49.5,568.0 49.1,569.7 48.1,572.2 46.8,575.1 45.0,575.4 43.1,576.5 42.7,577.7 43.6,579.6 45.3,582.2 47.2,585.2 48.8,586.4 49.8,587.8 49.6,589.0 48.1,590.5 45.7,592.4 45.0,594.2" fill="none" stroke="#000" stroke-width="1.5" stroke-linejoin="round"/><circle cx="406.5" cy="406.5" r="159.5" fill="none" stroke="#e4e4e4" stroke-width="1"/><circle cx="406.5" cy="406.5" r="279" fill="none" stroke="#e4e4e4" stroke-width="1"/><circle cx="406.5" cy="406.5" r="398.5" fill="none" stroke="#e4e4e4" stroke-width="1"/><circle cx="406.5" cy="406.5" r="519" fill="none" stroke="#e4e4e4" stroke-width="1"/><defs>
<g id="sP"><circle r="4.1" fill="none" stroke="#10205a" stroke-opacity="0.4" stroke-width="2.4"/><circle r="4.1" fill="none" stroke="currentColor" stroke-width="1"/><path d="M-2.5 0H2.5M0 -2.5V2.5" stroke="#10205a" stroke-opacity="0.35" stroke-width="2.2"/><path d="M-2.5 0H2.5M0 -2.5V2.5" stroke="currentColor" stroke-width="1.1"/></g>
<g id="sM"><circle r="4.1" fill="none" stroke="#10205a" stroke-opacity="0.4" stroke-width="2.4"/><circle r="4.1" fill="none" stroke="currentColor" stroke-width="1"/><path d="M-2.5 0H2.5" stroke="#10205a" stroke-opacity="0.35" stroke-width="2.2"/><path d="M-2.5 0H2.5" stroke="currentColor" stroke-width="1.1"/></g>
<g id="sp"><path d="M-3.5 0H3.5M0 -3.5V3.5" stroke="#10205a" stroke-opacity="0.35" stroke-width="2.2"/><path d="M-3.5 0H3.5M0 -3.5V3.5" stroke="currentColor" stroke-width="1.1"/></g>
<g id="sm"><path d="M-3.5 0H3.5" stroke="#10205a" stroke-opacity="0.35" stroke-width="2.2"/><path d="M-3.5 0H3.5" stroke="currentColor" stroke-width="1.1"/></g>
</defs><defs>
<g id="iP"><circle r="4.1" fill="none" stroke="#302838" stroke-opacity="0.35" stroke-width="2.6"/><circle r="4.1" fill="none" stroke="currentColor" stroke-width="1"/><path d="M-2.5 0H2.5M0 -2.5V2.5" stroke="currentColor" stroke-width="1"/></g>
<g id="iM"><circle r="4.1" fill="none" stroke="#302838" stroke-opacity="0.35" stroke-width="2.6"/><circle r="4.1" fill="none" stroke="currentColor" stroke-width="1"/><path d="M-2.5 0H2.5" stroke="currentColor" stroke-width="1"/></g>
<g id="iPn"><circle r="4.1" fill="none" stroke="currentColor" stroke-width="1"/><path d="M-2.5 0H2.5M0 -2.5V2.5" stroke="currentColor" stroke-width="1"/></g>
<g id="iMn"><circle r="4.1" fill="none" stroke="currentColor" stroke-width="1"/><path d="M-2.5 0H2.5" stroke="currentColor" stroke-width="1"/></g>
</defs><linearGradient id="gAmb" gradientUnits="userSpaceOnUse" x1="405" y1="430" x2="485" y2="505"><stop offset="0" stop-color="#e05c00"/><stop offset="0.35" stop-color="#ec8400"/><stop offset="0.6" stop-color="#f0a000"/><stop offset="1" stop-color="#f4b400"/></linearGradient><polygon points="401.4,446.1 414,431.4 424.4,426.2 439.1,426.2 445.4,437.7 457.9,446.1 462.1,454.4 474.7,464.9 483.1,475.4 489.3,487.9 487.3,498.4 478.9,502 468.4,506 449.6,514 437,520 424.4,521 411.9,515.3 405.6,504.7 403.5,487.9 399.3,471.2 399.3,454.4" fill="url(#gAmb)" fill-opacity="0.8"/><polygon points="411.9,435.6 439.1,429.3 453.8,448.2 470.5,467 481,483.8 478.9,498.4 468.4,504.7 457.9,508.9 445.4,513.1 428.6,517.3 414,513.1 409.8,492.1 407.7,469.1 405,450" fill="url(#gAmb)"/><polygon points="460,506 487.3,498.4 495.6,513.1 506.1,517.3 512.4,529.8 508.2,542.4 504,550.8 491.4,550.8 478.9,546.6 468.4,538.2 462.1,534 452,528 454,515" fill="#e0c000" fill-opacity="0.12"/><polygon points="468.4,504.7 487.3,500.5 495.6,513.1 504,517.3 508.2,529.8 499.8,542.4 487.3,546.6 474.7,542.4 462.1,531.9 457.9,521.4 462.1,511" fill="#ffff00" fill-opacity="0.45"/><ellipse cx="384" cy="421.5" rx="12" ry="12.5" fill="#e05a00"/><use href="#iP" x="377.6" y="415.3" color="#f06000"/><use href="#iP" x="389.0" y="413.7" color="#f06000"/><use href="#iP" x="377.9" y="413.3" color="#f06000"/><use href="#iM" x="377.1" y="428.7" color="#f06000"/><use href="#iP" x="376.7" y="419.4" color="#f06000"/><use href="#iP" x="383.3" y="415.3" color="#f06000"/><use href="#iP" x="391.9" y="416.9" color="#f06000"/><use href="#iM" x="384.3" y="417.9" color="#f06000"/><use href="#iP" x="386.1" y="423.7" color="#f06000"/><use href="#iP" x="385.2" y="426.1" color="#f06000"/><use href="#iP" x="387.7" y="417.7" color="#f06000"/><use href="#iP" x="375.8" y="419.4" color="#f06000"/><use href="#iP" x="388.5" y="431.3" color="#f06000"/><use href="#iM" x="393.9" y="419.4" color="#f06000"/><use href="#iP" x="390.3" y="422.4" color="#f06000"/><use href="#iP" x="383.5" y="427.1" color="#f06000"/><use href="#iP" x="376.9" y="416.6" color="#f06000"/><use href="#iM" x="380.5" y="430.4" color="#f06000"/><use href="#iM" x="382.5" y="417.3" color="#f06000"/><use href="#iP" x="383.0" y="418.2" color="#f06000"/><use href="#iM" x="389.6" y="419.7" color="#f06000"/><use href="#iM" x="393.2" y="422.6" color="#f06000"/><use href="#iM" x="377.1" y="428.3" color="#f06000"/><use href="#iP" x="388.3" y="422.8" color="#f06000"/><use href="#iM" x="387.6" y="424.9" color="#f06000"/><use href="#iM" x="380.7" y="426.3" color="#f06000"/><ellipse cx="385" cy="421" rx="9" ry="10" fill="#e05a00"/><use href="#iP" x="435.7" y="431.3" color="#f07000"/><use href="#iMn" x="432.9" y="479.0" color="#f89800"/><use href="#iPn" x="428.7" y="455.0" color="#f89800"/><use href="#iM" x="424.2" y="465.2" color="#f89800"/><use href="#iM" x="421.5" y="508.0" color="#fcb000"/><use href="#iP" x="429.3" y="504.2" color="#fcb000"/><use href="#iMn" x="477.1" y="487.1" color="#ffc000"/><use href="#iMn" x="459.6" y="465.6" color="#fcb000"/><use href="#iPn" x="447.1" y="464.0" color="#f89800"/><use href="#iPn" x="479.7" y="487.8" color="#ffc000"/><use href="#iP" x="486.4" y="489.1" color="#ffc000"/><use href="#iPn" x="428.5" y="478.2" color="#f89800"/><use href="#iM" x="467.3" y="460.7" color="#fcb000"/><use href="#iP" x="435.6" y="472.6" color="#f89800"/><use href="#iP" x="418.3" y="470.8" color="#f89800"/><use href="#iM" x="410.4" y="476.3" color="#f89800"/><use href="#iM" x="408.5" y="440.3" color="#f07000"/><use href="#iM" x="474.9" y="491.9" color="#ffc000"/><use href="#iPn" x="456.8" y="473.6" color="#fcb000"/><use href="#iP" x="449.7" y="486.7" color="#fcb000"/><use href="#iM" x="442.3" y="498.8" color="#fcb000"/><use href="#iP" x="461.9" y="498.1" color="#ffc000"/><use href="#iMn" x="425.6" y="515.9" color="#fcb000"/><use href="#iMn" x="446.7" y="486.1" color="#fcb000"/><use href="#iMn" x="438.2" y="497.8" color="#fcb000"/><use href="#iM" x="461.8" y="456.7" color="#fcb000"/><use href="#iP" x="425.4" y="503.1" color="#fcb000"/><use href="#iP" x="410.9" y="454.1" color="#f07000"/><use href="#iM" x="429.4" y="431.0" color="#f07000"/><use href="#iPn" x="417.5" y="479.9" color="#f89800"/><use href="#iPn" x="422.2" y="473.2" color="#f89800"/><use href="#iP" x="418.1" y="483.0" color="#f89800"/><use href="#iP" x="429.1" y="476.5" color="#f89800"/><use href="#iM" x="473.6" y="470.8" color="#fcb000"/><use href="#iM" x="478.3" y="480.7" color="#ffc000"/><use href="#iPn" x="429.1" y="516.0" color="#fcb000"/><use href="#iMn" x="474.4" y="483.1" color="#ffc000"/><use href="#iPn" x="429.3" y="481.4" color="#f89800"/><use href="#iMn" x="431.1" y="468.4" color="#f89800"/><use href="#iMn" x="426.6" y="442.7" color="#f07000"/><use href="#iP" x="429.3" y="499.1" color="#fcb000"/><use href="#iMn" x="433.2" y="504.6" color="#fcb000"/><use href="#iPn" x="432.5" y="447.9" color="#f89800"/><use href="#iM" x="401.9" y="451.1" color="#f07000"/><use href="#iP" x="445.3" y="483.6" color="#fcb000"/><use href="#iM" x="433.8" y="431.3" color="#f07000"/><use href="#iMn" x="419.3" y="466.8" color="#f89800"/><use href="#iMn" x="451.3" y="456.1" color="#f89800"/><use href="#iM" x="445.1" y="515.1" color="#ffc000"/><use href="#iMn" x="407.3" y="465.0" color="#f89800"/><use href="#iP" x="468.4" y="470.1" color="#fcb000"/><use href="#iMn" x="442.0" y="476.9" color="#fcb000"/><use href="#iM" x="417.1" y="510.7" color="#fcb000"/><use href="#iM" x="445.4" y="515.5" color="#ffc000"/><use href="#iM" x="417.8" y="513.2" color="#fcb000"/><use href="#iPn" x="414.8" y="448.3" color="#f07000"/><use href="#iM" x="423.2" y="429.7" color="#f07000"/><use href="#iPn" x="456.3" y="478.5" color="#fcb000"/><use href="#iMn" x="458.5" y="461.2" color="#fcb000"/><use href="#iM" x="406.1" y="479.9" color="#f89800"/><use href="#iM" x="419.4" y="441.9" color="#f07000"/><use href="#iPn" x="460.6" y="477.4" color="#fcb000"/><use href="#iMn" x="425.4" y="449.7" color="#f89800"/><use href="#iPn" x="431.2" y="436.1" color="#f07000"/><use href="#iM" x="436.4" y="473.6" color="#f89800"/><use href="#iP" x="434.1" y="439.8" color="#f89800"/><use href="#iMn" x="407.6" y="468.3" color="#f89800"/><use href="#iPn" x="447.1" y="450.3" color="#f89800"/><use href="#iPn" x="445.9" y="512.9" color="#ffc000"/><use href="#iPn" x="454.3" y="454.1" color="#f89800"/><use href="#iMn" x="433.4" y="464.0" color="#f89800"/><use href="#iM" x="411.3" y="503.4" color="#f89800"/><use href="#iPn" x="410.2" y="468.4" color="#f89800"/><use href="#iPn" x="438.9" y="505.3" color="#fcb000"/><use href="#iP" x="438.1" y="490.5" color="#fcb000"/><use href="#iP" x="461.9" y="456.3" color="#fcb000"/><use href="#iPn" x="423.8" y="433.1" color="#f07000"/><use href="#iMn" x="473.5" y="483.5" color="#ffc000"/><use href="#iPn" x="450.5" y="458.9" color="#f89800"/><use href="#iPn" x="455.3" y="456.7" color="#f89800"/><use href="#iP" x="475.0" y="473.2" color="#fcb000"/><use href="#iM" x="467.0" y="484.1" color="#fcb000"/><use href="#iP" x="481.0" y="497.0" color="#ffc000"/><use href="#iPn" x="434.9" y="491.2" color="#fcb000"/><use href="#iMn" x="415.5" y="457.6" color="#f89800"/><use href="#iPn" x="423.3" y="513.5" color="#fcb000"/><use href="#iPn" x="433.7" y="447.3" color="#f89800"/><use href="#iMn" x="462.2" y="501.9" color="#ffc000"/><use href="#iP" x="413.4" y="434.3" color="#f07000"/><use href="#iPn" x="422.0" y="513.7" color="#fcb000"/><use href="#iM" x="431.1" y="516.0" color="#fcb000"/><use href="#iMn" x="408.0" y="463.1" color="#f07000"/><use href="#iPn" x="446.9" y="478.1" color="#fcb000"/><use href="#iMn" x="478.9" y="485.0" color="#ffc000"/><use href="#iPn" x="462.4" y="506.1" color="#ffc000"/><use href="#iP" x="433.7" y="463.6" color="#f89800"/><use href="#iPn" x="412.5" y="448.0" color="#f07000"/><use href="#iP" x="425.6" y="511.7" color="#fcb000"/><use href="#iPn" x="451.8" y="487.0" color="#fcb000"/><use href="#iP" x="449.7" y="489.5" color="#fcb000"/><use href="#iMn" x="416.6" y="466.1" color="#f89800"/><use href="#iM" x="400.1" y="463.2" color="#f07000"/><use href="#iPn" x="456.5" y="455.0" color="#f89800"/><use href="#iMn" x="459.3" y="462.5" color="#fcb000"/><use href="#iM" x="465.6" y="481.3" color="#fcb000"/><use href="#iM" x="446.0" y="494.1" color="#fcb000"/><use href="#iP" x="436.1" y="439.3" color="#f89800"/><use href="#iP" x="484.0" y="483.4" color="#ffc000"/><use href="#iP" x="447.0" y="482.7" color="#fcb000"/><use href="#iMn" x="440.4" y="488.8" color="#fcb000"/><use href="#iPn" x="475.2" y="499.2" color="#ffc000"/><use href="#iPn" x="433.4" y="434.3" color="#f07000"/><use href="#iPn" x="471.4" y="471.3" color="#fcb000"/><use href="#iM" x="444.8" y="453.1" color="#f89800"/><use href="#iP" x="405.2" y="494.8" color="#f89800"/><use href="#iP" x="464.1" y="494.7" color="#ffc000"/><use href="#iMn" x="409.7" y="488.1" color="#f89800"/><use href="#iPn" x="450.8" y="446.1" color="#f89800"/><use href="#iP" x="472.2" y="471.0" color="#fcb000"/><use href="#iMn" x="442.1" y="449.1" color="#f89800"/><use href="#iM" x="417.5" y="464.8" color="#f89800"/><use href="#iP" x="437.9" y="463.7" color="#f89800"/><use href="#iMn" x="449.8" y="490.7" color="#fcb000"/><use href="#iP" x="464.5" y="489.9" color="#fcb000"/><use href="#iPn" x="413.5" y="488.6" color="#f89800"/><use href="#iM" x="437.9" y="508.0" color="#fcb000"/><use href="#iM" x="421.9" y="518.2" color="#fcb000"/><use href="#iP" x="462.4" y="456.3" color="#fcb000"/><use href="#iMn" x="446.7" y="483.0" color="#fcb000"/><use href="#iPn" x="435.0" y="472.5" color="#f89800"/><use href="#iMn" x="413.3" y="444.0" color="#f07000"/><use href="#iM" x="402.3" y="473.5" color="#f89800"/><use href="#iP" x="405.3" y="447.0" color="#f07000"/><use href="#iPn" x="431.8" y="440.0" color="#f89800"/><use href="#iM" x="437.2" y="487.8" color="#fcb000"/><use href="#iM" x="478.3" y="496.8" color="#ffc000"/><use href="#iPn" x="429.9" y="455.0" color="#f89800"/><use href="#iM" x="407.1" y="466.7" color="#f89800"/><use href="#iPn" x="423.7" y="493.8" color="#f89800"/><use href="#iP" x="427.0" y="469.5" color="#f89800"/><use href="#iMn" x="448.4" y="510.9" color="#ffc000"/><use href="#iP" x="419.1" y="470.0" color="#f89800"/><use href="#iMn" x="411.3" y="468.7" color="#f89800"/><use href="#iM" x="442.6" y="466.9" color="#f89800"/><use href="#iP" x="438.6" y="515.9" color="#fcb000"/><use href="#iP" x="456.1" y="453.8" color="#f89800"/><use href="#iMn" x="464.6" y="502.9" color="#ffc000"/><use href="#iPn" x="418.5" y="450.5" color="#f07000"/><use href="#iM" x="433.6" y="426.6" color="#f07000"/><use href="#iPn" x="410.4" y="467.7" color="#f89800"/><use href="#iM" x="414.1" y="482.4" color="#f89800"/><use href="#iP" x="410.8" y="455.0" color="#f07000"/><use href="#iP" x="427.6" y="430.6" color="#f07000"/><use href="#iM" x="429.7" y="428.8" color="#f07000"/><use href="#iPn" x="438.5" y="429.9" color="#f07000"/><use href="#iP" x="455.6" y="444.9" color="#f89800"/><use href="#iM" x="436.4" y="436.4" color="#f89800"/><use href="#iM" x="412.1" y="500.3" color="#f89800"/><use href="#iM" x="456.5" y="452.6" color="#f89800"/><use href="#iMn" x="424.9" y="490.6" color="#f89800"/><use href="#iPn" x="414.7" y="475.6" color="#f89800"/><use href="#iPn" x="444.9" y="498.2" color="#fcb000"/><use href="#iP" x="425.3" y="438.6" color="#f07000"/><use href="#iMn" x="444.9" y="500.4" color="#fcb000"/><use href="#iP" x="418.1" y="487.0" color="#f89800"/><use href="#iP" x="474.3" y="465.3" color="#fcb000"/><use href="#iP" x="424.7" y="444.8" color="#f07000"/><use href="#iM" x="404.1" y="473.9" color="#f89800"/><use href="#iP" x="402.1" y="468.8" color="#f07000"/><use href="#iM" x="438.6" y="452.6" color="#f89800"/><use href="#iM" x="428.4" y="466.3" color="#f89800"/><use href="#iM" x="432.3" y="433.1" color="#f07000"/><use href="#iPn" x="421.7" y="475.3" color="#f89800"/><use href="#iMn" x="432.4" y="467.3" color="#f89800"/><use href="#iMn" x="410.1" y="445.2" color="#f07000"/><use href="#iP" x="415.7" y="467.6" color="#f89800"/><use href="#iP" x="476.6" y="490.9" color="#ffc000"/><use href="#iM" x="468.7" y="465.0" color="#fcb000"/><use href="#iMn" x="431.6" y="512.4" color="#fcb000"/><use href="#iP" x="448.5" y="465.4" color="#f89800"/><use href="#iPn" x="442.5" y="490.8" color="#fcb000"/><use href="#iM" x="410.5" y="482.9" color="#f89800"/><use href="#iP" x="475.6" y="484.2" color="#ffc000"/><use href="#iP" x="460.3" y="455.4" color="#f89800"/><use href="#iMn" x="418.7" y="447.2" color="#f07000"/><use href="#iPn" x="413.2" y="439.1" color="#f07000"/><use href="#iM" x="419.2" y="433.2" color="#f07000"/><use href="#iP" x="473.3" y="477.4" color="#fcb000"/><use href="#iM" x="433.2" y="464.0" color="#f89800"/><use href="#iMn" x="469.1" y="466.0" color="#fcb000"/><use href="#iM" x="411.8" y="463.8" color="#f89800"/><use href="#iPn" x="449.3" y="470.5" color="#fcb000"/><use href="#iP" x="417.2" y="492.3" color="#f89800"/><use href="#iM" x="402.2" y="476.5" color="#f89800"/><use href="#iPn" x="448.8" y="472.1" color="#fcb000"/><use href="#iPn" x="427.4" y="461.2" color="#f89800"/><use href="#iP" x="446.6" y="442.4" color="#f89800"/><use href="#iM" x="483.2" y="485.8" color="#ffc000"/><use href="#iPn" x="423.0" y="469.4" color="#f89800"/><use href="#iPn" x="448.9" y="461.1" color="#f89800"/><use href="#iM" x="432.2" y="444.4" color="#f89800"/><use href="#iP" x="405.6" y="466.0" color="#f07000"/><use href="#iP" x="456.4" y="509.0" color="#ffc000"/><use href="#iM" x="459.8" y="461.0" color="#fcb000"/><use href="#iMn" x="414.6" y="500.7" color="#f89800"/><use href="#iMn" x="491.7" y="509.8" color="#ffff00"/><use href="#iMn" x="488.3" y="511.9" color="#fff000"/><use href="#iM" x="495.6" y="535.6" color="#ffee00"/><use href="#iMn" x="483.1" y="517.0" color="#ffee00"/><use href="#iPn" x="484.1" y="533.7" color="#fff000"/><use href="#iPn" x="473.4" y="535.8" color="#ffff00"/><use href="#iPn" x="471.4" y="507.6" color="#ffff00"/><use href="#iPn" x="487.8" y="517.9" color="#ffff00"/><use href="#iPn" x="488.5" y="537.4" color="#fff000"/><use href="#iM" x="482.4" y="515.2" color="#ffee00"/><use href="#iMn" x="484.9" y="513.7" color="#fff000"/><use href="#iPn" x="461.8" y="529.6" color="#ffee00"/><use href="#iPn" x="464.7" y="527.1" color="#ffff00"/><use href="#iMn" x="499.3" y="533.4" color="#fff000"/><use href="#iPn" x="457.1" y="524.9" color="#ffee00"/><use href="#iP" x="456.2" y="515.1" color="#ffee00"/><use href="#iPn" x="482.9" y="523.6" color="#fff000"/><use href="#iPn" x="498.2" y="529.9" color="#ffff00"/><use href="#iM" x="477.5" y="522.7" color="#fff000"/><use href="#iPn" x="479.3" y="527.0" color="#ffff00"/><use href="#iM" x="464.5" y="504.8" color="#fff000"/><use href="#iPn" x="469.9" y="509.5" color="#fff000"/><use href="#iP" x="483.4" y="513.7" color="#fff000"/><use href="#iM" x="500.2" y="536.5" color="#ffff00"/><use href="#iM" x="473.9" y="515.1" color="#fff000"/><use href="#iP" x="463.6" y="521.2" color="#ffff00"/><use href="#iP" x="475.4" y="526.4" color="#fff000"/><use href="#iMn" x="506.6" y="533.5" color="#ffee00"/><use href="#iM" x="467.8" y="525.1" color="#ffee00"/><use href="#iMn" x="493.3" y="543.1" color="#ffee00"/><use href="#iPn" x="458.0" y="522.9" color="#fff000"/><use href="#iM" x="490.1" y="527.0" color="#ffee00"/><use href="#iMn" x="491.1" y="547.2" color="#ffff00"/><use href="#iM" x="462.9" y="508.5" color="#ffee00"/><use href="#iPn" x="454.7" y="523.3" color="#ffee00"/><use href="#iM" x="475.7" y="537.0" color="#ffee00"/><use href="#iP" x="507.1" y="530.5" color="#fff000"/><use href="#iPn" x="484.3" y="521.4" color="#ffff00"/><use href="#iM" x="481.2" y="520.7" color="#fff000"/><use href="#iMn" x="472.0" y="514.0" color="#ffee00"/><use href="#iM" x="506.8" y="540.0" color="#ffee00"/><use href="#iP" x="477.6" y="544.1" color="#ffee00"/><use href="#iMn" x="480.0" y="527.5" color="#ffff00"/><use href="#iMn" x="469.5" y="513.8" color="#ffff00"/><use href="#iM" x="476.2" y="544.3" color="#fff000"/><use href="#iP" x="502.9" y="540.1" color="#ffee00"/><use href="#iP" x="496.6" y="521.3" color="#ffee00"/><use href="#iP" x="500.7" y="538.6" color="#ffee00"/><use href="#iPn" x="508.1" y="539.7" color="#ffff00"/><use href="#iP" x="499.7" y="544.8" color="#fff000"/><use href="#iPn" x="485.6" y="527.1" color="#ffff00"/><use href="#iMn" x="484.2" y="516.5" color="#ffee00"/><use href="#iMn" x="463.8" y="533.1" color="#fff000"/><use href="#iM" x="461.8" y="507.0" color="#ffff00"/><use href="#iP" x="482.5" y="519.1" color="#ffee00"/><use href="#iM" x="489.6" y="542.1" color="#fff000"/><use href="#iP" x="488.0" y="537.1" color="#ffff00"/><use href="#iP" x="474.1" y="538.3" color="#ffee00"/><use href="#iM" x="476.6" y="540.9" color="#ffee00"/><use href="#iMn" x="457.8" y="528.1" color="#ffee00"/><path d="M415 508h1v1h-1zM458 523h1v1h-1zM438 452h1v1h-1zM407 479h1v1h-1zM477 542h1v1h-1zM466 519h1v1h-1zM485 526h1v1h-1zM406 461h1v1h-1zM422 475h1v1h-1zM503 516h1v1h-1zM472 507h1v1h-1zM490 510h1v1h-1zM426 462h1v1h-1zM407 480h1v1h-1zM497 525h1v1h-1zM448 473h1v1h-1zM470 508h1v1h-1zM482 535h1v1h-1zM433 510h1v1h-1zM448 451h1v1h-1zM482 484h1v1h-1zM485 522h1v1h-1zM440 495h1v1h-1zM465 462h1v1h-1zM494 514h1v1h-1zM499 537h1v1h-1zM481 497h1v1h-1zM437 454h1v1h-1zM461 514h1v1h-1zM472 528h1v1h-1zM480 529h1v1h-1zM415 435h1v1h-1zM497 516h1v1h-1zM468 521h1v1h-1zM491 536h1v1h-1zM493 523h1v1h-1zM505 536h1v1h-1zM436 466h1v1h-1zM401 450h1v1h-1zM447 450h1v1h-1zM459 454h1v1h-1zM457 512h1v1h-1zM436 449h1v1h-1zM405 449h1v1h-1zM403 462h1v1h-1zM427 482h1v1h-1zM401 454h1v1h-1zM467 531h1v1h-1zM440 493h1v1h-1zM423 503h1v1h-1zM485 539h1v1h-1zM427 515h1v1h-1zM429 455h1v1h-1zM406 473h1v1h-1zM485 539h1v1h-1zM478 479h1v1h-1zM410 461h1v1h-1zM449 487h1v1h-1zM462 505h1v1h-1zM493 529h1v1h-1zM493 520h1v1h-1zM458 456h1v1h-1zM483 530h1v1h-1zM426 474h1v1h-1zM461 524h1v1h-1zM463 467h1v1h-1zM461 506h1v1h-1zM408 439h1v1h-1zM402 466h1v1h-1zM502 544h1v1h-1zM502 533h1v1h-1zM490 504h1v1h-1zM466 516h1v1h-1zM461 517h1v1h-1zM461 530h1v1h-1zM417 466h1v1h-1zM476 517h1v1h-1zM408 474h1v1h-1zM502 549h1v1h-1zM412 509h1v1h-1zM485 545h1v1h-1zM447 473h1v1h-1zM508 542h1v1h-1zM438 519h1v1h-1zM492 516h1v1h-1zM471 521h1v1h-1zM454 516h1v1h-1zM422 430h1v1h-1zM485 516h1v1h-1zM401 456h1v1h-1zM442 472h1v1h-1zM459 450h1v1h-1zM442 477h1v1h-1zM497 515h1v1h-1zM450 460h1v1h-1zM469 517h1v1h-1zM403 475h1v1h-1zM411 512h1v1h-1zM405 453h1v1h-1zM425 476h1v1h-1zM436 448h1v1h-1zM407 484h1v1h-1zM447 489h1v1h-1zM447 460h1v1h-1zM462 512h1v1h-1zM486 486h1v1h-1zM508 539h1v1h-1zM453 473h1v1h-1zM459 520h1v1h-1zM506 522h1v1h-1zM426 468h1v1h-1zM507 522h1v1h-1zM402 452h1v1h-1zM450 485h1v1h-1zM425 427h1v1h-1zM449 446h1v1h-1zM491 543h1v1h-1zM428 465h1v1h-1zM506 542h1v1h-1zM452 525h1v1h-1zM461 526h1v1h-1zM419 459h1v1h-1zM447 439h1v1h-1zM466 527h1v1h-1zM507 536h1v1h-1zM448 453h1v1h-1zM457 515h1v1h-1zM497 548h1v1h-1zM461 516h1v1h-1zM480 541h1v1h-1zM488 528h1v1h-1zM476 508h1v1h-1zM433 430h1v1h-1zM501 533h1v1h-1zM407 455h1v1h-1zM485 493h1v1h-1zM468 519h1v1h-1zM504 520h1v1h-1zM483 525h1v1h-1zM412 499h1v1h-1zM431 427h1v1h-1zM441 510h1v1h-1zM413 444h1v1h-1zM429 457h1v1h-1zM468 520h1v1h-1zM457 460h1v1h-1zM483 503h1v1h-1zM447 509h1v1h-1zM407 498h1v1h-1zM409 511h1v1h-1zM462 526h1v1h-1zM462 525h1v1h-1zM493 541h1v1h-1zM492 524h1v1h-1zM461 517h1v1h-1zM466 518h1v1h-1zM458 481h1v1h-1zM458 510h1v1h-1zM400 453h1v1h-1zM471 464h1v1h-1zM472 540h1v1h-1zM473 513h1v1h-1zM484 477h1v1h-1zM469 474h1v1h-1zM482 543h1v1h-1zM482 485h1v1h-1zM452 498h1v1h-1zM407 492h1v1h-1zM422 515h1v1h-1zM455 482h1v1h-1zM458 474h1v1h-1zM441 496h1v1h-1zM408 488h1v1h-1zM470 516h1v1h-1zM404 471h1v1h-1zM487 516h1v1h-1zM494 535h1v1h-1zM500 521h1v1h-1zM443 466h1v1h-1zM435 489h1v1h-1zM447 452h1v1h-1zM465 519h1v1h-1zM466 464h1v1h-1zM418 515h1v1h-1zM464 517h1v1h-1zM459 523h1v1h-1zM429 509h1v1h-1zM467 501h1v1h-1zM491 515h1v1h-1zM427 487h1v1h-1zM466 491h1v1h-1zM404 487h1v1h-1zM411 446h1v1h-1zM461 508h1v1h-1zM439 462h1v1h-1zM434 473h1v1h-1zM407 476h1v1h-1zM408 503h1v1h-1zM438 448h1v1h-1zM411 500h1v1h-1zM465 508h1v1h-1zM412 505h1v1h-1zM448 440h1v1h-1zM474 525h1v1h-1zM471 509h1v1h-1zM483 535h1v1h-1zM482 536h1v1h-1zM500 532h1v1h-1zM426 513h1v1h-1zM402 472h1v1h-1zM406 442h1v1h-1zM472 514h1v1h-1zM420 460h1v1h-1zM461 477h1v1h-1zM408 469h1v1h-1zM410 453h1v1h-1zM503 540h1v1h-1zM434 465h1v1h-1zM418 436h1v1h-1zM497 525h1v1h-1zM476 487h1v1h-1zM497 535h1v1h-1zM491 536h1v1h-1zM425 456h1v1h-1zM459 480h1v1h-1zM417 466h1v1h-1zM413 433h1v1h-1zM478 502h1v1h-1zM406 490h1v1h-1zM425 430h1v1h-1zM444 478h1v1h-1zM477 508h1v1h-1zM430 434h1v1h-1zM481 497h1v1h-1zM481 546h1v1h-1zM442 463h1v1h-1zM440 430h1v1h-1zM510 530h1v1h-1zM502 519h1v1h-1zM438 433h1v1h-1zM449 502h1v1h-1zM422 493h1v1h-1zM477 545h1v1h-1zM403 469h1v1h-1zM456 499h1v1h-1zM476 524h1v1h-1zM465 458h1v1h-1zM492 544h1v1h-1zM487 526h1v1h-1zM509 528h1v1h-1zM423 447h1v1h-1zM499 521h1v1h-1zM437 479h1v1h-1zM454 457h1v1h-1zM460 510h1v1h-1zM427 452h1v1h-1zM453 476h1v1h-1zM456 457h1v1h-1zM498 546h1v1h-1zM503 534h1v1h-1zM479 545h1v1h-1zM420 443h1v1h-1zM447 497h1v1h-1zM465 520h1v1h-1zM412 477h1v1h-1zM454 471h1v1h-1zM454 448h1v1h-1zM418 474h1v1h-1zM454 443h1v1h-1zM457 458h1v1h-1zM458 529h1v1h-1zM424 520h1v1h-1zM443 438h1v1h-1zM487 545h1v1h-1zM450 512h1v1h-1zM460 526h1v1h-1zM411 500h1v1h-1zM461 466h1v1h-1zM472 507h1v1h-1zM414 447h1v1h-1zM462 521h1v1h-1zM469 525h1v1h-1zM431 491h1v1h-1zM461 455h1v1h-1zM476 521h1v1h-1zM401 456h1v1h-1zM492 530h1v1h-1zM430 476h1v1h-1zM408 484h1v1h-1zM470 531h1v1h-1zM443 514h1v1h-1zM409 454h1v1h-1zM490 513h1v1h-1zM477 473h1v1h-1zM438 471h1v1h-1zM473 520h1v1h-1zM480 516h1v1h-1zM471 536h1v1h-1zM405 471h1v1h-1zM508 540h1v1h-1zM488 539h1v1h-1zM402 462h1v1h-1zM427 475h1v1h-1z" fill="#40384a" fill-opacity="0.9"/><path d="M416 440 Q418 429 430 426 Q443 425 445 434 Q440 443 428 445 Q419 446 416 440Z" fill="#e05a00"/><use href="#iM" x="417.1" y="433.8" color="#f06a00"/><use href="#iM" x="442.6" y="432.8" color="#f06a00"/><use href="#iMn" x="435.9" y="443.0" color="#f06a00"/><use href="#iPn" x="440.0" y="440.7" color="#f06a00"/><use href="#iM" x="430.1" y="444.0" color="#f06a00"/><use href="#iM" x="429.8" y="444.0" color="#f06a00"/><use href="#iM" x="421.7" y="428.0" color="#f06a00"/><use href="#iP" x="438.4" y="441.8" color="#f06a00"/><use href="#iP" x="438.3" y="441.9" color="#f06a00"/><use href="#iPn" x="437.6" y="442.3" color="#f06a00"/><use href="#iPn" x="423.7" y="442.9" color="#f06a00"/><use href="#iP" x="439.6" y="428.9" color="#f06a00"/><use href="#iP" x="425.3" y="443.4" color="#f06a00"/><use href="#iM" x="417.0" y="434.6" color="#f06a00"/><use href="#sP" x="254.5" y="12.4" color="#ffff00"/><use href="#sp" x="256.6" y="42.2" color="#ffd000"/><use href="#sM" x="199.7" y="68.1" color="#ff9000"/><use href="#sM" x="244.5" y="110.3" color="#ffb000"/><use href="#sP" x="264.3" y="124.1" color="#ffd000"/><use href="#sP" x="287.6" y="120.3" color="#ffd000"/><use href="#sM" x="775.0" y="174.0" color="#ff7000"/><use href="#sP" x="286.1" y="404.3" color="#ff7000"/><use href="#sP" x="185.5" y="426.4" color="#ff7000"/><use href="#sP" x="244.1" y="441.2" color="#ff7000"/><use href="#sm" x="259.3" y="444.3" color="#ff7000"/><use href="#sP" x="255.1" y="502.3" color="#ff7000"/><use href="#sM" x="242.4" y="514.3" color="#ffff00"/><use href="#sm" x="181.3" y="498.5" color="#ff7000"/><use href="#sP" x="188.0" y="537.1" color="#ff7000"/><use href="#sP" x="312.7" y="427.6" color="#ff7000"/><use href="#sP" x="310.7" y="430.8" color="#ff7000"/><use href="#sM" x="309.0" y="434.5" color="#ff7000"/><use href="#sP" x="307.2" y="444.3" color="#ff7000"/><use href="#sM" x="313.9" y="443.1" color="#ff7000"/><use href="#sP" x="379.1" y="403.7" color="#ff7000"/><use href="#sP" x="343.4" y="460.3" color="#ff7000"/><use href="#sM" x="347.1" y="460.3" color="#ff7000"/><use href="#sP" x="389.0" y="472.6" color="#ff7000"/><use href="#sM" x="335.3" y="530.0" color="#ff7000"/><use href="#sP" x="312.2" y="530.0" color="#ff7000"/><use href="#sP" x="305.3" y="535.4" color="#ff7000"/><use href="#sM" x="353.3" y="540.3" color="#ff7000"/><use href="#sM" x="353.3" y="552.7" color="#ff7000"/><use href="#sP" x="366.8" y="552.2" color="#ff7000"/><use href="#sm" x="305.3" y="553.9" color="#ff7000"/><use href="#sP" x="304.0" y="561.3" color="#ff7000"/><use href="#sM" x="329.9" y="557.1" color="#ff7000"/><use href="#sP" x="338.5" y="571.1" color="#ff7000"/><use href="#sm" x="329.9" y="572.4" color="#ff7000"/><use href="#sP" x="284.3" y="565.0" color="#ff7000"/><use href="#sm" x="283.1" y="569.9" color="#ff7000"/><use href="#sP" x="284.3" y="580.2" color="#ff7000"/><use href="#sM" x="299.1" y="587.1" color="#ff7000"/><use href="#sP" x="290.5" y="595.7" color="#ff7000"/><use href="#sP" x="313.9" y="593.3" color="#ff7000"/><use href="#sP" x="345.9" y="460.0" color="#ff7000"/><use href="#sP" x="343.0" y="460.0" color="#ff7000"/><use href="#sM" x="345.9" y="469.9" color="#ff7000"/><use href="#sP" x="389.3" y="471.8" color="#ff7000"/><use href="#sP" x="329.9" y="468.9" color="#ff7000"/><use href="#sM" x="334.8" y="473.9" color="#ff7000"/><use href="#sM" x="339.7" y="471.4" color="#ff7000"/><use href="#sM" x="347.1" y="470.2" color="#ff7000"/><use href="#sP" x="332.3" y="481.3" color="#ff7000"/><use href="#sM" x="337.3" y="478.8" color="#ff7000"/><use href="#sM" x="329.9" y="486.2" color="#ff7000"/><use href="#sP" x="333.6" y="489.9" color="#ff7000"/><use href="#sP" x="322.5" y="480.0" color="#ff7000"/><use href="#sP" x="347.1" y="476.3" color="#ff7000"/><use href="#sP" x="354.5" y="478.8" color="#ff7000"/><use href="#sP" x="353.3" y="484.9" color="#ff7000"/><use href="#sP" x="348.3" y="492.3" color="#ff7000"/><use href="#sM" x="350.8" y="499.7" color="#ff7000"/><use href="#sP" x="357.0" y="494.8" color="#ff7000"/><use href="#sP" x="361.9" y="493.6" color="#ff7000"/><use href="#sP" x="364.4" y="497.3" color="#ff7000"/><use href="#sM" x="373.0" y="497.3" color="#ff7000"/><use href="#sP" x="360.7" y="503.4" color="#ff7000"/><use href="#sM" x="364.4" y="510.8" color="#ff7000"/><use href="#sM" x="359.4" y="518.2" color="#ff7000"/><use href="#sP" x="350.8" y="517.0" color="#ff7000"/><use href="#sP" x="353.3" y="525.6" color="#ff7000"/><use href="#sP" x="322.5" y="499.7" color="#ff7000"/><use href="#sM" x="369.3" y="487.4" color="#ff7000"/><use href="#sP" x="366.8" y="481.3" color="#ff7000"/><use href="#sP" x="359.4" y="480.0" color="#ffb000"/><use href="#sP" x="342.2" y="497.3" color="#ffb000"/><use href="#sm" x="374.2" y="488.6" color="#ff7000"/><use href="#sm" x="371.7" y="504.6" color="#ff7000"/><use href="#sm" x="323.7" y="507.1" color="#ff7000"/><use href="#sP" x="379.4" y="403.4" color="#ff7000"/><use href="#sM" x="377.4" y="411.3" color="#ff7000"/><use href="#sP" x="363.6" y="423.6" color="#ff7000"/><use href="#sM" x="360.7" y="424.6" color="#ff7000"/><use href="#sM" x="366.6" y="436.9" color="#ff7000"/><use href="#sP" x="361.2" y="443.3" color="#ff7000"/><use href="#sM" x="355.8" y="448.7" color="#ff7000"/><use href="#sM" x="371.5" y="443.3" color="#ff7000"/><use href="#sM" x="380.4" y="439.3" color="#ff7000"/><use href="#sM" x="369.6" y="432.4" color="#ff7000"/><use href="#sM" x="368.6" y="427.5" color="#ff7000"/><use href="#sP" x="372.5" y="420.6" color="#ff7000"/><use href="#sM" x="375.0" y="428.0" color="#ff7000"/><use href="#sM" x="366.0" y="446.0" color="#ff7000"/><use href="#sP" x="364.0" y="440.0" color="#ff7000"/><use href="#sp" x="356.3" y="431.5" color="#ff7000"/><use href="#sp" x="371.5" y="448.7" color="#ff7000"/><use href="#sm" x="372.5" y="452.1" color="#ff7000"/><use href="#sM" x="386.3" y="432.4" color="#ff9000"/><use href="#sP" x="188.4" y="538.2" color="#ff7000"/><use href="#sM" x="222.3" y="539.5" color="#ffff00"/><use href="#sp" x="224.3" y="544.8" color="#ff7000"/><use href="#sM" x="211.6" y="556.1" color="#ffff00"/><use href="#sp" x="202.1" y="561.7" color="#ffd000"/><use href="#sM" x="214.3" y="568.3" color="#ffff00"/><use href="#sM" x="203.4" y="584.3" color="#ffd000"/><use href="#sM" x="176.2" y="571.4" color="#ffff00"/><use href="#sM" x="183.5" y="576.5" color="#ffd000"/><use href="#sM" x="172.4" y="589.1" color="#ffd000"/><use href="#sM" x="159.1" y="591.4" color="#ffb000"/><use href="#sM" x="131.2" y="551.5" color="#ffd000"/><use href="#sP" x="148.0" y="549.3" color="#ff7000"/><use href="#sM" x="145.2" y="557.2" color="#ffff00"/><use href="#sM" x="139.2" y="572.5" color="#ffb000"/><use href="#sM" x="148.0" y="576.5" color="#ffff00"/><use href="#sM" x="131.2" y="586.5" color="#ffff00"/><use href="#sM" x="87.1" y="571.4" color="#ff7000"/><use href="#sM" x="84.2" y="588.3" color="#ffd000"/><use href="#sM" x="86.4" y="590.9" color="#ffff00"/><use href="#sM" x="80.2" y="621.5" color="#ffff00"/><use href="#sP" x="53.2" y="626.4" color="#ffd000"/><use href="#sP" x="65.4" y="627.5" color="#ff7000"/><use href="#sP" x="98.2" y="633.5" color="#ff7000"/><use href="#sM" x="110.4" y="631.2" color="#ff7000"/><use href="#sM" x="164.0" y="658.5" color="#ffb000"/><use href="#sM" x="27.3" y="674.0" color="#ffb000"/><use href="#sM" x="36.1" y="673.4" color="#ffff00"/><use href="#sM" x="103.0" y="671.1" color="#ffb000"/><use href="#sM" x="57.2" y="687.3" color="#ffb000"/><use href="#sM" x="105.3" y="688.4" color="#ff7000"/><use href="#sP" x="126.8" y="694.0" color="#ffff00"/><use href="#sP" x="19.9" y="695.1" color="#ff7000"/><use href="#sM" x="207.2" y="658.5" color="#ff7000"/><use href="#sP" x="220.5" y="653.0" color="#ff7000"/><use href="#sP" x="220.5" y="661.8" color="#ff7000"/><use href="#sP" x="230.5" y="662.9" color="#ff7000"/><use href="#sM" x="202.8" y="679.1" color="#ff7000"/><use href="#sp" x="212.7" y="677.8" color="#ff7000"/><use href="#sM" x="219.4" y="679.1" color="#ff7000"/><use href="#sm" x="192.8" y="684.0" color="#ff7000"/><use href="#sm" x="201.7" y="692.9" color="#ff7000"/><use href="#sM" x="236.7" y="684.0" color="#ff7000"/><use href="#sP" x="230.5" y="688.9" color="#ff7000"/><use href="#sP" x="164.0" y="692.9" color="#ff7000"/><use href="#sM" x="171.7" y="695.1" color="#ff7000"/><use href="#sM" x="160.0" y="590.8" color="#ffff00"/><use href="#sM" x="16.0" y="716.0" color="#ff7000"/><use href="#sM" x="91.4" y="704.6" color="#ff7000"/><use href="#sP" x="86.4" y="712.0" color="#ffff00"/><use href="#sM" x="54.4" y="724.4" color="#ffff00"/><use href="#sP" x="84.1" y="725.6" color="#ffff00"/><use href="#sp" x="112.0" y="719.4" color="#ff7000"/><use href="#sP" x="138.2" y="717.1" color="#ff7000"/><use href="#sM" x="58.3" y="753.2" color="#ff7000"/><use href="#sP" x="148.0" y="760.0" color="#ff7000"/><use href="#sm" x="193.0" y="758.0" color="#ff7000"/><use href="#sM" x="464.6" y="627.4" color="#ff7000"/><use href="#sp" x="385.5" y="631.1" color="#ffb000"/><use href="#sM" x="451.5" y="644.3" color="#ff7000"/><use href="#sp" x="490.5" y="649.5" color="#ff7000"/><use href="#sP" x="249.8" y="642.4" color="#ff7000"/><use href="#sM" x="252.4" y="644.3" color="#ff7000"/><use href="#sM" x="261.1" y="643.2" color="#ff7000"/><use href="#sM" x="270.1" y="658.2" color="#ff7000"/><use href="#sM" x="289.3" y="668.2" color="#ff7000"/><use href="#sM" x="309.1" y="663.5" color="#ff7000"/><use href="#sM" x="316.5" y="667.5" color="#ff7000"/><use href="#sP" x="231.3" y="663.5" color="#ff7000"/><use href="#sp" x="250.6" y="677.5" color="#ff7000"/><use href="#sM" x="237.4" y="684.1" color="#ff7000"/><use href="#sP" x="232.1" y="689.1" color="#ff7000"/><use href="#sM" x="249.8" y="696.5" color="#ff7000"/><use href="#sP" x="254.3" y="701.7" color="#ff7000"/><use href="#sM" x="239.2" y="704.4" color="#ff7000"/><use href="#sp" x="239.2" y="722.3" color="#ff7000"/><use href="#sM" x="235.3" y="730.7" color="#ff7000"/><use href="#sM" x="253.2" y="726.2" color="#ff7000"/><use href="#sM" x="299.9" y="689.1" color="#ff7000"/><use href="#sP" x="311.2" y="696.5" color="#ff7000"/><use href="#sm" x="301.2" y="710.4" color="#ff7000"/><use href="#sM" x="360.0" y="691.7" color="#ff7000"/><use href="#sM" x="382.4" y="703.8" color="#ffb000"/><use href="#sP" x="401.4" y="709.6" color="#ffb000"/><use href="#sP" x="419.3" y="692.5" color="#ff7000"/><use href="#sP" x="432.5" y="704.4" color="#ffb000"/><use href="#sM" x="466.0" y="696.5" color="#ff7000"/><use href="#sM" x="491.0" y="695.7" color="#ff7000"/><use href="#sM" x="510.8" y="717.5" color="#ffd000"/><use href="#sP" x="518.7" y="719.7" color="#ffb000"/><use href="#sP" x="456.2" y="729.4" color="#ffff00"/><use href="#sM" x="493.1" y="727.6" color="#ffff00"/><use href="#sM" x="424.3" y="735.5" color="#ffb000"/><use href="#sM" x="439.6" y="741.3" color="#ffb000"/><use href="#sM" x="387.4" y="741.3" color="#ff7000"/><use href="#sP" x="359.2" y="762.4" color="#ff7000"/><use href="#sP" x="444.1" y="759.2" color="#ffff00"/><use href="#sM" x="462.0" y="758.4" color="#ffff00"/><use href="#sP" x="493.1" y="757.1" color="#ffd000"/><use href="#sM" x="493.1" y="760.0" color="#ffff00"/><use href="#sP" x="512.1" y="758.4" color="#ffff00"/><use href="#sM" x="527.4" y="749.2" color="#ffff00"/><use href="#sP" x="465.2" y="771.6" color="#ffff00"/><use href="#sP" x="392.4" y="775.5" color="#ffb000"/><use href="#sM" x="399.5" y="785.6" color="#ffd000"/><use href="#sM" x="434.3" y="788.2" color="#ffff00"/><use href="#sM" x="473.1" y="792.7" color="#ffff00"/><use href="#sP" x="488.4" y="800.6" color="#ffff00"/><use href="#sp" x="369.2" y="795.3" color="#ff7000"/><use href="#sM" x="638.4" y="604.5" color="#ffb000"/><use href="#sP" x="609.2" y="624.2" color="#ffb000"/><use href="#sP" x="781.7" y="614.4" color="#ff7000"/><use href="#sM" x="768.3" y="646.0" color="#ff7000"/><use href="#sP" x="739.4" y="677.4" color="#ff7000"/><use href="#sP" x="722.5" y="724.9" color="#ffb000"/><use href="#sM" x="748.2" y="732.0" color="#ffb000"/><use href="#sM" x="773.6" y="755.2" color="#ffff00"/><use href="#sM" x="775.4" y="786.5" color="#ffb000"/><use href="#sM" x="528.2" y="749.6" color="#ffff00"/><use href="#sP" x="512.3" y="758.4" color="#ffff00"/><use href="#sM" x="532.4" y="762.3" color="#ffff00"/><use href="#sP" x="498.3" y="534.0" color="#00e8f0"/><use href="#sP" x="507.2" y="545.8" color="#00e8f0"/><use href="#sM" x="506.4" y="549.5" color="#00e8f0"/><use href="#sM" x="516.8" y="555.4" color="#00e8f0"/><use href="#sP" x="522.7" y="551.0" color="#00e8f0"/><use href="#sP" x="528.6" y="551.0" color="#00e8f0"/><use href="#sP" x="524.2" y="567.2" color="#00e8f0"/><use href="#sP" x="497.6" y="587.2" color="#00e8f0"/><use href="#sm" x="489.4" y="567.2" color="#00e8f0"/><use href="#sP" x="409.6" y="551.7" color="#ff7000"/><use href="#sm" x="410.3" y="556.9" color="#ff7000"/><use href="#sm" x="440.7" y="585.7" color="#ff7000"/><use href="#sP" x="508.7" y="572.4" color="#ffff00"/><use href="#sP" x="424.0" y="600.0" color="#ff9000"/><use href="#sm" x="410.0" y="598.0" color="#ff7000"/><use href="#sP" x="402.8" y="486.3" color="#ffb000"/><use href="#sP" x="405.8" y="497.6" color="#ffb000"/><use href="#sP" x="404.8" y="505.5" color="#ff9000"/><use href="#sM" x="406.3" y="518.3" color="#ff7000"/><use href="#sM" x="399.9" y="525.2" color="#ff7000"/><use href="#sP" x="409.7" y="529.1" color="#ff7000"/><use href="#sP" x="412.7" y="533.1" color="#ffb000"/><use href="#sP" x="422.5" y="519.3" color="#ffb000"/><use href="#sp" x="413.6" y="520.2" color="#ffb000"/><use href="#sP" x="438.3" y="524.2" color="#ffb000"/><use href="#sM" x="448.1" y="518.3" color="#ffb000"/><use href="#sM" x="446.2" y="532.1" color="#ffb000"/><use href="#sM" x="430.4" y="534.0" color="#ffb000"/><use href="#sM" x="423.5" y="538.0" color="#ffb000"/><use href="#sM" x="425.0" y="540.0" color="#ffb000"/><use href="#sp" x="449.1" y="540.0" color="#ffb000"/><use href="#sP" x="455.0" y="526.2" color="#ffb000"/><use href="#sM" x="462.9" y="534.0" color="#ffb000"/><use href="#sM" x="464.9" y="537.0" color="#ffb000"/><use href="#sM" x="458.0" y="489.7" color="#ffd000"/><use href="#sP" x="470.8" y="481.8" color="#ffb000"/><use href="#sP" x="476.7" y="472.0" color="#ffb000"/><use href="#sM" x="408.0" y="444.3" color="#ff7000"/><use href="#sM" x="406.0" y="450.2" color="#ff7000"/><use href="#sM" x="401.1" y="458.0" color="#ff7000"/><use href="#sM" x="401.1" y="463.0" color="#ff7000"/><use href="#sM" x="403.0" y="470.9" color="#ff7000"/><use href="#sM" x="406.2" y="446.8" color="#ff7000"/><use href="#sp" x="413.6" y="461.6" color="#ffb000"/><use href="#sM" x="402.5" y="468.9" color="#ff7000"/><use href="#sP" x="403.8" y="486.2" color="#ff7000"/><use href="#sP" x="406.2" y="505.9" color="#ff7000"/><use href="#sP" x="396.4" y="525.6" color="#ff7000"/><use href="#sM" x="402.5" y="524.3" color="#ff7000"/><use href="#sM" x="411.1" y="530.5" color="#ff7000"/><use href="#sP" x="409.9" y="534.2" color="#ffb000"/><use href="#sP" x="408.7" y="551.4" color="#ff7000"/><use href="#sm" x="397.6" y="551.4" color="#ff7000"/><use href="#sm" x="409.9" y="557.6" color="#ff7000"/><circle cx="406.5" cy="406.5" r="39.5" fill="none" stroke="#ff1414" stroke-width="1.5"/><rect x="394.0" y="6" width="23" height="4" fill="#5c4f4a"/><rect x="394.0" y="125.5" width="23" height="4" fill="#5c4f4a"/><rect x="394.0" y="245" width="23" height="4" fill="#5c4f4a"/><text x="405.5" y="11" text-anchor="middle" font-family="Liberation Sans" font-size="10" letter-spacing="0.8" fill="#f8f0a0" stroke="#3a3040" stroke-width="2.2" stroke-opacity="0.8" paint-order="stroke">313</text><text x="405.5" y="131" text-anchor="middle" font-family="Liberation Sans" font-size="10" letter-spacing="0.8" fill="#f8f0a0" stroke="#3a3040" stroke-width="2.2" stroke-opacity="0.8" paint-order="stroke">219</text><text x="405.5" y="251" text-anchor="middle" font-family="Liberation Sans" font-size="10" letter-spacing="0.8" fill="#f8f0a0" stroke="#3a3040" stroke-width="2.2" stroke-opacity="0.8" paint-order="stroke">125</text><text x="405.5" y="371.5" text-anchor="middle" font-family="Liberation Sans" font-size="10" letter-spacing="0.8" fill="#f8f0a0" stroke="#3a3040" stroke-width="2.2" stroke-opacity="0.8" paint-order="stroke">31</text><polygon points="495.0,569 514.5,549.5 534.0,569 514.5,588.5" fill="none" stroke="#f0e000" stroke-width="1.2" stroke-dasharray="3.5 4.5"/><text x="445" y="506.6" font-family="Liberation Sans" font-size="10" letter-spacing="1.1" fill="#ffffff" stroke="#403830" stroke-width="2" stroke-opacity="0.7" paint-order="stroke">B-3640-10</text><path d="M505 502L508.5 506L512 500" fill="none" stroke="#f0e000" stroke-width="1"/><defs>
<g id="lP"><circle r="4.1" fill="none" stroke="currentColor" stroke-width="1.1"/><path d="M-2.5 0H2.5M0 -2.5V2.5" stroke="currentColor" stroke-width="1.1"/></g>
<g id="lM"><circle r="4.1" fill="none" stroke="currentColor" stroke-width="1.1"/><path d="M-2.5 0H2.5" stroke="currentColor" stroke-width="1.1"/></g>
<g id="lp"><path d="M-3.5 0H3.5M0 -3.5V3.5" stroke="currentColor" stroke-width="1.1"/></g>
<g id="lm"><path d="M-3.5 0H3.5" stroke="currentColor" stroke-width="1.1"/></g>
</defs><rect x="9.5" y="759.5" width="243" height="43" fill="#000" stroke="#a8a8a8" stroke-width="1"/><text x="13.3" y="770.6" font-family="Liberation Sans" font-size="9.2" fill="#e0e0e0">Symbols</text><text x="53" y="770.6" font-family="Liberation Sans" font-size="9.2" fill="#e0e0e0">-CG</text><text x="77.7" y="770.6" font-family="Liberation Sans" font-size="9.2" fill="#e0e0e0">-IC</text><text x="98.7" y="770.6" font-family="Liberation Sans" font-size="9.2" fill="#e0e0e0">+CG</text><text x="123.4" y="770.6" font-family="Liberation Sans" font-size="9.2" fill="#e0e0e0">+IC</text><text x="153" y="770.6" font-family="Liberation Sans" font-size="9.2" fill="#e0e0e0">Strike age color codes</text><text x="13.3" y="783.6" font-family="Liberation Sans" font-size="9.2" fill="#e0e0e0">Recent</text><text x="13.3" y="796.4" font-family="Liberation Sans" font-size="9.2" fill="#e0e0e0">Old</text><use href="#lM" x="60.5" y="780.4" color="#00f0f0"/><use href="#lm" x="85.7" y="780.4" color="#00f0f0"/><use href="#lP" x="110.3" y="780.4" color="#00f0f0"/><use href="#lp" x="135.3" y="780.4" color="#00f0f0"/><use href="#lM" x="60.5" y="793.4" color="#ffff00"/><use href="#lm" x="85.7" y="793.4" color="#ffff00"/><use href="#lP" x="110.3" y="793.4" color="#ffff00"/><use href="#lp" x="135.3" y="793.4" color="#ffff00"/><text x="153.5" y="783.6" font-family="Liberation Sans" font-size="9.2" fill="#ffff00">15+</text><text x="187.3" y="783.6" font-family="Liberation Sans" font-size="9.2" fill="#ffd000">30+</text><text x="221.6" y="783.6" font-family="Liberation Sans" font-size="9.2" fill="#ffb000">45+</text><text x="153.5" y="796.4" font-family="Liberation Sans" font-size="9.2" fill="#ff9000">60+</text><text x="187.3" y="796.4" font-family="Liberation Sans" font-size="9.2" fill="#ff7000">75+</text><text x="221.6" y="796.4" font-family="Liberation Sans" font-size="9.2" fill="#ff5000">90+</text><rect x="685" y="792" width="121" height="14" fill="#000"/><text x="689" y="801.6" font-family="Liberation Sans" font-size="9.4" fill="#f0f0f0">©2005 Astrogenic Systems</text></svg></div>
<div style="position:absolute;left:812px;top:8px;width:320px;height:320px;box-sizing:border-box;border:1px solid #c8c8c8;border-radius:5px;"></div>
<div style="position:absolute;left:812px;top:333px;width:320px;height:115px;box-sizing:border-box;border:1px solid #c8c8c8;border-radius:5px;"></div>
<div style="position:absolute;left:812px;top:453px;width:320px;height:350px;box-sizing:border-box;border:1px solid #c8c8c8;border-radius:5px;"></div>
<div style="position:absolute;left:819px;top:16px;width:58px;height:18px;box-sizing:border-box;background:#5a0000;border:1px solid;border-color:#f0f0f0 #c0c0c0 #c0c0c0 #f0f0f0;"></div>
<div class="t" style="top:18.50px;font-size:13px;font-weight:bold;color:#e0d0d0;left:848px;transform:translateX(-50%);">STRIKE</div>
<div style="position:absolute;left:883px;top:16px;width:58px;height:18px;box-sizing:border-box;background:#333;border:1px solid;border-color:#f0f0f0 #c0c0c0 #c0c0c0 #f0f0f0;"></div>
<div class="t" style="top:18.50px;font-size:13px;font-weight:bold;color:#d0d0d0;letter-spacing:0.5px;left:912px;transform:translateX(-50%);">NOISE</div>
<div style="position:absolute;left:994px;top:16px;width:128px;height:18px;box-sizing:border-box;background:#3a3a3a;border:1px solid;border-color:#f0f0f0 #b0b0b0 #b0b0b0 #f0f0f0;"></div>
<div class="t" style="top:18.50px;font-size:13px;font-weight:bold;color:#fff;letter-spacing:0.7px;left:999px;">Bng 335°</div>
<div class="t" style="top:18.50px;font-size:13px;font-weight:bold;color:#00e000;letter-spacing:1.0px;right:20px;">346mi</div>
<div style="position:absolute;left:821px;top:64px;width:82px;height:16px;box-sizing:border-box;background:#595959;border:1px solid;border-color:#f8f8f8 #a8a8a8 #a8a8a8 #f8f8f8;"></div>
<div class="t" style="left:821px;width:82px;text-align:center;top:65.84px;font-size:12px;color:#f0f0f0;letter-spacing:0.55px">Strikes/min</div>
<div style="position:absolute;left:931px;top:64px;width:82px;height:16px;box-sizing:border-box;background:#595959;border:1px solid;border-color:#f8f8f8 #a8a8a8 #a8a8a8 #f8f8f8;"></div>
<div class="t" style="left:931px;width:82px;text-align:center;top:65.84px;font-size:12px;color:#f0f0f0;letter-spacing:0.55px">Close/min</div>
<div style="position:absolute;left:1041px;top:64px;width:82px;height:16px;box-sizing:border-box;background:#595959;border:1px solid;border-color:#f8f8f8 #a8a8a8 #a8a8a8 #f8f8f8;"></div>
<div class="t" style="left:1041px;width:82px;text-align:center;top:65.84px;font-size:12px;color:#f0f0f0;letter-spacing:0.55px">Noises/min</div>
<div class="t" style="top:87.45px;font-size:29px;font-weight:bold;color:#fff;letter-spacing:4px;right:232px;transform:scaleX(1.12);transform-origin:100% 0;">11</div>
<div class="t" style="top:87.45px;font-size:29px;font-weight:bold;color:#fff;right:125px;transform:scaleX(1.12);transform-origin:100% 0;">0</div>
<div class="t" style="top:87.45px;font-size:29px;font-weight:bold;color:#c8c8c8;right:15px;transform:scaleX(1.12);transform-origin:100% 0;">1</div>
<div class="t" style="top:131.60px;font-size:13px;font-weight:normal;color:#fff;letter-spacing:0.38px;right:236px;">Total Strikes</div>
<div class="t" style="top:149.40px;font-size:13px;font-weight:normal;color:#fff;letter-spacing:0.4px;right:236px;">2546</div>
<div class="t" style="top:131.60px;font-size:13px;font-weight:normal;color:#fff;letter-spacing:0.38px;right:126px;">Total Close</div>
<div class="t" style="top:149.40px;font-size:13px;font-weight:normal;color:#fff;letter-spacing:0.4px;right:126px;">600</div>
<div class="t" style="top:131.60px;font-size:13px;font-weight:normal;color:#c8c8c8;letter-spacing:0.38px;right:16px;">Total Noises</div>
<div class="t" style="top:149.40px;font-size:13px;font-weight:normal;color:#fff;letter-spacing:0.4px;right:16px;">328</div>
<div class="t" style="top:204.00px;font-size:13px;font-weight:normal;color:#c0c0c0;letter-spacing:0.66px;left:821px;">Lightning type distribution</div>
<div style="position:absolute;left:821px;top:217px;width:302px;height:1px;background:#909090"></div>
<div class="t" style="top:226.34px;font-size:12px;font-weight:bold;color:#fff;letter-spacing:0.45px;left:821px;">Cloud-ground</div>
<div class="t" style="top:226.34px;font-size:12px;font-weight:bold;color:#e0e0e0;left:913px;">+</div>
<div style="position:absolute;left:925px;top:228px;width:51px;height:11px;box-sizing:border-box;background:#000;border:1px solid;border-color:#a0a0a0 #a0a0a0 #a0a0a0 #a0a0a0;border-radius:2px;"></div>
<div style="position:absolute;left:926px;top:229px;width:17px;height:9px;background:#ff0000"></div>
<div class="t" style="top:226.34px;font-size:12px;font-weight:bold;color:#fff;letter-spacing:0.5px;left:979px;">34%</div>
<div class="t" style="top:225.34px;font-size:12px;font-weight:bold;color:#e0e0e0;left:1016px;">−</div>
<div style="position:absolute;left:1028px;top:228px;width:51px;height:11px;box-sizing:border-box;background:#000;border:1px solid;border-color:#a0a0a0 #a0a0a0 #a0a0a0 #a0a0a0;border-radius:2px;"></div>
<div style="position:absolute;left:1029px;top:229px;width:24px;height:9px;background:#a0d0ff"></div>
<div class="t" style="top:226.34px;font-size:12px;font-weight:bold;color:#fff;letter-spacing:0.5px;left:1082px;">49%</div>
<div class="t" style="top:250.54px;font-size:12px;font-weight:bold;color:#c8c8c8;letter-spacing:0.6px;left:821px;">Count</div>
<div class="t" style="top:250.54px;font-size:12px;font-weight:bold;color:#fff;letter-spacing:0.6px;left:925px;">862</div>
<div class="t" style="top:250.54px;font-size:12px;font-weight:bold;color:#fff;letter-spacing:0.6px;left:1028px;">1251</div>
<div class="t" style="top:280.34px;font-size:12px;font-weight:bold;color:#fff;letter-spacing:0.45px;left:821px;">Intracloud</div>
<div class="t" style="top:280.34px;font-size:12px;font-weight:bold;color:#e0e0e0;left:913px;">+</div>
<div style="position:absolute;left:925px;top:282px;width:51px;height:11px;box-sizing:border-box;background:#000;border:1px solid;border-color:#a0a0a0 #a0a0a0 #a0a0a0 #a0a0a0;border-radius:2px;"></div>
<div style="position:absolute;left:926px;top:283px;width:3px;height:9px;background:#ff60b0"></div>
<div class="t" style="top:280.34px;font-size:12px;font-weight:bold;color:#fff;letter-spacing:0.5px;left:979px;">6%</div>
<div class="t" style="top:279.34px;font-size:12px;font-weight:bold;color:#e0e0e0;left:1016px;">−</div>
<div style="position:absolute;left:1028px;top:282px;width:51px;height:11px;box-sizing:border-box;background:#000;border:1px solid;border-color:#a0a0a0 #a0a0a0 #a0a0a0 #a0a0a0;border-radius:2px;"></div>
<div style="position:absolute;left:1029px;top:283px;width:5px;height:9px;background:#00ff00"></div>
<div class="t" style="top:280.34px;font-size:12px;font-weight:bold;color:#fff;letter-spacing:0.5px;left:1082px;">11%</div>
<div class="t" style="top:304.54px;font-size:12px;font-weight:bold;color:#c8c8c8;letter-spacing:0.6px;left:821px;">Count</div>
<div class="t" style="top:304.54px;font-size:12px;font-weight:bold;color:#fff;letter-spacing:0.6px;left:925px;">144</div>
<div class="t" style="top:304.54px;font-size:12px;font-weight:bold;color:#fff;letter-spacing:0.6px;left:1028px;">289</div>
<div class="t" style="top:339.36px;font-size:16px;font-weight:bold;color:#00ff00;left:821.5px;transform:scaleX(1.265);transform-origin:0 0;">3/10/2026 2:00:00 AM</div>
<div style="position:absolute;left:821px;top:358px;width:302px;height:1px;background:#909090"></div>
<div class="t" style="top:377.30px;font-size:13px;font-weight:normal;color:#fff;letter-spacing:0.4px;left:821.5px;">Squelch</div>
<div class="t" style="top:377.30px;font-size:13px;font-weight:normal;color:#fff;letter-spacing:0.4px;left:909.5px;">0</div>
<div class="t" style="top:377.30px;font-size:13px;font-weight:normal;color:#fff;letter-spacing:0.4px;left:981px;">Upload</div>
<div class="t" style="top:377.30px;font-size:13px;font-weight:normal;color:#c8c8c8;letter-spacing:0.4px;left:1061px;">Disabled</div>
<div class="t" style="top:397.30px;font-size:13px;font-weight:normal;color:#fff;letter-spacing:0.4px;left:821.5px;">Persistence</div>
<div class="t" style="top:397.30px;font-size:13px;font-weight:normal;color:#fff;letter-spacing:0.4px;left:909.5px;">90 min</div>
<div class="t" style="top:397.30px;font-size:13px;font-weight:normal;color:#fff;letter-spacing:0.4px;left:981px;">Capture</div>
<div class="t" style="top:397.30px;font-size:13px;font-weight:normal;color:#00e000;letter-spacing:0.4px;left:1061px;">Active</div>
<div class="t" style="top:417.30px;font-size:13px;font-weight:normal;color:#fff;letter-spacing:0.4px;left:821.5px;">Range</div>
<div class="t" style="top:417.30px;font-size:13px;font-weight:normal;color:#fff;letter-spacing:0.4px;left:909.5px;">313 mi</div>
<div class="t" style="top:417.30px;font-size:13px;font-weight:normal;color:#fff;letter-spacing:0.4px;left:981px;">Receiver</div>
<div class="t" style="top:417.30px;font-size:13px;font-weight:normal;color:#00e000;letter-spacing:0.4px;left:1061px;">Enabled</div>
<div class="t" style="top:463.50px;font-size:13px;font-weight:normal;color:#e8e8e8;letter-spacing:0.4px;left:821.5px;">Uptime</div>
<div class="t" style="top:463.50px;font-size:13px;font-weight:normal;color:#fff;letter-spacing:0.4px;left:909.5px;">1357:45</div>
<div class="t" style="top:463.50px;font-size:13px;font-weight:normal;color:#e8e8e8;letter-spacing:0.4px;left:981px;">Peak time</div>
<div class="t" style="top:463.50px;font-size:13px;font-weight:normal;color:#fff;letter-spacing:0.4px;left:1061px;">Plot</div>
<div class="t" style="top:487.00px;font-size:13px;font-weight:normal;color:#e8e8e8;letter-spacing:0.4px;left:821.5px;">Peak rate</div>
<div class="t" style="top:487.00px;font-size:13px;font-weight:normal;color:#fff;letter-spacing:0.4px;left:909.5px;">120/min</div>
<div class="t" style="top:487.00px;font-size:13px;font-weight:normal;color:#e8e8e8;letter-spacing:0.4px;left:981px;">12:00 AM</div>
<div class="t" style="top:487.00px;font-size:13px;font-weight:normal;color:#fff;letter-spacing:0.4px;left:1061px;">Strike</div>
<div class="t" style="top:517.00px;font-size:13px;font-weight:normal;color:#e8e8e8;letter-spacing:0.4px;left:822px;">Trend graph</div>
<div class="t" style="top:517.00px;font-size:13px;font-weight:normal;color:#fff;letter-spacing:0.4px;left:908.5px;">60 min</div>

<svg style="position:absolute;left:812px;top:453px" width="320" height="350" viewBox="812 453 320 350" shape-rendering="crispEdges"><polyline points="822.0,775.0 825.5,775.0 829.0,777.0 832.5,777.0 836.0,775.0 839.5,776.0 843.0,777.0 846.5,777.0 850.0,777.0 853.5,777.0 857.0,776.0 860.5,777.0 864.0,775.0 867.5,777.0 871.0,776.0 874.5,777.0 878.0,777.0 881.5,775.0 885.0,777.0 888.5,775.0 892.0,777.0 895.5,777.0 899.0,775.0 902.5,777.0 906.0,777.0 909.5,775.0 913.0,775.0 916.5,775.0 920.0,777.0 923.5,777.0 927.0,777.0 930.5,777.0 934.0,776.0 937.5,777.0 941.0,777.0 944.5,777.0 948.0,776.0 951.5,777.0 955.0,776.0 958.5,775.0 962.0,775.0 965.5,777.0 969.0,777.0 972.5,775.0 976.0,777.0 979.5,777.0 983.0,777.0 986.5,777.0 990.0,777.0 993.5,776.0 997.0,777.0 1000.5,777.0 1004.0,775.0 1007.5,775.0 1011.0,777.0 1014.5,777.0 1018.0,777.0 1021.5,777.0 1025.0,775.0 1028.5,776.0 1032.0,777.0 1035.5,775.0 1039.0,776.0 1042.5,775.0 1046.0,775.0 1049.5,775.0 1053.0,777.0 1056.5,777.0 1060.0,777.0 1063.5,777.0 1067.0,777.0 1070.5,777.0 1074.0,777.0 1077.5,777.0 1081.0,777.0 1084.5,777.0 1088.0,776.0" fill="none" stroke="#ff80c0" stroke-width="1"/><polyline points="822.4,774.6 824.2,762.3 826.6,757.3 829.1,763.5 831.5,772.1 835.2,767.2 840.2,750.0 842.6,762.3 846.3,769.7 850.0,772.1 855.0,769.7 858.6,763.5 862.3,762.3 866.0,769.7 868.5,764.7 871.0,762.3 874.7,769.7 878.3,768.4 882.0,769.7 888.2,772.1 891.9,763.5 894.4,763.5 898.0,772.1 901.7,774.6 914.0,767.2 916.5,772.1 920.0,773.0 923.0,777.0 926.0,776.0 929.0,777.0 932.0,777.0 935.0,777.0 938.0,777.0 941.0,773.0 944.0,772.0 947.0,777.0 950.0,771.0 953.0,775.0 956.0,777.0 959.0,777.0 962.0,776.0 965.0,776.0 968.0,777.0 971.0,775.0 974.0,777.0 977.0,777.0 980.0,776.0 983.0,777.0 986.0,772.0 989.0,777.0 992.0,775.0 995.0,772.0 998.0,777.0 1001.0,772.0 1004.0,772.0 1007.0,776.0 1010.0,777.0 1013.0,775.0 1016.0,777.0 1019.0,777.0 1022.0,777.0 1025.0,774.0 1028.0,776.0 1031.0,777.0 1034.0,777.0 1037.0,777.0 1040.0,772.0 1043.0,774.0 1046.0,777.0 1049.0,777.0 1052.0,777.0 1055.0,772.0 1058.0,772.0 1061.0,775.0 1064.0,773.0 1067.0,777.0 1070.0,777.0 1073.0,777.0 1076.0,772.0 1079.0,777.0 1082.0,772.0 1085.0,775.0 1088.0,777.0" fill="none" stroke="#00e000" stroke-width="1"/><polyline points="822.4,747.5 825.4,720.4 827.9,732.7 830.3,752.4 832.8,730.2 835.2,742.6 837.7,737.6 841.4,732.7 842.6,747.5 846.3,725.3 848.8,752.4 851.3,767.2 855.0,747.5 858.6,745.0 861.1,752.4 866.0,730.2 869.7,752.4 873.4,769.7 877.1,747.5 882.0,757.3 887.0,772.1 891.9,752.4 896.8,762.3 901.7,774.6 906.7,762.3 911.6,757.3 916.5,752.4 918.7,766.1 919.9,765.4 922.4,762.9 924.4,767.2 926.8,772.0 928.5,769.5 931.0,770.9 933.5,766.2 936.0,768.6 938.4,773.8 940.9,764.9 942.6,774.9 945.0,776.0 947.0,768.4 948.7,743.3 950.2,741.4 951.9,731.7 953.2,760.8 954.9,776.3 958.1,771.5 960.6,766.6 963.0,767.6 965.5,763.0 968.0,776.2 970.4,774.6 972.9,770.7 975.3,761.8 977.0,774.9 979.5,776.1 981.5,768.9 985.2,768.0 987.7,746.6 990.1,757.2 992.6,766.5 995.0,770.0 998.7,768.5 1001.5,763.4 1003.0,772.4 1005.2,776.1 1008.1,773.0 1011.8,772.3 1018.5,776.9 1022.2,776.9 1025.9,775.9 1028.8,776.9 1030.3,772.6 1034.0,770.9 1036.9,767.8 1039.9,763.9 1042.1,751.3 1044.3,761.7 1046.5,774.3 1047.3,762.5 1049.5,753.7 1051.7,764.5 1053.2,776.9 1055.4,769.7 1058.4,766.5 1060.6,768.8 1063.5,767.9 1066.5,772.0 1068.0,773.5 1070.9,769.2 1073.1,769.3 1075.4,775.9 1077.6,772.2 1079.0,754.1 1081.3,757.1 1083.5,775.1 1085.7,771.7 1087.9,772.5 1088.7,776.9" fill="none" stroke="#ff0000" stroke-width="1"/><polyline points="822.4,698.2 825.4,673.6 827.9,690.8 830.3,718.0 832.8,750.0 836.5,737.6 840.2,720.4 842.6,727.8 845.1,742.6 847.6,752.4 851.3,750.0 855.0,727.8 858.6,710.5 861.1,722.9 864.8,747.5 868.5,718.0 871.0,727.8 874.7,757.3 878.3,752.4 882.0,737.6 885.7,759.8 890.7,752.4 893.1,737.6 896.8,752.4 901.7,767.2 906.7,750.0 911.6,742.6 915.3,722.9 918.0,732.7 918.7,747.9 919.9,753.8 922.4,742.0 924.4,756.5 926.8,767.8 928.5,746.5 931.0,761.5 933.5,762.5 936.0,751.2 938.4,768.2 940.9,758.6 942.6,773.9 945.0,775.7 947.0,763.2 948.7,721.4 950.2,672.3 951.9,725.2 953.2,759.0 954.9,775.9 958.1,766.9 960.6,758.2 963.0,752.8 965.5,753.0 968.0,776.0 970.4,771.2 972.9,760.2 975.3,762.7 977.0,772.1 979.5,775.9 981.5,768.0 985.2,759.6 987.7,729.0 990.1,741.5 992.6,758.0 995.0,763.2 998.7,765.0 1001.5,762.2 1003.0,759.3 1005.2,774.1 1008.1,763.8 1011.8,769.8 1018.5,776.9 1022.2,776.8 1025.9,774.9 1028.8,776.9 1030.3,770.3 1034.0,765.4 1036.9,760.5 1039.9,761.5 1042.1,739.9 1044.3,755.6 1046.5,774.0 1047.3,753.6 1049.5,748.7 1051.7,759.5 1053.2,776.8 1055.4,765.9 1058.4,767.3 1060.6,763.2 1063.5,765.9 1066.5,768.4 1068.0,766.0 1070.9,769.4 1073.1,761.6 1075.4,774.6 1077.6,760.7 1079.0,755.1 1081.3,759.1 1083.5,772.3 1085.7,767.5 1087.9,769.6 1088.7,776.8" fill="none" stroke="#a8d8ff" stroke-width="1"/><polyline points="822.4,660.0 825.4,589.4 827.4,614.5 828.8,668.7 830.3,690.8 832.0,688.0 834.0,722.9 837.2,678.5 840.4,645.3 842.6,676.0 844.6,710.5 847.0,688.4 849.5,732.7 851.3,757.3 855.0,725.0 859.4,664.5 861.8,703.0 864.8,737.6 868.5,673.6 871.0,693.3 873.4,750.0 875.0,767.0 879.6,673.6 882.0,718.0 884.5,762.0 888.0,750.0 893.0,697.0 896.3,732.7 900.5,774.6 905.4,737.6 910.4,730.0 914.0,688.4 915.0,693.3 917.5,700.7 918.7,727.8 919.9,740.1 922.4,722.9 924.4,747.5 926.8,762.3 928.5,732.7 931.0,737.6 933.5,750.0 936.0,740.0 938.4,762.3 940.9,750.0 942.6,769.7 945.0,774.6 947.0,747.5 948.7,678.5 950.2,594.8 951.9,644.0 953.2,737.6 954.9,774.6 958.1,762.3 960.6,747.5 963.0,721.6 965.5,740.0 968.0,774.6 970.4,767.2 972.9,737.6 975.3,740.0 977.0,769.7 979.5,774.6 981.5,757.3 985.2,752.4 987.7,705.6 990.1,703.2 992.6,750.0 995.0,752.4 998.7,757.3 1001.5,744.2 1003.0,751.6 1005.2,772.3 1008.1,758.3 1011.8,766.4 1018.5,776.7 1022.2,776.7 1025.9,772.3 1028.8,776.7 1030.3,760.5 1034.0,753.1 1036.9,748.7 1039.9,736.8 1042.1,716.1 1044.3,733.9 1046.5,770.8 1047.3,741.3 1049.5,725.0 1051.7,741.3 1053.2,776.7 1055.4,759.0 1058.4,753.1 1060.6,757.5 1063.5,748.7 1066.5,763.4 1068.0,760.5 1070.9,757.5 1073.1,753.1 1075.4,772.3 1077.6,748.7 1079.0,720.6 1081.3,732.4 1083.5,766.4 1085.7,763.4 1087.9,760.5 1088.7,776.7" fill="none" stroke="#ffffff" stroke-width="1"/><path d="M1088.5 542V777.5M822 777.5H1089" stroke="#c8c8c8" stroke-width="1" fill="none"/><path d="M1084 543.5H1088" stroke="#c8c8c8" stroke-width="1"/><path d="M1084 590.5H1088" stroke="#c8c8c8" stroke-width="1"/><path d="M1084 637.5H1088" stroke="#c8c8c8" stroke-width="1"/><path d="M1084 683.5H1088" stroke="#c8c8c8" stroke-width="1"/><path d="M1084 730.5H1088" stroke="#c8c8c8" stroke-width="1"/><path d="M1044.5 777V780" stroke="#c8c8c8" stroke-width="1"/></svg><div class="t" style="left:1092px;top:537.14px;font-size:12px;color:#e0e0e0;letter-spacing:0.3px">50</div><div class="t" style="left:1092px;top:584.14px;font-size:12px;color:#e0e0e0;letter-spacing:0.3px">40</div><div class="t" style="left:1092px;top:631.14px;font-size:12px;color:#e0e0e0;letter-spacing:0.3px">30</div><div class="t" style="left:1092px;top:677.14px;font-size:12px;color:#e0e0e0;letter-spacing:0.3px">20</div><div class="t" style="left:821.0px;top:782.64px;font-size:12px;color:#e0e0e0;letter-spacing:0.3px">60</div><div class="t" style="left:865.3px;top:782.64px;font-size:12px;color:#e0e0e0;letter-spacing:0.3px">50</div><div class="t" style="left:909.7px;top:782.64px;font-size:12px;color:#e0e0e0;letter-spacing:0.3px">40</div><div class="t" style="left:954.0px;top:782.64px;font-size:12px;color:#e0e0e0;letter-spacing:0.3px">30</div><div class="t" style="left:998.3px;top:782.64px;font-size:12px;color:#e0e0e0;letter-spacing:0.3px">20</div><div class="t" style="left:1042.7px;top:782.64px;font-size:12px;color:#e0e0e0;letter-spacing:0.3px">10</div><div class="t" style="left:1087.0px;top:782.64px;font-size:12px;color:#e0e0e0;letter-spacing:0.3px">0</div><div class="t" style="left:1100px;top:782.64px;font-size:12px;color:#e0e0e0;letter-spacing:0.3px">min</div>
</body></html>
